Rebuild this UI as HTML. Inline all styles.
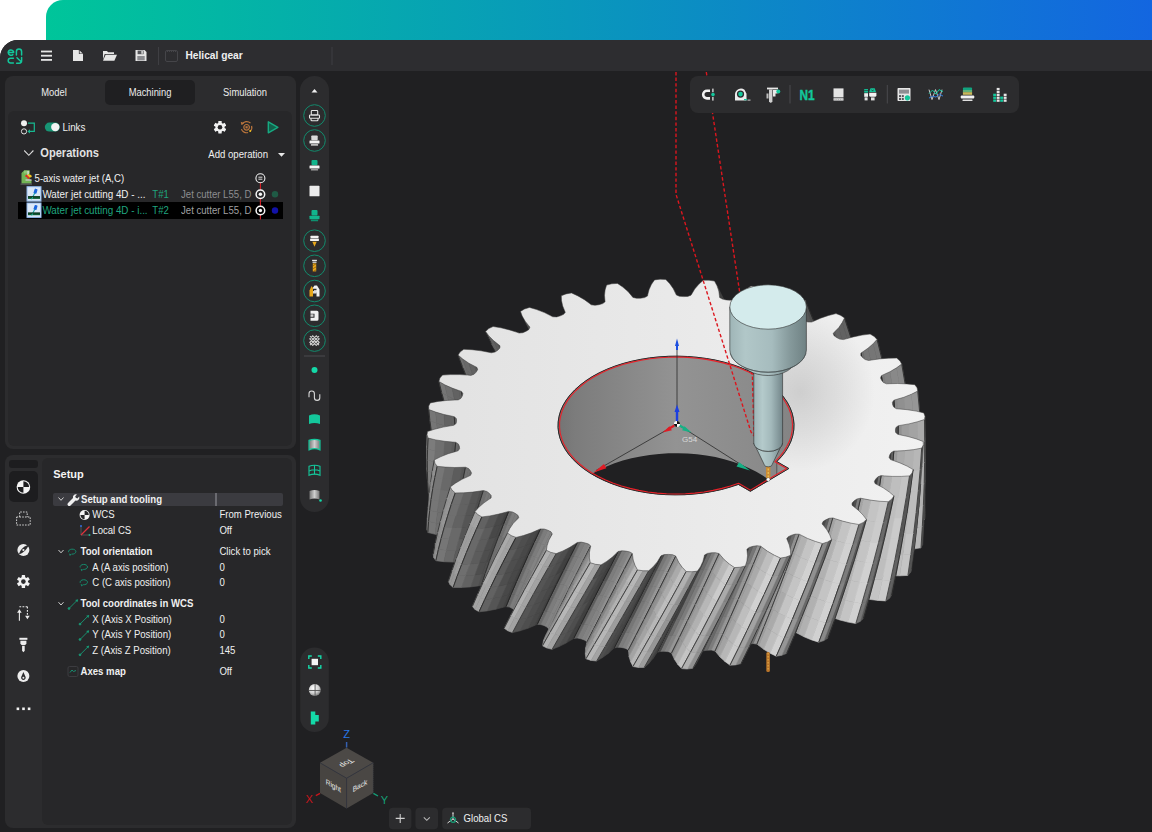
<!DOCTYPE html>
<html lang="en">
<head>
<meta charset="utf-8">
<title>Helical gear</title>
<style>
*{box-sizing:border-box;margin:0;padding:0}
html,body{width:1152px;height:832px;overflow:hidden;background:#fff}
body{font-family:"Liberation Sans",sans-serif;color:#e8e8e8;position:relative;font-size:10.5px}
.abs{position:absolute}
#banner{left:46px;top:0;width:1106px;height:60px;border-top-left-radius:17px;background:linear-gradient(90deg,#00c59a 0%,#1366e0 100%)}
#app{left:0;top:40px;width:1152px;height:792px;background:#202022;border-top-left-radius:18px;overflow:hidden}
#titlebar{left:0;top:0;width:1152px;height:31px;background:#2d2d30}
.panel{background:#2c2c2e;border-radius:8px}
.inner{background:#272729;border-radius:6px}
.tab{font-size:9.4px;color:#ececec;transform:scaleY(1.13);transform-origin:50% 55%}
.r{font-size:9.6px;color:#f0f0f0}
.r,.o{transform:scaleY(1.13);transform-origin:0 50%}
.t{position:absolute;white-space:nowrap;line-height:1}
</style>
</head>
<body>
<div id="banner" class="abs"></div>
<div id="app" class="abs">
<div id="titlebar" class="abs"></div>

<svg class="abs" style="left:0;top:0" width="340" height="31" viewBox="0 0 340 31">
 <!-- ENCY logo -->
 <g fill="none" stroke="#12c79b" stroke-width="1.5" stroke-linecap="round" stroke-linejoin="round">
  <path d="M13.6 12.6H8.2M8.2 12.6a2.8 2.8 0 0 1 5.5-.6M8.2 12.6a2.8 2.8 0 0 0 4.6 2"/>
  <path d="M16.4 15V11.6a2.6 2.6 0 0 1 5.2 0V15"/>
  <path d="M13.4 18.2H10.6a2.4 2.4 0 0 0 0 4.8h2.8"/>
  <path d="M21.6 17.6v3.2a2.4 2.4 0 0 1-2.4 2.4h-2.6M17 17.8l3.6 3.4"/>
 </g>
 <!-- hamburger -->
 <g fill="#e6e6e6"><rect x="41" y="10.6" width="11" height="1.8"/><rect x="41" y="14.8" width="11" height="1.8"/><rect x="41" y="19" width="11" height="1.8"/></g>
 <!-- new file -->
 <path d="M73 10h5.5l4.5 4.3V21H73z" fill="#e6e6e6"/><path d="M78.9 10.2l3.9 3.8h-3.9z" fill="#2d2d30"/><path d="M79.6 10.6l3 3h-3z" fill="#dcdcdc"/>
 <!-- open folder -->
 <path d="M103 11h4l1 1.3h6V14h-9.3L103 19.5z" fill="#e6e6e6"/><path d="M105.6 14.8H117l-2.6 6H103z" fill="#e6e6e6"/>
 <!-- save -->
 <path d="M135.5 10h9l2 2v9h-11z" fill="#e6e6e6"/><rect x="137.6" y="10.6" width="6" height="3.6" fill="#55565a"/><rect x="141.4" y="11" width="1.4" height="2.8" fill="#e6e6e6"/><rect x="137.3" y="16" width="7.4" height="4.4" fill="#8a8b8f"/>
 <rect x="158" y="7" width="1" height="18" fill="#3f3f43"/>
 <!-- doc icon dim -->
 <rect x="165.5" y="10.5" width="12" height="11" rx="1.5" fill="none" stroke="#454549" stroke-width="1"/>
 <path d="M167 11.5h9" stroke="#454549" stroke-width="1" stroke-dasharray="1 1"/>
 <rect x="331.500" y="7" width="1" height="18" fill="#3f3f43"/>
</svg>
<div class="t" style="left:185.5px;top:11px;font-size:10.2px;font-weight:bold;color:#f0f0f0">Helical gear</div>

<!--VP0--><svg class="abs" style="left:0;top:-40px" width="1152" height="832" viewBox="0 0 1152 832">
<style>.e{stroke:#1c1c1c;stroke-width:.7;fill:none}.g0{fill:#000000;stroke:#000000}.g1{fill:#070707;stroke:#070707}.g2{fill:#0d0d0d;stroke:#0d0d0d}.g3{fill:#141414;stroke:#141414}.g4{fill:#1a1a1a;stroke:#1a1a1a}.g5{fill:#212121;stroke:#212121}.g6{fill:#272727;stroke:#272727}.g7{fill:#2e2e2e;stroke:#2e2e2e}.g8{fill:#343434;stroke:#343434}.g9{fill:#3b3b3b;stroke:#3b3b3b}.g10{fill:#414141;stroke:#414141}.g11{fill:#484848;stroke:#484848}.g12{fill:#4e4e4e;stroke:#4e4e4e}.g13{fill:#555555;stroke:#555555}.g14{fill:#5c5c5c;stroke:#5c5c5c}.g15{fill:#626262;stroke:#626262}.g16{fill:#696969;stroke:#696969}.g17{fill:#6f6f6f;stroke:#6f6f6f}.g18{fill:#767676;stroke:#767676}.g19{fill:#7c7c7c;stroke:#7c7c7c}.g20{fill:#838383;stroke:#838383}.g21{fill:#898989;stroke:#898989}.g22{fill:#909090;stroke:#909090}.g23{fill:#969696;stroke:#969696}.g24{fill:#9d9d9d;stroke:#9d9d9d}.g25{fill:#a3a3a3;stroke:#a3a3a3}.g26{fill:#aaaaaa;stroke:#aaaaaa}.g27{fill:#b1b1b1;stroke:#b1b1b1}.g28{fill:#b7b7b7;stroke:#b7b7b7}.g29{fill:#bebebe;stroke:#bebebe}.g30{fill:#c4c4c4;stroke:#c4c4c4}.g31{fill:#cbcbcb;stroke:#cbcbcb}.g32{fill:#d1d1d1;stroke:#d1d1d1}.g33{fill:#d8d8d8;stroke:#d8d8d8}.g34{fill:#dedede;stroke:#dedede}.g35{fill:#e5e5e5;stroke:#e5e5e5}.g36{fill:#ebebeb;stroke:#ebebeb}.g37{fill:#f2f2f2;stroke:#f2f2f2}.g38{fill:#f8f8f8;stroke:#f8f8f8}.g39{fill:#ffffff;stroke:#ffffff}</style>
<defs>
<linearGradient id="topg" x1="0" y1="0" x2="1" y2="0"><stop offset="0" stop-color="#e2e2e2"/><stop offset=".55" stop-color="#eaeaea"/><stop offset="1" stop-color="#f1f1f1"/></linearGradient>
<linearGradient id="boreg" x1="0" y1="0" x2="1" y2="0"><stop offset="0" stop-color="#666"/><stop offset=".16" stop-color="#7c7c7c"/><stop offset=".5" stop-color="#939393"/><stop offset=".8" stop-color="#8a8a8a"/><stop offset="1" stop-color="#7c7c7c"/></linearGradient>
<clipPath id="borec"><ellipse cx="676.0" cy="425.5" rx="118.0" ry="69.3486"/></clipPath>
</defs>
<g stroke-width=".6" stroke-linejoin="round">
<path class="g10" d="M723.0 388.5l-1.7-5.4l-8.5-17l2 5.3z"/>
<path class="g11" d="M766.7 391.0l-0.7-4.8l-8.4-17.9l1 4.7z"/><path class="e" d="M766.0 386.2l-8.4-17.9"/>
<path class="g9" d="M679.6 390.1l-2-4.4l-8.3-16.1l2.2 4.4z"/>
<path class="g10" d="M723.4 393.1l-0.4-4.6l-8.2-17.1l0.7 4.6z"/>
<path class="g8" d="M680.4 392.0l-0.8-1.9l-8.1-16.1l0.9 1.8z"/><path class="e" d="M680.4 392.0l-8-16.2"/>
<path class="g11" d="M766.5 396.5l0.2-5.5l-8.1-18l0.2 5.5z"/>
<path class="g10" d="M714.8 371.4l-2-5.3l-8.6-16.8l2.3 5.2z"/>
<path class="g9" d="M723.6 395.0l-0.2-1.9l-7.9-17.1l0.3 1.9z"/><path class="e" d="M723.6 395.0l-7.8-17.1"/>
<path class="g11" d="M758.6 373.0l-1-4.7l-8.5-17.8l1.4 4.7z"/><path class="e" d="M757.6 368.3l-8.5-17.8"/>
<path class="g10" d="M765.5 401.0l1-4.5l-7.7-18l-0.8 4.5z"/>
<path class="g10" d="M715.5 376.0l-0.7-4.6l-8.3-16.9l1.1 4.6z"/>
<path class="g11" d="M758.8 378.5l-0.2-5.5l-8.1-17.8l0.5 5.5z"/>
<path class="g12" d="M808.6 403.9l0.9-4.7l-7.6-18.9l-0.6 4.8z"/><path class="e" d="M809.5 399.2l-7.6-18.9"/>
<path class="g10" d="M706.5 354.5l-2.3-5.2l-8.5-16.7l2.6 5.2z"/>
<path class="g10" d="M765.0 402.9l0.5-1.9l-7.5-18l-0.3 1.9z"/><path class="e" d="M765.0 402.9l-7.3-18"/>
<path class="g9" d="M715.8 377.9l-0.3-1.9l-7.9-16.9l0.4 1.9z"/><path class="e" d="M715.8 377.9l-7.8-16.9"/>
<path class="g11" d="M750.5 355.2l-1.4-4.7l-8.5-17.6l1.6 4.7z"/><path class="e" d="M749.1 350.5l-8.5-17.6"/>
<path class="g10" d="M758.0 383.0l0.8-4.5l-7.8-17.8l-0.5 4.5z"/>
<path class="g12" d="M806.6 409.3l2-5.4l-7.3-18.8l-1.6 5.3z"/>
<path class="g9" d="M707.6 359.1l-1.1-4.6l-8.2-16.7l1.3 4.5z"/>
<path class="g12" d="M801.3 385.1l0.6-4.8l-7.8-18.8l-0.2 4.8z"/><path class="e" d="M801.9 380.3l-7.8-18.8"/>
<path class="g11" d="M751.0 360.7l-0.5-5.5l-8.3-17.6l0.8 5.4z"/>
<path class="g10" d="M757.7 384.9l0.3-1.9l-7.5-17.8l-0.3 1.9z"/><path class="e" d="M757.7 384.9l-7.5-17.8"/>
<path class="g11" d="M742.2 337.6l-1.6-4.7l-8.6-17.5l1.9 4.7z"/><path class="e" d="M740.6 332.9l-8.6-17.5"/>
<path class="g9" d="M708.0 361.0l-0.4-1.9l-8-16.8l0.5 1.9z"/><path class="e" d="M708.0 361.0l-7.9-16.8"/>
<path class="g13" d="M804.1 413.6l2.5-4.3l-6.9-18.9l-2.3 4.4z"/>
<path class="g12" d="M799.7 390.4l1.6-5.3l-7.4-18.8l-1.4 5.4z"/>
<path class="g10" d="M750.5 365.2l0.5-4.5l-8-17.7l-0.2 4.6z"/>
<path class="g12" d="M793.9 366.3l0.2-4.8l-7.9-18.5l0 4.8z"/><path class="e" d="M794.1 361.5l-7.9-18.5"/>
<path class="g12" d="M803.0 415.4l1.1-1.8l-6.7-18.8l-1 1.8z"/><path class="e" d="M803.0 415.4l-6.6-18.8"/>
<path class="g11" d="M743.0 343.0l-0.8-5.4l-8.3-17.5l1.1 5.4z"/>
<path class="g9" d="M699.6 342.3l-1.3-4.5l-8.3-16.5l1.5 4.5z"/>
<path class="g9" d="M750.2 367.1l0.3-1.9l-7.7-17.6l-0.1 1.9z"/><path class="e" d="M750.2 367.1l-7.5-17.6"/>
<path class="g11" d="M733.9 320.1l-1.9-4.7l-8.7-17.2l2.2 4.6z"/><path class="e" d="M732.0 315.4l-8.7-17.2"/>
<path class="g12" d="M797.4 394.8l2.3-4.4l-7.2-18.7l-2 4.5z"/>
<path class="g9" d="M700.1 344.2l-0.5-1.9l-8.1-16.5l0.7 1.8z"/><path class="e" d="M700.1 344.2l-7.9-16.6"/>
<path class="g12" d="M792.5 371.7l1.4-5.4l-7.7-18.5l-1 5.4z"/>
<path class="g15" d="M845.4 421.4l2.4-4.6l-6.5-19.7l-2.1 4.7z"/><path class="e" d="M847.8 416.8l-6.5-19.7"/>
<path class="g12" d="M786.2 347.8l0-4.8l-8-18.4l0.3 4.8z"/><path class="e" d="M786.2 343.0l-8-18.4"/>
<path class="g10" d="M742.8 347.6l0.2-4.6l-8-17.5l0.1 4.6z"/>
<path class="g11" d="M796.4 396.6l1-1.8l-6.9-18.6l-0.8 1.8z"/><path class="e" d="M796.4 396.6l-6.7-18.6"/>
<path class="g13" d="M528.4 416.7l3.2 4.2l-6.1-13.1l-3.4-4.1z"/>
<path class="g10" d="M735.0 325.5l-1.1-5.4l-8.4-17.3l1.4 5.4z"/>
<path class="g9" d="M742.7 349.5l0.1-1.9l-7.7-17.5l0 1.9z"/><path class="e" d="M742.7 349.5l-7.6-17.5"/>
<path class="g12" d="M790.5 376.2l2-4.5l-7.3-18.5l-1.7 4.5z"/>
<path class="g9" d="M691.5 325.8l-1.5-4.5l-8.4-16.4l1.9 4.4z"/>
<path class="g15" d="M841.7 426.4l3.7-5l-6.2-19.6l-3.4 5z"/>
<path class="g14" d="M839.2 401.8l2.1-4.7l-6.8-19.5l-1.8 4.6z"/><path class="e" d="M841.3 397.1l-6.8-19.5"/>
<path class="g12" d="M531.6 420.9l1.4 1.7l-6-13.1l-1.5-1.7z"/><path class="e" d="M533.0 422.6l-6-13.1"/>
<path class="g11" d="M785.2 353.2l1-5.4l-7.7-18.4l-0.7 5.4z"/>
<path class="g12" d="M778.5 329.4l-0.3-4.8l-8.2-18.3l0.6 4.8z"/><path class="e" d="M778.2 324.6l-8.2-18.3"/>
<path class="g11" d="M789.7 378.0l0.8-1.8l-7-18.5l-0.7 1.8z"/><path class="e" d="M789.7 378.0l-6.9-18.5"/>
<path class="g9" d="M692.2 327.6l-0.7-1.8l-8-16.5l0.7 1.9z"/><path class="e" d="M692.2 327.6l-8-16.4"/>
<path class="g10" d="M735.1 330.1l-0.1-4.6l-8.1-17.3l0.4 4.5z"/>
<path class="g15" d="M837.8 430.4l3.9-4l-5.9-19.6l-3.7 4.1z"/>
<path class="g15" d="M835.8 406.8l3.4-5l-6.5-19.6l-3.1 5.2z"/>
<path class="g13" d="M519.0 398.6l3.1 5.1l-6.1-12.9l-3.5-5z"/>
<path class="g14" d="M832.7 382.2l1.8-4.6l-6.9-19.5l-1.6 4.7z"/><path class="e" d="M834.5 377.6l-6.9-19.5"/>
<path class="g11" d="M783.5 357.7l1.7-4.5l-7.4-18.4l-1.4 4.5z"/>
<path class="g10" d="M726.9 308.2l-1.4-5.4l-8.5-17.1l1.8 5.3z"/>
<path class="g9" d="M735.1 332.0l0-1.9l-7.8-17.4l0.1 1.9z"/><path class="e" d="M735.1 332.0l-7.7-17.4"/>
<path class="g14" d="M836.1 432.0l1.7-1.6l-5.7-19.5l-1.6 1.6z"/><path class="e" d="M836.1 432.0l-5.6-19.5"/>
<path class="g11" d="M777.8 334.8l0.7-5.4l-7.9-18.3l-0.3 5.5z"/>
<path class="g9" d="M683.5 309.3l-1.9-4.4l-8.3-16.2l2.1 4.4z"/>
<path class="g15" d="M488.6 426.4l3.1 4.5l-5.5-12.3l-3.4-4.3z"/><path class="e" d="M488.6 426.4l-5.8-12.1"/>
<path class="g11" d="M770.6 311.1l-0.6-4.8l-8.3-18l0.9 4.8z"/><path class="e" d="M770.0 306.3l-8.3-18"/>
<path class="g11" d="M782.8 359.5l0.7-1.8l-7.1-18.4l-0.7 1.9z"/><path class="e" d="M782.8 359.5l-7.1-18.3"/>
<path class="g15" d="M832.1 410.9l3.7-4.1l-6.2-19.4l-3.4 4.1z"/>
<path class="g13" d="M522.1 403.7l3.4 4.1l-5.9-12.9l-3.6-4.1z"/>
<path class="g14" d="M829.6 387.4l3.1-5.2l-6.7-19.4l-2.8 5.2z"/>
<path class="g13" d="M826.0 362.8l1.6-4.7l-7.2-19.3l-1.2 4.8z"/><path class="e" d="M827.6 358.1l-7.2-19.3"/>
<path class="g10" d="M727.3 312.7l-0.4-4.5l-8.1-17.2l0.6 4.6z"/>
<path class="g8" d="M684.2 311.2l-0.7-1.9l-8.1-16.2l0.9 1.8z"/><path class="e" d="M684.2 311.2l-7.9-16.3"/>
<path class="g14" d="M830.5 412.5l1.6-1.6l-5.9-19.4l-1.5 1.7z"/><path class="e" d="M830.5 412.5l-5.8-19.3"/>
<path class="g11" d="M776.4 339.3l1.4-4.5l-7.5-18.2l-1.2 4.5z"/>
<path class="g12" d="M525.5 407.8l1.5 1.7l-5.8-13l-1.6-1.6z"/><path class="e" d="M527.0 409.5l-5.8-13"/>
<path class="g15" d="M491.7 430.9l4.5 4.7l-5.2-12.3l-4.8-4.7z"/>
<path class="g11" d="M770.3 316.6l0.3-5.5l-8-18l0 5.4z"/>
<path class="g9" d="M727.4 314.6l-0.1-1.9l-7.9-17.1l0.2 1.9z"/><path class="e" d="M727.4 314.6l-7.8-17.1"/>
<path class="g14" d="M826.2 391.5l3.4-4.1l-6.4-19.4l-3.1 4.2z"/>
<path class="g14" d="M823.2 368.0l2.8-5.2l-6.8-19.2l-2.5 5.3z"/>
<path class="g10" d="M775.7 341.2l0.7-1.9l-7.3-18.2l-0.5 1.9z"/><path class="e" d="M775.7 341.2l-7.1-18.2"/>
<path class="g13" d="M819.2 343.6l1.2-4.8l-7.3-19.1l-1 4.8z"/><path class="e" d="M820.4 338.8l-7.3-19.1"/>
<path class="g12" d="M545.0 360.9l2.6 4.3l-6.6-13.4l-2.8-4.2z"/>
<path class="g18" d="M875.7 442.8l3.9-4.2l-5.2-20.4l-3.7 4.3z"/><path class="e" d="M879.6 438.6l-5.2-20.4"/>
<path class="g14" d="M496.2 435.6l4.5 3.8l-5-12.5l-4.7-3.6z"/>
<path class="g14" d="M512.5 385.8l3.5 5l-6-12.7l-3.7-5z"/>
<path class="g13" d="M824.7 393.2l1.5-1.7l-6.1-19.3l-1.4 1.7z"/><path class="e" d="M824.7 393.2l-6-19.3"/>
<path class="g11" d="M769.1 321.1l1.2-4.5l-7.7-18.1l-0.9 4.6z"/>
<path class="g12" d="M547.6 365.2l1.1 1.8l-6.5-13.4l-1.2-1.8z"/><path class="e" d="M548.7 367.0l-6.5-13.4"/>
<path class="g13" d="M500.7 439.4l1.9 1.5l-4.9-12.5l-2-1.5z"/><path class="e" d="M502.6 440.9l-4.9-12.5"/>
<path class="g14" d="M820.1 372.2l3.1-4.2l-6.5-19.1l-2.9 4.2z"/>
<path class="g18" d="M870.4 447.3l5.3-4.5l-5-20.3l-5 4.6z"/>
<path class="g17" d="M870.7 422.5l3.7-4.3l-5.5-20.3l-3.4 4.4z"/><path class="e" d="M874.4 418.2l-5.5-20.3"/>
<path class="g15" d="M482.8 414.3l3.4 4.3l-5.2-12.1l-3.6-4.3z"/><path class="e" d="M482.8 414.3l-5.4-12.1"/>
<path class="g13" d="M816.7 348.9l2.5-5.3l-7.1-19.1l-2.1 5.3z"/>
<path class="g13" d="M516.0 390.8l3.6 4.1l-5.7-12.9l-3.9-3.9z"/>
<path class="g12" d="M812.1 324.5l1-4.8l-7.5-19l-0.7 4.8z"/><path class="e" d="M813.1 319.7l-7.5-19"/>
<path class="g10" d="M768.6 323.0l0.5-1.9l-7.4-18l-0.4 1.8z"/><path class="e" d="M768.6 323.0l-7.3-18.1"/>
<path class="g13" d="M818.7 373.9l1.4-1.7l-6.3-19.1l-1.3 1.7z"/><path class="e" d="M818.7 373.9l-6.2-19.1"/>
<path class="g13" d="M519.6 394.9l1.6 1.6l-5.6-12.8l-1.7-1.7z"/><path class="e" d="M521.2 396.5l-5.6-12.8"/>
<path class="g18" d="M865.3 450.7l5.1-3.4l-4.7-20.2l-4.9 3.5z"/>
<path class="g17" d="M865.7 427.1l5-4.6l-5.2-20.2l-4.7 4.7z"/>
<path class="g16" d="M865.5 402.3l3.4-4.4l-5.8-20.2l-3.1 4.5z"/><path class="e" d="M868.9 397.9l-5.8-20.2"/>
<path class="g15" d="M486.2 418.6l4.8 4.7l-4.9-12.2l-5.1-4.6z"/>
<path class="g13" d="M813.8 353.1l2.9-4.2l-6.7-19.1l-2.7 4.3z"/>
<path class="g13" d="M810.0 329.8l2.1-5.3l-7.2-19l-1.8 5.4z"/>
<path class="g16" d="M863.1 452.1l2.2-1.4l-4.5-20.1l-2.1 1.5z"/><path class="e" d="M863.1 452.1l-4.4-20"/>
<path class="g12" d="M538.2 347.6l2.8 4.2l-6.3-13.2l-3.1-4.2z"/>
<path class="g9" d="M862.9 454.4l0.2-2.3l-4.4-20l0 2.2z"/><path class="e" d="M863.1 452.1l-4.4-20"/>
<path class="g13" d="M812.5 354.8l1.3-1.7l-6.5-19l-1.1 1.8z"/><path class="e" d="M812.5 354.8l-6.3-18.9"/>
<path class="g14" d="M506.3 373.1l3.7 5l-5.7-12.6l-4.1-4.9z"/>
<path class="g17" d="M860.8 430.6l4.9-3.5l-4.9-20.1l-4.8 3.6z"/>
<path class="g14" d="M491.0 423.3l4.7 3.6l-4.7-12.3l-4.9-3.5z"/>
<path class="g17" d="M860.8 407.0l4.7-4.7l-5.5-20.1l-4.4 4.8z"/>
<path class="g16" d="M860.0 382.2l3.1-4.5l-5.9-20l-2.9 4.5z"/><path class="e" d="M863.1 377.7l-5.9-20"/>
<path class="g12" d="M541.0 351.8l1.2 1.8l-6.2-13.3l-1.3-1.7z"/><path class="e" d="M542.2 353.6l-6.2-13.3"/>
<path class="g17" d="M460.3 449.8l4.5 4l-4-11.7l-4.8-3.9z"/><path class="e" d="M460.3 449.8l-4.3-11.6"/>
<path class="g13" d="M807.3 334.1l2.7-4.3l-6.9-18.9l-2.4 4.3z"/>
<path class="g16" d="M858.7 432.1l2.1-1.5l-4.8-20l-1.9 1.5z"/><path class="e" d="M858.7 432.1l-4.6-20"/>
<path class="g14" d="M495.7 426.9l2 1.5l-4.6-12.3l-2.1-1.5z"/><path class="e" d="M497.7 428.4l-4.6-12.3"/>
<path class="g16" d="M477.4 402.2l3.6 4.3l-5-12l-3.9-4.2z"/><path class="e" d="M477.4 402.2l-5.3-11.9"/>
<path class="g14" d="M510.0 378.1l3.9 3.9l-5.5-12.7l-4.1-3.8z"/>
<path class="g9" d="M858.7 434.3l0-2.2l-4.6-20l0.1 2.3z"/><path class="e" d="M858.7 432.1l-4.6-20"/>
<path class="g17" d="M856.0 410.6l4.8-3.6l-5.2-20l-4.5 3.7z"/>
<path class="g16" d="M855.6 387.0l4.4-4.8l-5.7-20l-4.1 4.9z"/>
<path class="g15" d="M854.3 362.2l2.9-4.5l-6.3-19.9l-2.5 4.5z"/><path class="e" d="M857.2 357.7l-6.3-19.9"/>
<path class="g12" d="M806.2 335.9l1.1-1.8l-6.6-18.9l-1 1.8z"/><path class="e" d="M806.2 335.9l-6.5-18.9"/>
<path class="g16" d="M464.8 453.8l6 4.1l-3.8-11.8l-6.2-4z"/>
<path class="g13" d="M513.9 382.0l1.7 1.7l-5.4-12.8l-1.8-1.6z"/><path class="e" d="M515.6 383.7l-5.4-12.8"/>
<path class="g16" d="M854.1 412.1l1.9-1.5l-4.9-19.9l-1.9 1.5z"/><path class="e" d="M854.1 412.1l-4.9-19.9"/>
<path class="g15" d="M497.5 356.0l2.7 4.6l-5.8-12.4l-2.9-4.5z"/><path class="e" d="M497.5 356.0l-6-12.3"/>
<path class="g15" d="M481.0 406.5l5.1 4.6l-4.7-12.1l-5.4-4.5z"/>
<path class="g8" d="M854.2 414.4l-0.1-2.3l-4.9-19.9l0.2 2.3z"/><path class="e" d="M854.1 412.1l-4.9-19.9"/>
<path class="g16" d="M851.1 390.7l4.5-3.7l-5.4-19.9l-4.3 3.8z"/>
<path class="g13" d="M531.6 334.4l3.1 4.2l-6.2-13.2l-3.3-4.1z"/>
<path class="g16" d="M850.2 367.1l4.1-4.9l-5.9-19.9l-3.9 5z"/>
<path class="g15" d="M470.8 457.9l5.6 3.2l-3.6-12l-5.8-3z"/>
<path class="g15" d="M848.4 342.3l2.5-4.5l-6.4-19.8l-2.3 4.6z"/><path class="e" d="M850.9 337.8l-6.4-19.8"/>
<path class="g20" d="M898.3 467.2l5.3-3.7l-3.8-20.9l-5 3.8z"/><path class="e" d="M903.6 463.5l-3.8-20.9"/>
<path class="g14" d="M500.2 360.6l4.1 4.9l-5.5-12.5l-4.4-4.8z"/>
<path class="g15" d="M849.2 392.2l1.9-1.5l-5.2-19.8l-1.8 1.6z"/><path class="e" d="M849.2 392.2l-5.1-19.7"/>
<path class="g14" d="M476.4 461.1l2.4 1.3l-3.5-12l-2.5-1.3z"/><path class="e" d="M478.8 462.4l-3.5-12"/>
<path class="g15" d="M486.1 411.1l4.9 3.5l-4.5-12.2l-5.1-3.4z"/>
<path class="g12" d="M534.7 338.6l1.3 1.7l-6.1-13.2l-1.4-1.7z"/><path class="e" d="M536.0 340.3l-6.1-13.2"/>
<path class="g8" d="M849.4 394.5l-0.2-2.3l-5.1-19.7l0.4 2.2z"/><path class="e" d="M849.2 392.2l-5.1-19.7"/>
<path class="g16" d="M845.9 370.9l4.3-3.8l-5.7-19.8l-4 3.9z"/>
<path class="g15" d="M844.5 347.3l3.9-5l-6.2-19.7l-3.5 5.1z"/>
<path class="g14" d="M491.0 414.6l2.1 1.5l-4.4-12.3l-2.2-1.4z"/><path class="e" d="M493.1 416.1l-4.4-12.3"/>
<path class="g21" d="M891.7 471.0l6.6-3.8l-3.5-20.8l-6.4 3.9z"/>
<path class="g20" d="M894.8 446.4l5-3.8l-4-20.8l-4.7 3.9z"/><path class="e" d="M899.8 442.6l-4-20.8"/>
<path class="g17" d="M456.0 438.2l4.8 3.9l-3.8-11.6l-5-3.8z"/><path class="e" d="M456.0 438.2l-4-11.5"/>
<path class="g14" d="M504.3 365.5l4.1 3.8l-5.2-12.5l-4.4-3.8z"/>
<path class="g16" d="M472.1 390.3l3.9 4.2l-4.7-11.9l-4.1-4.1z"/><path class="e" d="M472.1 390.3l-4.9-11.8"/>
<path class="g15" d="M844.1 372.5l1.8-1.6l-5.4-19.7l-1.7 1.6z"/><path class="e" d="M844.1 372.5l-5.3-19.7"/>
<path class="g20" d="M885.5 473.8l6.2-2.8l-3.3-20.7l-6 2.9z"/>
<path class="g8" d="M844.5 374.7l-0.4-2.2l-5.3-19.7l0.5 2.3z"/><path class="e" d="M844.1 372.5l-5.3-19.7"/>
<path class="g13" d="M508.4 369.3l1.8 1.6l-5.2-12.6l-1.8-1.5z"/><path class="e" d="M510.2 370.9l-5.2-12.6"/>
<path class="g20" d="M888.4 450.3l6.4-3.9l-3.7-20.7l-6.3 4z"/>
<path class="g19" d="M891.1 425.7l4.7-3.9l-4.3-20.8l-4.5 4z"/><path class="e" d="M895.8 421.8l-4.3-20.8"/>
<path class="g15" d="M840.5 351.2l4-3.9l-5.8-19.6l-3.8 3.9z"/>
<path class="g16" d="M460.8 442.1l6.2 4l-3.5-11.7l-6.5-3.9z"/>
<path class="g15" d="M491.5 343.7l2.9 4.5l-5.5-12.3l-3.3-4.4z"/><path class="e" d="M491.5 343.7l-5.9-12.2"/>
<path class="g19" d="M882.9 474.9l2.6-1.1l-3.1-20.6l-2.6 1.2z"/><path class="e" d="M882.9 474.9l-3.1-20.5"/>
<path class="g16" d="M476.0 394.5l5.4 4.5l-4.5-12.1l-5.6-4.3z"/>
<path class="g14" d="M838.8 352.8l1.7-1.6l-5.6-19.6l-1.6 1.7z"/><path class="e" d="M838.8 352.8l-5.5-19.5"/>
<path class="g9" d="M882.0 477.1l0.9-2.2l-3.1-20.5l-0.7 2.3z"/><path class="e" d="M882.9 474.9l-3.1-20.5"/>
<path class="g20" d="M882.4 453.2l6-2.9l-3.6-20.6l-5.8 3.1z"/>
<path class="g15" d="M467.0 446.1l5.8 3l-3.3-11.8l-6-2.9z"/>
<path class="g20" d="M884.8 429.7l6.3-4l-4.1-20.7l-6 4.2z"/>
<path class="g19" d="M887.0 405.0l4.5-4l-4.6-20.6l-4.2 4.1z"/><path class="e" d="M891.5 401.0l-4.6-20.6"/>
<path class="g8" d="M839.3 355.1l-0.5-2.3l-5.5-19.5l0.6 2.2z"/><path class="e" d="M838.8 352.8l-5.5-19.5"/>
<path class="g15" d="M494.4 348.2l4.4 4.8l-5.3-12.4l-4.6-4.7z"/>
<path class="g18" d="M879.8 454.4l2.6-1.2l-3.4-20.4l-2.4 1.2z"/><path class="e" d="M879.8 454.4l-3.2-20.4"/>
<path class="g14" d="M472.8 449.1l2.5 1.3l-3.3-11.9l-2.5-1.2z"/><path class="e" d="M475.3 450.4l-3.3-11.9"/>
<path class="g15" d="M481.4 399.0l5.1 3.4l-4.2-12.2l-5.4-3.3z"/>
<path class="g9" d="M879.1 456.7l0.7-2.3l-3.2-20.4l-0.7 2.2z"/><path class="e" d="M879.8 454.4l-3.2-20.4"/>
<path class="g19" d="M879.0 432.8l5.8-3.1l-3.8-20.5l-5.6 3.2z"/>
<path class="g18" d="M882.7 384.5l4.2-4.1l-4.8-20.6l-4 4.2z"/><path class="e" d="M886.9 380.4l-4.8-20.6"/>
<path class="g19" d="M881.0 409.2l6-4.2l-4.3-20.5l-5.7 4.3z"/>
<path class="g14" d="M486.5 402.4l2.2 1.4l-4.2-12.2l-2.2-1.4z"/><path class="e" d="M488.7 403.8l-4.2-12.2"/>
<path class="g18" d="M440.3 475.9l5.7 3.4l-2.4-11.3l-6-3.3z"/><path class="e" d="M440.3 475.9l-2.7-11.2"/>
<path class="g14" d="M498.8 353.0l4.4 3.8l-5.1-12.5l-4.6-3.7z"/>
<path class="g17" d="M452.0 426.7l5 3.8l-3.5-11.6l-5.2-3.6z"/><path class="e" d="M452.0 426.7l-3.7-11.4"/>
<path class="g18" d="M876.6 434.0l2.4-1.2l-3.6-20.4l-2.4 1.3z"/><path class="e" d="M876.6 434.0l-3.6-20.3"/>
<path class="g16" d="M467.2 378.5l4.1 4.1l-4.4-11.8l-4.4-4.1z"/><path class="e" d="M467.2 378.5l-4.7-11.8"/>
<path class="g9" d="M875.9 436.2l0.7-2.2l-3.6-20.3l-0.5 2.2z"/><path class="e" d="M876.6 434.0l-3.6-20.3"/>
<path class="g19" d="M875.4 412.4l5.6-3.2l-4-20.4l-5.5 3.2z"/>
<path class="g13" d="M503.2 356.8l1.8 1.5l-5-12.5l-1.9-1.5z"/><path class="e" d="M505.0 358.3l-5-12.5"/>
<path class="g18" d="M878.1 364.0l4-4.2l-5.1-20.4l-3.8 4.3z"/><path class="e" d="M882.1 359.8l-5.1-20.4"/>
<path class="g19" d="M877.0 388.8l5.7-4.3l-4.6-20.5l-5.5 4.4z"/>
<path class="g17" d="M446.0 479.3l7.3 3.4l-2.3-11.5l-7.4-3.2z"/>
<path class="g16" d="M457.0 430.5l6.5 3.9l-3.3-11.7l-6.7-3.8z"/>
<path class="g17" d="M873.0 413.7l2.4-1.3l-3.9-20.4l-2.3 1.4z"/><path class="e" d="M873.0 413.7l-3.8-20.3"/>
<path class="g16" d="M471.3 382.6l5.6 4.3l-4.2-11.9l-5.8-4.2z"/>
<path class="g16" d="M453.3 482.7l6.6 2.4l-2.2-11.6l-6.7-2.3z"/>
<path class="g9" d="M872.5 415.9l0.5-2.2l-3.8-20.3l-0.4 2.3z"/><path class="e" d="M873.0 413.7l-3.8-20.3"/>
<path class="g18" d="M871.5 392.0l5.5-3.2l-4.4-20.4l-5.2 3.4z"/>
<path class="g15" d="M463.5 434.4l6 2.9l-3.1-11.8l-6.2-2.8z"/>
<path class="g18" d="M872.6 368.4l5.5-4.4l-4.9-20.3l-5.2 4.5z"/>
<path class="g15" d="M459.9 485.1l2.7 1l-2-11.6l-2.9-1z"/><path class="e" d="M462.6 486.1l-2-11.6"/>
<path class="g14" d="M469.5 437.3l2.5 1.2l-3-11.9l-2.6-1.1z"/><path class="e" d="M472.0 438.5l-3-11.9"/>
<path class="g13" d="M462.6 486.1l1.3 2.2l-1.9-11.7l-1.4-2.1z"/><path class="e" d="M462.6 486.1l-2-11.6"/>
<path class="g15" d="M476.9 386.9l5.4 3.3l-4-12l-5.6-3.2z"/>
<path class="g17" d="M869.2 393.4l2.3-1.4l-4.1-20.2l-2.2 1.4z"/><path class="e" d="M869.2 393.4l-4-20.2"/>
<path class="g23" d="M912.4 493.8l6.4-3l-2.1-21.3l-6.2 3.2z"/><path class="e" d="M918.8 490.8l-2.1-21.3"/>
<path class="g12" d="M472.0 438.5l0.8 2.2l-2.9-11.9l-0.9-2.2z"/><path class="e" d="M472.0 438.5l-3-11.9"/>
<path class="g9" d="M868.8 395.7l0.4-2.3l-4-20.2l-0.3 2.3z"/><path class="e" d="M869.2 393.4l-4-20.2"/>
<path class="g18" d="M867.4 371.8l5.2-3.4l-4.6-20.2l-5 3.5z"/>
<path class="g14" d="M482.3 390.2l2.2 1.4l-3.9-12.1l-2.3-1.3z"/><path class="e" d="M484.5 391.6l-3.9-12.1"/>
<path class="g23" d="M904.6 496.7l7.8-2.9l-1.9-21.1l-7.6 3.1z"/>
<path class="g23" d="M910.5 472.7l6.2-3.2l-2.4-21.2l-6 3.3z"/><path class="e" d="M916.7 469.5l-2.4-21.2"/>
<path class="g18" d="M437.6 464.7l6 3.3l-2.2-11.3l-6.2-3.1z"/><path class="e" d="M437.6 464.7l-2.4-11.1"/>
<path class="g17" d="M448.3 415.3l5.2 3.6l-3.2-11.4l-5.5-3.6z"/><path class="e" d="M448.3 415.3l-3.5-11.4"/>
<path class="g17" d="M865.2 373.2l2.2-1.4l-4.4-20.1l-2.1 1.4z"/><path class="e" d="M865.2 373.2l-4.3-20.1"/>
<path class="g17" d="M462.5 366.7l4.4 4.1l-4.2-11.8l-4.6-3.9z"/><path class="e" d="M462.5 366.7l-4.4-11.6"/>
<path class="g22" d="M897.6 498.7l7-2l-1.7-20.9l-6.9 2.1z"/>
<path class="g9" d="M864.9 375.5l0.3-2.3l-4.3-20.1l-0.1 2.3z"/><path class="e" d="M865.2 373.2l-4.3-20.1"/>
<path class="g23" d="M902.9 475.8l7.6-3.1l-2.2-21.1l-7.4 3.2z"/>
<path class="g17" d="M443.6 468.0l7.4 3.2l-2-11.4l-7.6-3.1z"/>
<path class="g21" d="M894.7 499.5l2.9-0.8l-1.6-20.8l-2.8 0.9z"/><path class="e" d="M894.7 499.5l-1.5-20.7"/>
<path class="g22" d="M908.3 451.6l6-3.3l-2.7-21.2l-5.8 3.5z"/><path class="e" d="M914.3 448.3l-2.7-21.2"/>
<path class="g17" d="M453.5 418.9l6.7 3.8l-3-11.6l-6.9-3.6z"/>
<path class="g11" d="M893.1 501.6l1.6-2.1l-1.5-20.7l-1.6 2.1z"/><path class="e" d="M894.7 499.5l-1.5-20.7"/>
<path class="g16" d="M466.9 370.8l5.8 4.2l-3.9-11.8l-6.1-4.2z"/>
<path class="g22" d="M896.0 477.9l6.9-2.1l-2-21l-6.7 2.3z"/>
<path class="g16" d="M451.0 471.2l6.7 2.3l-1.8-11.5l-6.9-2.2z"/>
<path class="g22" d="M900.9 454.8l7.4-3.2l-2.5-21l-7.2 3.4z"/>
<path class="g15" d="M460.2 422.7l6.2 2.8l-2.8-11.7l-6.4-2.7z"/>
<path class="g22" d="M905.8 430.6l5.8-3.5l-3-21l-5.6 3.5z"/><path class="e" d="M911.6 427.1l-3-21"/>
<path class="g20" d="M893.2 478.8l2.8-0.9l-1.8-20.8l-2.9 1z"/><path class="e" d="M893.2 478.8l-1.9-20.7"/>
<path class="g15" d="M457.7 473.5l2.9 1l-1.8-11.6l-2.9-0.9z"/><path class="e" d="M460.6 474.5l-1.8-11.6"/>
<path class="g15" d="M472.7 375.0l5.6 3.2l-3.7-12l-5.8-3z"/>
<path class="g10" d="M891.6 480.9l1.6-2.1l-1.9-20.7l-1.3 2.1z"/><path class="e" d="M893.2 478.8l-1.9-20.7"/>
<path class="g15" d="M466.4 425.5l2.6 1.1l-2.8-11.8l-2.6-1z"/><path class="e" d="M469.0 426.6l-2.8-11.8"/>
<path class="g14" d="M460.6 474.5l1.4 2.1l-1.7-11.7l-1.5-2z"/><path class="e" d="M460.6 474.5l-1.8-11.6"/>
<path class="g21" d="M894.2 457.1l6.7-2.3l-2.3-20.8l-6.6 2.4z"/>
<path class="g22" d="M898.6 434.0l7.2-3.4l-2.8-21l-7 3.6z"/>
<path class="g13" d="M469.0 426.6l0.9 2.2l-2.6-11.8l-1.1-2.2z"/><path class="e" d="M469.0 426.6l-2.8-11.8"/>
<path class="g21" d="M903.0 409.6l5.6-3.5l-3.3-21.1l-5.3 3.7z"/><path class="e" d="M908.6 406.1l-3.3-21.1"/>
<path class="g14" d="M478.3 378.2l2.3 1.3l-3.6-12l-2.4-1.3z"/><path class="e" d="M480.6 379.5l-3.6-12"/>
<path class="g20" d="M891.3 458.1l2.9-1l-2.2-20.7l-2.7 1z"/><path class="e" d="M891.3 458.1l-2-20.7"/>
<path class="g10" d="M890.0 460.2l1.3-2.1l-2-20.7l-1.3 2.2z"/><path class="e" d="M891.3 458.1l-2-20.7"/>
<path class="g18" d="M444.8 403.9l5.5 3.6l-2.9-11.4l-5.7-3.5z"/><path class="e" d="M444.8 403.9l-3.1-11.3"/>
<path class="g21" d="M892.0 436.4l6.6-2.4l-2.6-20.8l-6.4 2.5z"/>
<path class="g18" d="M435.2 453.6l6.2 3.1l-1.9-11.2l-6.4-3z"/><path class="e" d="M435.2 453.6l-2.1-11.1"/>
<path class="g18" d="M429.3 503.8l6.8 2.7l-0.8-11.1l-6.9-2.6z"/><path class="e" d="M429.3 503.8l-0.9-11"/>
<path class="g21" d="M896.0 413.2l7-3.6l-3-20.9l-6.8 3.7z"/>
<path class="g21" d="M900.0 388.7l5.3-3.7l-3.6-20.9l-5.1 3.7z"/><path class="e" d="M905.3 385.0l-3.6-20.9"/>
<path class="g20" d="M889.3 437.4l2.7-1l-2.4-20.7l-2.7 1.1z"/><path class="e" d="M889.3 437.4l-2.4-20.6"/>
<path class="g17" d="M441.4 456.7l7.6 3.1l-1.7-11.3l-7.8-3z"/>
<path class="g17" d="M436.1 506.5l8.3 2.5l-0.7-11.3l-8.4-2.3z"/>
<path class="g10" d="M888.0 439.6l1.3-2.2l-2.4-20.6l-1.1 2.2z"/><path class="e" d="M889.3 437.4l-2.4-20.6"/>
<path class="g17" d="M450.3 407.5l6.9 3.6l-2.7-11.5l-7.1-3.5z"/>
<path class="g21" d="M889.6 415.7l6.4-2.5l-2.8-20.8l-6.3 2.7z"/>
<path class="g21" d="M893.2 392.4l6.8-3.7l-3.4-20.9l-6.6 3.9z"/>
<path class="g15" d="M444.4 509.0l7.2 1.6l-0.5-11.4l-7.4-1.5z"/>
<path class="g16" d="M449.0 459.8l6.9 2.2l-1.6-11.5l-7-2z"/>
<path class="g19" d="M886.9 416.8l2.7-1.1l-2.7-20.6l-2.6 1.1z"/><path class="e" d="M886.9 416.8l-2.6-20.6"/>
<path class="g15" d="M451.6 510.6l3.1 0.7l-0.6-11.5l-3-0.6z"/><path class="e" d="M454.7 511.3l-0.6-11.5"/>
<path class="g15" d="M457.2 411.1l6.4 2.7l-2.6-11.7l-6.5-2.5z"/>
<path class="g15" d="M455.9 462.0l2.9 0.9l-1.6-11.6l-2.9-0.8z"/><path class="e" d="M458.8 462.9l-1.6-11.6"/>
<path class="g10" d="M885.8 419.0l1.1-2.2l-2.6-20.6l-1 2.2z"/><path class="e" d="M886.9 416.8l-2.6-20.6"/>
<path class="g15" d="M454.7 511.3l1.9 2l-0.4-11.6l-2.1-1.9z"/><path class="e" d="M454.7 511.3l-0.6-11.5"/>
<path class="g11" d="M924.6 519.2l0.6-3.4l-0.5-21.4l-0.4 3.4z"/><path class="e" d="M924.6 519.2l-0.3-21.4"/>
<path class="g20" d="M886.9 395.1l6.3-2.7l-3.2-20.7l-6.1 2.8z"/>
<path class="g15" d="M463.6 413.8l2.6 1l-2.5-11.7l-2.7-1z"/><path class="e" d="M466.2 414.8l-2.5-11.7"/>
<path class="g14" d="M458.8 462.9l1.5 2l-1.4-11.6l-1.7-2z"/><path class="e" d="M458.8 462.9l-1.6-11.6"/>
<path class="g13" d="M466.2 414.8l1.1 2.2l-2.4-11.7l-1.2-2.2z"/><path class="e" d="M466.2 414.8l-2.5-11.7"/>
<path class="g19" d="M884.3 396.2l2.6-1.1l-3-20.6l-2.5 1.2z"/><path class="e" d="M884.3 396.2l-2.9-20.5"/>
<path class="g26" d="M917.4 521.4l7.2-2.2l-0.3-21.4l-7.1 2.4z"/><path class="e" d="M924.6 519.2l-0.3-21.4"/>
<path class="g11" d="M924.3 497.8l0.4-3.4l-0.9-21.3l-0.2 3.3z"/><path class="e" d="M924.3 497.8l-0.7-21.4"/>
<path class="g9" d="M883.3 398.4l1-2.2l-2.9-20.5l-0.9 2.2z"/><path class="e" d="M884.3 396.2l-2.9-20.5"/>
<path class="g25" d="M908.8 523.4l8.6-2l-0.2-21.2l-8.5 2.2z"/>
<path class="g18" d="M441.7 392.6l5.7 3.5l-2.7-11.3l-5.8-3.4z"/><path class="e" d="M441.7 392.6l-2.8-11.2"/>
<path class="g18" d="M433.1 442.5l6.4 3l-1.6-11.2l-6.5-2.8z"/><path class="e" d="M433.1 442.5l-1.7-11"/>
<path class="g25" d="M917.2 500.2l7.1-2.4l-0.7-21.4l-6.9 2.6z"/><path class="e" d="M924.3 497.8l-0.7-21.4"/>
<path class="g19" d="M428.4 492.8l6.9 2.6l-0.5-11.1l-7.1-2.4z"/><path class="e" d="M428.4 492.8l-0.7-10.9"/>
<path class="g11" d="M923.6 476.4l0.2-3.3l-1.2-21.4l0 3.4z"/><path class="e" d="M923.6 476.4l-1-21.3"/>
<path class="g24" d="M901.2 524.6l7.6-1.2l-0.1-21l-7.5 1.3z"/>
<path class="g22" d="M898.1 525.1l3.1-0.5l0-20.9l-3.1 0.5z"/><path class="e" d="M898.1 525.1l0-20.9"/>
<path class="g25" d="M908.7 502.4l8.5-2.2l-0.5-21.2l-8.4 2.3z"/>
<path class="g17" d="M439.5 445.5l7.8 3l-1.4-11.4l-8-2.8z"/>
<path class="g13" d="M895.8 526.9l2.3-1.8l0-20.9l-2.2 1.9z"/><path class="e" d="M898.1 525.1l0-20.9"/>
<path class="g17" d="M447.4 396.1l7.1 3.5l-2.4-11.5l-7.4-3.3z"/>
<path class="g17" d="M435.3 495.4l8.4 2.3l-0.4-11.3l-8.5-2.1z"/>
<path class="g25" d="M916.7 479.0l6.9-2.6l-1-21.3l-6.8 2.6z"/><path class="e" d="M923.6 476.4l-1-21.3"/>
<path class="g11" d="M922.6 455.1l0-3.4l-1.5-21.3l0.2 3.3z"/><path class="e" d="M922.6 455.1l-1.3-21.4"/>
<path class="g24" d="M901.2 503.7l7.5-1.3l-0.4-21.1l-7.4 1.5z"/>
<path class="g15" d="M443.7 497.7l7.4 1.5l-0.3-11.4l-7.5-1.4z"/>
<path class="g8" d="M895.2 529.3l0.6-2.4l0.1-20.8l-0.4 2.4z"/>
<path class="g16" d="M447.3 448.5l7 2l-1.3-11.5l-7.1-1.9z"/>
<path class="g22" d="M898.1 504.2l3.1-0.5l-0.3-20.9l-3 0.6z"/><path class="e" d="M898.1 504.2l-0.2-20.8"/>
<path class="g15" d="M451.1 499.2l3 0.6l-0.2-11.5l-3.1-0.5z"/><path class="e" d="M454.1 499.8l-0.2-11.5"/>
<path class="g15" d="M454.5 399.6l6.5 2.5l-2.2-11.6l-6.7-2.4z"/>
<path class="g24" d="M908.3 481.3l8.4-2.3l-0.9-21.3l-8.2 2.6z"/>
<path class="g15" d="M454.3 450.5l2.9 0.8l-1.2-11.6l-3-0.7z"/><path class="e" d="M457.2 451.3l-1.2-11.6"/>
<path class="g13" d="M895.9 506.1l2.2-1.9l-0.2-20.8l-2.1 1.9z"/><path class="e" d="M898.1 504.2l-0.2-20.8"/>
<path class="g15" d="M454.1 499.8l2.1 1.9l-0.1-11.5l-2.2-1.9z"/><path class="e" d="M454.1 499.8l-0.2-11.5"/>
<path class="g24" d="M915.8 457.7l6.8-2.6l-1.3-21.4l-6.6 2.8z"/><path class="e" d="M922.6 455.1l-1.3-21.4"/>
<path class="g15" d="M461.0 402.1l2.7 1l-2.2-11.7l-2.7-0.9z"/><path class="e" d="M463.7 403.1l-2.2-11.7"/>
<path class="g14" d="M457.2 451.3l1.7 2l-1.1-11.6l-1.8-2z"/><path class="e" d="M457.2 451.3l-1.2-11.6"/>
<path class="g23" d="M900.9 482.8l7.4-1.5l-0.7-21l-7.3 1.6z"/>
<path class="g8" d="M895.5 508.5l0.4-2.4l-0.1-20.8l-0.3 2.4z"/>
<path class="g13" d="M463.7 403.1l1.2 2.2l-2-11.7l-1.4-2.2z"/><path class="e" d="M463.7 403.1l-2.2-11.7"/>
<path class="g14" d="M456.2 501.7l0.3 2.4l0-11.5l-0.4-2.4z"/>
<path class="g22" d="M897.9 483.4l3-0.6l-0.6-20.9l-3 0.7z"/><path class="e" d="M897.9 483.4l-0.6-20.8"/>
<path class="g24" d="M907.6 460.3l8.2-2.6l-1.1-21.2l-8.1 2.7z"/>
<path class="g24" d="M914.7 436.5l6.6-2.8l-1.6-21.3l-6.5 3z"/><path class="e" d="M921.3 433.7l-1.6-21.3"/>
<path class="g12" d="M895.8 485.3l2.1-1.9l-0.6-20.8l-1.9 1.9z"/><path class="e" d="M897.9 483.4l-0.6-20.8"/>
<path class="g18" d="M427.3 478.5l0.4 3.4l-0.3-11l-0.7-3.3z"/><path class="e" d="M427.7 481.9l-0.3-11"/>
<path class="g23" d="M900.3 461.9l7.3-1.6l-1-21.1l-7.1 1.8z"/>
<path class="g19" d="M426.8 529.2l1.1 3.3l0.7-11l-1.3-3.3z"/><path class="e" d="M427.9 532.5l0.7-11"/>
<path class="g8" d="M895.5 487.7l0.3-2.4l-0.4-20.8l-0.2 2.5z"/>
<path class="g21" d="M897.3 462.6l3-0.7l-0.8-20.9l-3 0.7z"/><path class="e" d="M897.3 462.6l-0.8-20.9"/>
<path class="g24" d="M906.6 439.2l8.1-2.7l-1.5-21.1l-7.9 2.8z"/>
<path class="g18" d="M431.4 431.5l6.5 2.8l-1.3-11.1l-6.7-2.7z"/><path class="e" d="M431.4 431.5l-1.5-11"/>
<path class="g23" d="M913.2 415.4l6.5-3l-2-21.3l-6.2 3.1z"/><path class="e" d="M919.7 412.4l-2-21.3"/>
<path class="g19" d="M427.7 481.9l7.1 2.4l-0.2-11.1l-7.2-2.3z"/><path class="e" d="M427.7 481.9l-0.3-11"/>
<path class="g12" d="M895.4 464.5l1.9-1.9l-0.8-20.9l-1.9 2.1z"/><path class="e" d="M897.3 462.6l-0.8-20.9"/>
<path class="g18" d="M427.9 532.5l7.5 1.8l0.9-11.1l-7.7-1.7z"/><path class="e" d="M427.9 532.5l0.7-11"/>
<path class="g23" d="M899.5 441.0l7.1-1.8l-1.3-21l-7 2z"/>
<path class="g17" d="M437.9 434.3l8 2.8l-1.1-11.3l-8.2-2.6z"/>
<path class="g17" d="M434.8 484.3l8.5 2.1l-0.1-11.2l-8.6-2z"/>
<path class="g8" d="M895.2 467.0l0.2-2.5l-0.8-20.7l0 2.4z"/>
<path class="g17" d="M435.4 534.3l8.9 1.5l1-11.3l-9-1.3z"/>
<path class="g23" d="M905.3 418.2l7.9-2.8l-1.7-21.2l-7.7 3.1z"/>
<path class="g21" d="M896.5 441.7l3-0.7l-1.2-20.8l-3 0.8z"/><path class="e" d="M896.5 441.7l-1.2-20.7"/>
<path class="g15" d="M444.3 535.8l7.7 0.8l1-11.5l-7.7-0.6z"/>
<path class="g15" d="M443.3 486.4l7.5 1.4l0-11.5l-7.6-1.1z"/>
<path class="g14" d="M452.0 536.6l3.2 0.3l1-11.6l-3.2-0.2z"/><path class="e" d="M455.2 536.9l1-11.6"/>
<path class="g16" d="M445.9 437.1l7.1 1.9l-1-11.5l-7.2-1.7z"/>
<path class="g11" d="M894.6 443.8l1.9-2.1l-1.2-20.7l-1.7 2z"/><path class="e" d="M896.5 441.7l-1.2-20.7"/>
<path class="g14" d="M450.8 487.8l3.1 0.5l0-11.5l-3.1-0.5z"/><path class="e" d="M453.9 488.3l0-11.5"/>
<path class="g16" d="M455.2 536.9l2.6 1.7l1.1-11.6l-2.7-1.7z"/><path class="e" d="M455.2 536.9l1-11.6"/>
<path class="g22" d="M898.3 420.2l7-2l-1.5-20.9l-7 2z"/>
<path class="g15" d="M453.0 439.0l3 0.7l-1-11.5l-3-0.7z"/><path class="e" d="M456.0 439.7l-1-11.5"/>
<path class="g15" d="M453.9 488.3l2.2 1.9l0.1-11.6l-2.3-1.8z"/><path class="e" d="M453.9 488.3l0-11.5"/>
<path class="g8" d="M894.6 446.2l0-2.4l-1-20.8l0.2 2.4z"/>
<path class="g21" d="M895.3 421.0l3-0.8l-1.5-20.9l-2.9 0.9z"/><path class="e" d="M895.3 421.0l-1.4-20.8"/>
<path class="g15" d="M456.0 439.7l1.8 2l-0.9-11.5l-1.9-2z"/><path class="e" d="M456.0 439.7l-1-11.5"/>
<path class="g15" d="M457.8 538.6l1 2.4l1.2-11.7l-1.1-2.3z"/>
<path class="g14" d="M456.1 490.2l0.4 2.4l0.3-11.6l-0.6-2.4z"/>
<path class="g11" d="M893.6 423.0l1.7-2l-1.4-20.8l-1.5 2.1z"/><path class="e" d="M895.3 421.0l-1.4-20.8"/>
<path class="g12" d="M921.0 547.8l1.7-3.2l1.1-21.4l-1.5 3.2z"/><path class="e" d="M921.0 547.8l1.3-21.4"/>
<path class="g14" d="M458.8 541.0l0.1 2.4l1.5-11.6l-0.4-2.5z"/>
<path class="g28" d="M913.1 549.1l7.9-1.3l1.3-21.4l-7.7 1.6z"/><path class="e" d="M921.0 547.8l1.3-21.4"/>
<path class="g18" d="M426.7 467.6l0.7 3.3l-0.1-10.9l-0.8-3.3z"/><path class="e" d="M427.4 470.9l-0.1-10.9"/>
<path class="g12" d="M922.3 526.4l1.5-3.2l0.9-21.4l-1.3 3.3z"/><path class="e" d="M922.3 526.4l1.1-21.3"/>
<path class="g20" d="M427.3 518.2l1.3 3.3l1.1-11l-1.5-3.2z"/><path class="e" d="M428.6 521.5l1.1-11"/>
<path class="g27" d="M904.0 550.1l9.1-1l1.5-21.1l-9.1 1.1z"/>
<path class="g18" d="M429.9 420.5l6.7 2.7l-0.9-11.1l-6.9-2.6z"/><path class="e" d="M429.9 420.5l-1.1-11"/>
<path class="g25" d="M896.2 550.4l7.8-0.3l1.5-21l-7.7 0.5z"/>
<path class="g24" d="M893.0 550.5l3.2-0.1l1.6-20.8l-3.2 0.1z"/><path class="e" d="M893.0 550.5l1.6-20.8"/>
<path class="g19" d="M427.4 470.9l7.2 2.3l0.1-11.1l-7.4-2.1z"/><path class="e" d="M427.4 470.9l-0.1-10.9"/>
<path class="g15" d="M890.1 552.0l2.9-1.5l1.6-20.8l-2.8 1.6z"/><path class="e" d="M893.0 550.5l1.6-20.8"/>
<path class="g28" d="M914.6 528.0l7.7-1.6l1.1-21.3l-7.6 1.7z"/><path class="e" d="M922.3 526.4l1.1-21.3"/>
<path class="g18" d="M428.6 521.5l7.7 1.7l1.2-11.2l-7.8-1.5z"/><path class="e" d="M428.6 521.5l1.1-11"/>
<path class="g12" d="M923.4 505.1l1.3-3.3l0.6-21.4l-1.1 3.3z"/><path class="e" d="M923.4 505.1l0.8-21.4"/>
<path class="g17" d="M436.6 423.2l8.2 2.6l-0.8-11.3l-8.3-2.4z"/>
<path class="g17" d="M434.6 473.2l8.6 2l0.3-11.3l-8.8-1.8z"/>
<path class="g27" d="M905.5 529.1l9.1-1.1l1.2-21.2l-9 1.3z"/>
<path class="g9" d="M888.7 554.3l1.4-2.3l1.7-20.7l-1.3 2.3z"/>
<path class="g17" d="M436.3 523.2l9 1.3l1.2-11.3l-9-1.2z"/>
<path class="g25" d="M897.8 529.6l7.7-0.5l1.3-21l-7.7 0.6z"/>
<path class="g15" d="M445.3 524.5l7.7 0.6l1.3-11.5l-7.8-0.4z"/>
<path class="g23" d="M894.6 529.7l3.2-0.1l1.3-20.9l-3.3 0.3z"/><path class="e" d="M894.6 529.7l1.2-20.7"/>
<path class="g15" d="M443.2 475.2l7.6 1.1l0.2-11.4l-7.5-1z"/>
<path class="g14" d="M453.0 525.1l3.2 0.2l1.3-11.5l-3.2-0.2z"/><path class="e" d="M456.2 525.3l1.3-11.5"/>
<path class="g15" d="M444.8 425.8l7.2 1.7l-0.7-11.5l-7.3-1.5z"/>
<path class="g27" d="M915.8 506.8l7.6-1.7l0.8-21.4l-7.6 1.9z"/><path class="e" d="M923.4 505.1l0.8-21.4"/>
<path class="g15" d="M891.8 531.3l2.8-1.6l1.2-20.7l-2.6 1.6z"/><path class="e" d="M894.6 529.7l1.2-20.7"/>
<path class="g14" d="M450.8 476.3l3.1 0.5l0.3-11.5l-3.2-0.4z"/><path class="e" d="M453.9 476.8l0.3-11.5"/>
<path class="g16" d="M456.2 525.3l2.7 1.7l1.4-11.6l-2.8-1.6z"/><path class="e" d="M456.2 525.3l1.3-11.5"/>
<path class="g8" d="M888.1 556.7l0.6-2.4l1.8-20.7l-0.5 2.5z"/>
<path class="g12" d="M924.2 483.7l1.1-3.3l0.2-21.4l-0.9 3.3z"/><path class="e" d="M924.2 483.7l0.4-21.4"/>
<path class="g15" d="M452.0 427.5l3 0.7l-0.7-11.5l-3-0.7z"/><path class="e" d="M455.0 428.2l-0.7-11.5"/>
<path class="g16" d="M453.9 476.8l2.3 1.8l0.4-11.5l-2.4-1.8z"/><path class="e" d="M453.9 476.8l0.3-11.5"/>
<path class="g26" d="M906.8 508.1l9-1.3l0.8-21.2l-8.9 1.5z"/>
<path class="g9" d="M890.5 533.6l1.3-2.3l1.4-20.7l-1.2 2.4z"/>
<path class="g15" d="M455.0 428.2l1.9 2l-0.5-11.6l-2.1-1.9z"/><path class="e" d="M455.0 428.2l-0.7-11.5"/>
<path class="g15" d="M458.9 527.0l1.1 2.3l1.6-11.6l-1.3-2.3z"/>
<path class="g25" d="M899.1 508.7l7.7-0.6l0.9-21l-7.7 0.7z"/>
<path class="g23" d="M895.8 509.0l3.3-0.3l0.9-20.9l-3.1 0.4z"/><path class="e" d="M895.8 509.0l1.1-20.8"/>
<path class="g27" d="M916.6 485.6l7.6-1.9l0.4-21.4l-7.4 2z"/><path class="e" d="M924.2 483.7l0.4-21.4"/>
<path class="g14" d="M456.2 478.6l0.6 2.4l0.6-11.5l-0.8-2.4z"/>
<path class="g12" d="M924.6 462.3l0.9-3.3l-0.1-21.4l-0.7 3.3z"/><path class="e" d="M924.6 462.3l0.1-21.4"/>
<path class="g14" d="M893.2 510.6l2.6-1.6l1.1-20.8l-2.6 1.7z"/><path class="e" d="M895.8 509.0l1.1-20.8"/>
<path class="g8" d="M890.0 536.1l0.5-2.5l1.5-20.6l-0.3 2.4z"/>
<path class="g15" d="M460.0 529.3l0.4 2.5l1.6-11.7l-0.4-2.4z"/>
<path class="g26" d="M907.7 487.1l8.9-1.5l0.6-21.3l-8.8 1.7z"/>
<path class="g20" d="M433.2 554.2l0.6 3.4l2.2-11.1l-0.7-3.3z"/><path class="e" d="M433.2 554.2l2.1-11"/>
<path class="g9" d="M892.0 513.0l1.2-2.4l1.1-20.7l-1 2.3z"/>
<path class="g25" d="M900.0 487.8l7.7-0.7l0.7-21.1l-7.7 1z"/>
<path class="g26" d="M917.2 464.3l7.4-2l0.1-21.4l-7.3 2.2z"/><path class="e" d="M924.6 462.3l0.1-21.4"/>
<path class="g23" d="M896.9 488.2l3.1-0.4l0.7-20.8l-3.1 0.3z"/><path class="e" d="M896.9 488.2l0.7-20.9"/>
<path class="g19" d="M426.5 456.7l0.8 3.3l0.3-10.9l-1-3.3z"/><path class="e" d="M427.3 460.0l0.3-10.9"/>
<path class="g11" d="M924.7 440.9l0.7-3.3l-0.4-21.4l-0.5 3.3z"/><path class="e" d="M924.7 440.9l-0.2-21.4"/>
<path class="g14" d="M894.3 489.9l2.6-1.7l0.7-20.9l-2.5 1.8z"/><path class="e" d="M896.9 488.2l0.7-20.9"/>
<path class="g20" d="M428.2 507.3l1.5 3.2l1.4-11l-1.7-3.2z"/><path class="e" d="M429.7 510.5l1.4-11"/>
<path class="g8" d="M891.7 515.4l0.3-2.4l1.3-20.8l-0.2 2.5z"/>
<path class="g26" d="M908.4 466.0l8.8-1.7l0.2-21.2l-8.7 1.9z"/>
<path class="g22" d="M433.8 557.6l2.1 3.1l2.5-11.1l-2.4-3.1z"/><path class="e" d="M435.9 560.7l2.5-11.1"/>
<path class="g19" d="M427.3 460.0l7.4 2.1l0.4-11.1l-7.5-1.9z"/><path class="e" d="M427.3 460.0l0.3-10.9"/>
<path class="g9" d="M893.3 492.2l1-2.3l0.8-20.8l-0.8 2.4z"/>
<path class="g24" d="M900.7 467.0l7.7-1l0.3-21l-7.5 1.1z"/>
<path class="g26" d="M917.4 443.1l7.3-2.2l-0.2-21.4l-7.2 2.3z"/><path class="e" d="M924.7 440.9l-0.2-21.4"/>
<path class="g18" d="M429.7 510.5l7.8 1.5l1.4-11.1l-7.8-1.4z"/><path class="e" d="M429.7 510.5l1.4-11"/>
<path class="g23" d="M897.6 467.3l3.1-0.3l0.5-20.9l-3.2 0.4z"/><path class="e" d="M897.6 467.3l0.4-20.8"/>
<path class="g18" d="M435.9 560.7l8 1l2.6-11.4l-8.1-0.7z"/><path class="e" d="M435.9 560.7l2.5-11.1"/>
<path class="g13" d="M461.0 562.0l3.2-0.1l2.5-11.7l-3.2 0.1z"/><path class="e" d="M464.2 561.9l2.5-11.7"/>
<path class="g17" d="M434.7 462.1l8.8 1.8l0.5-11.3l-8.9-1.6z"/>
<path class="g16" d="M443.9 561.7l9.3 0.4l2.6-11.5l-9.3-0.3z"/>
<path class="g14" d="M453.2 562.1l7.8-0.1l2.5-11.7l-7.7 0.3z"/>
<path class="g17" d="M437.5 512.0l9 1.2l1.6-11.4l-9.2-0.9z"/>
<path class="g14" d="M895.1 469.1l2.5-1.8l0.4-20.8l-2.3 1.8z"/><path class="e" d="M897.6 467.3l0.4-20.8"/>
<path class="g17" d="M464.2 561.9l3.1 1.4l2.6-11.8l-3.2-1.3z"/><path class="e" d="M464.2 561.9l2.5-11.7"/>
<path class="g25" d="M908.7 445.0l8.7-1.9l-0.1-21.3l-8.5 2.1z"/>
<path class="g15" d="M446.5 513.2l7.8 0.4l1.6-11.5l-7.8-0.3z"/>
<path class="g14" d="M454.3 513.6l3.2 0.2l1.6-11.6l-3.2-0.1z"/><path class="e" d="M457.5 513.8l1.6-11.6"/>
<path class="g15" d="M443.5 463.9l7.5 1l0.6-11.5l-7.6-0.8z"/>
<path class="g14" d="M451.0 464.9l3.2 0.4l0.6-11.5l-3.2-0.4z"/><path class="e" d="M454.2 465.3l0.6-11.5"/>
<path class="g16" d="M457.5 513.8l2.8 1.6l1.6-11.7l-2.8-1.5z"/><path class="e" d="M457.5 513.8l1.6-11.6"/>
<path class="g17" d="M467.3 563.3l1.8 2.2l2.7-11.8l-1.9-2.2z"/>
<path class="g24" d="M901.2 446.1l7.5-1.1l0.1-21.1l-7.5 1.3z"/>
<path class="g9" d="M894.3 471.5l0.8-2.4l0.6-20.8l-0.7 2.4z"/>
<path class="g16" d="M454.2 465.3l2.4 1.8l0.7-11.6l-2.5-1.7z"/><path class="e" d="M454.2 465.3l0.6-11.5"/>
<path class="g22" d="M898.0 446.5l3.2-0.4l0.1-20.9l-3.1 0.5z"/><path class="e" d="M898.0 446.5l0.2-20.8"/>
<path class="g16" d="M460.3 515.4l1.3 2.3l1.8-11.7l-1.5-2.3z"/>
<path class="g11" d="M910.6 572.4l1.1-3.3l2.7-21.1l-0.9 3.3z"/><path class="e" d="M911.7 569.1l2.7-21.1"/>
<path class="g13" d="M895.7 448.3l2.3-1.8l0.2-20.8l-2.3 1.8z"/><path class="e" d="M898.0 446.5l0.2-20.8"/>
<path class="g16" d="M469.1 565.5l0.9 2.4l2.9-11.9l-1.1-2.3z"/>
<path class="g15" d="M456.6 467.1l0.8 2.4l0.8-11.6l-0.9-2.4z"/>
<path class="g15" d="M461.6 517.7l0.4 2.4l2-11.7l-0.6-2.4z"/>
<path class="g9" d="M895.0 450.7l0.7-2.4l0.2-20.8l-0.5 2.4z"/>
<path class="g19" d="M429.4 492.9l0 3.4l1.5-11l-0.2-3.4z"/><path class="e" d="M429.4 492.9l1.3-11"/>
<path class="g13" d="M907.9 575.4l2.7-3l2.9-21.1l-2.6 3z"/><path class="e" d="M907.9 575.4l3-21.1"/>
<path class="g11" d="M913.5 551.3l0.9-3.3l2.4-21.2l-0.7 3.3z"/><path class="e" d="M914.4 548.0l2.4-21.2"/>
<path class="g21" d="M435.3 543.2l0.7 3.3l2.6-11.1l-0.9-3.4z"/><path class="e" d="M435.3 543.2l2.4-11.2"/>
<path class="g25" d="M879.5 574.8l3.2 0.3l3.1-20.6l-3.2-0.2z"/><path class="e" d="M879.5 574.8l3.1-20.5"/>
<path class="g26" d="M882.7 575.1l7.7 0.6l3.1-20.7l-7.7-0.5z"/>
<path class="g30" d="M899.7 575.8l8.2-0.4l3-21.1l-8.1 0.6z"/><path class="e" d="M907.9 575.4l3-21.1"/>
<path class="g17" d="M876.2 576.0l3.3-1.2l3.1-20.5l-3.2 1.3z"/><path class="e" d="M879.5 574.8l3.1-20.5"/>
<path class="g29" d="M890.4 575.7l9.3 0.1l3.1-20.9l-9.3 0.1z"/>
<path class="g19" d="M426.6 445.8l1 3.3l0.6-11l-1.2-3.3z"/><path class="e" d="M427.6 449.1l0.6-11"/>
<path class="g21" d="M429.4 496.3l1.7 3.2l1.7-11l-1.9-3.2z"/><path class="e" d="M431.1 499.5l1.7-11"/>
<path class="g10" d="M874.1 578.1l2.1-2.1l3.2-20.4l-2.1 2.1z"/>
<path class="g13" d="M910.9 554.3l2.6-3l2.6-21.2l-2.4 3.1z"/><path class="e" d="M910.9 554.3l2.8-21.1"/>
<path class="g22" d="M436.0 546.5l2.4 3.1l2.8-11.2l-2.6-3z"/><path class="e" d="M438.4 549.6l2.8-11.2"/>
<path class="g11" d="M916.1 530.1l0.7-3.3l2.1-21.3l-0.6 3.4z"/><path class="e" d="M916.8 526.8l2.1-21.3"/>
<path class="g19" d="M427.6 449.1l7.5 1.9l0.7-11.1l-7.6-1.8z"/><path class="e" d="M427.6 449.1l0.6-11"/>
<path class="g18" d="M431.1 499.5l7.8 1.4l1.8-11.2l-7.9-1.2z"/><path class="e" d="M431.1 499.5l1.7-11"/>
<path class="g30" d="M902.8 554.9l8.1-0.6l2.8-21.1l-8.1 0.7z"/><path class="e" d="M910.9 554.3l2.8-21.1"/>
<path class="g25" d="M882.6 554.3l3.2 0.2l2.8-20.6l-3.2-0.1z"/><path class="e" d="M882.6 554.3l2.8-20.5"/>
<path class="g18" d="M438.4 549.6l8.1 0.7l2.8-11.3l-8.1-0.6z"/><path class="e" d="M438.4 549.6l2.8-11.2"/>
<path class="g9" d="M872.7 580.4l1.4-2.3l3.2-20.4l-1.2 2.3z"/>
<path class="g13" d="M463.5 550.3l3.2-0.1l2.8-11.8l-3.2 0.2z"/><path class="e" d="M466.7 550.2l2.8-11.8"/>
<path class="g26" d="M885.8 554.5l7.7 0.5l2.9-20.8l-7.8-0.3z"/>
<path class="g28" d="M893.5 555.0l9.3-0.1l2.8-21l-9.2 0.3z"/>
<path class="g14" d="M455.8 550.6l7.7-0.3l2.8-11.7l-7.7 0.5z"/>
<path class="g17" d="M879.4 555.6l3.2-1.3l2.8-20.5l-3.2 1.3z"/><path class="e" d="M882.6 554.3l2.8-20.5"/>
<path class="g16" d="M446.5 550.3l9.3 0.3l2.8-11.5l-9.3-0.1z"/>
<path class="g17" d="M466.7 550.2l3.2 1.3l2.9-11.9l-3.3-1.2z"/><path class="e" d="M466.7 550.2l2.8-11.8"/>
<path class="g17" d="M435.1 451.0l8.9 1.6l0.8-11.3l-9-1.4z"/>
<path class="g17" d="M438.9 500.9l9.2 0.9l1.8-11.4l-9.2-0.7z"/>
<path class="g14" d="M448.1 501.8l7.8 0.3l1.8-11.6l-7.8-0.1z"/>
<path class="g13" d="M913.7 533.2l2.4-3.1l2.2-21.2l-2.1 3.1z"/><path class="e" d="M913.7 533.2l2.5-21.2"/>
<path class="g14" d="M455.9 502.1l3.2 0.1l1.8-11.6l-3.2-0.1z"/><path class="e" d="M459.1 502.2l1.8-11.6"/>
<path class="g11" d="M918.3 508.9l0.6-3.4l1.7-21.3l-0.3 3.4z"/><path class="e" d="M918.9 505.5l1.7-21.3"/>
<path class="g15" d="M444.0 452.6l7.6 0.8l0.9-11.4l-7.7-0.7z"/>
<path class="g10" d="M877.3 557.7l2.1-2.1l2.8-20.5l-1.9 2.2z"/>
<path class="g16" d="M459.1 502.2l2.8 1.5l2-11.7l-3-1.4z"/><path class="e" d="M459.1 502.2l1.8-11.6"/>
<path class="g17" d="M469.9 551.5l1.9 2.2l3-11.9l-2-2.2z"/>
<path class="g14" d="M451.6 453.4l3.2 0.4l0.9-11.5l-3.2-0.3z"/><path class="e" d="M454.8 453.8l0.9-11.5"/>
<path class="g16" d="M454.8 453.8l2.5 1.7l1-11.6l-2.6-1.6z"/><path class="e" d="M454.8 453.8l0.9-11.5"/>
<path class="g29" d="M905.6 533.9l8.1-0.7l2.5-21.2l-8 0.9z"/><path class="e" d="M913.7 533.2l2.5-21.2"/>
<path class="g24" d="M885.4 533.8l3.2 0.1l2.5-20.6l-3.2-0.1z"/><path class="e" d="M885.4 533.8l2.5-20.6"/>
<path class="g28" d="M896.4 534.2l9.2-0.3l2.6-21l-9.3 0.5z"/>
<path class="g26" d="M888.6 533.9l7.8 0.3l2.5-20.8l-7.8-0.1z"/>
<path class="g16" d="M461.9 503.7l1.5 2.3l2.1-11.7l-1.6-2.3z"/>
<path class="g9" d="M876.1 560.0l1.2-2.3l3-20.4l-1.1 2.3z"/>
<path class="g17" d="M882.2 535.1l3.2-1.3l2.5-20.6l-3.1 1.4z"/><path class="e" d="M885.4 533.8l2.5-20.6"/>
<path class="g17" d="M471.8 553.7l1.1 2.3l3.2-11.9l-1.3-2.3z"/>
<path class="g13" d="M916.2 512.0l2.1-3.1l2-21.3l-2 3.1z"/><path class="e" d="M916.2 512.0l2.1-21.3"/>
<path class="g15" d="M457.3 455.5l0.9 2.4l1.2-11.6l-1.1-2.4z"/>
<path class="g10" d="M880.3 537.3l1.9-2.2l2.6-20.5l-1.7 2.2z"/>
<path class="g15" d="M463.4 506.0l0.6 2.4l2.2-11.7l-0.7-2.4z"/>
<path class="g29" d="M908.2 512.9l8-0.9l2.1-21.3l-7.9 1.1z"/><path class="e" d="M916.2 512.0l2.1-21.3"/>
<path class="g28" d="M898.9 513.4l9.3-0.5l2.2-21.1l-9.2 0.7z"/>
<path class="g14" d="M458.2 457.9l0.2 2.4l1.2-11.6l-0.2-2.4z"/>
<path class="g20" d="M430.7 481.9l0.2 3.4l1.8-11l-0.4-3.4z"/><path class="e" d="M430.7 481.9l1.6-11"/>
<path class="g24" d="M887.9 513.2l3.2 0.1l2.3-20.7l-3.2 0z"/><path class="e" d="M887.9 513.2l2.3-20.6"/>
<path class="g26" d="M891.1 513.3l7.8 0.1l2.3-20.9l-7.8 0.1z"/>
<path class="g12" d="M918.3 490.7l2-3.1l1.7-21.4l-1.8 3.2z"/><path class="e" d="M918.3 490.7l1.9-21.3"/>
<path class="g23" d="M448.4 581.5l1.7 3.2l3.9-11.5l-1.8-3.1z"/><path class="e" d="M448.4 581.5l3.8-11.4"/>
<path class="g21" d="M437.7 532.0l0.9 3.4l2.9-11.2l-1.1-3.3z"/><path class="e" d="M437.7 532.0l2.7-11.1"/>
<path class="g9" d="M879.2 539.6l1.1-2.3l2.8-20.5l-1 2.4z"/>
<path class="g16" d="M884.8 514.6l3.1-1.4l2.3-20.6l-3 1.4z"/><path class="e" d="M887.9 513.2l2.3-20.6"/>
<path class="g29" d="M910.4 491.8l7.9-1.1l1.9-21.3l-7.9 1.3z"/><path class="e" d="M918.3 490.7l1.9-21.3"/>
<path class="g9" d="M883.1 516.8l1.7-2.2l2.4-20.6l-1.7 2.2z"/>
<path class="g12" d="M478.2 585.9l3.2-0.5l3.9-12.1l-3.1 0.5z"/><path class="e" d="M481.4 585.4l3.9-12.1"/>
<path class="g17" d="M481.4 585.4l3.4 1l4.1-12.1l-3.6-1z"/><path class="e" d="M481.4 585.4l3.9-12.1"/>
<path class="g21" d="M430.9 485.3l1.9 3.2l2.1-11.1l-2.2-3.1z"/><path class="e" d="M432.8 488.5l2.1-11.1"/>
<path class="g23" d="M450.1 584.7l3.1 2.8l4.1-11.5l-3.3-2.8z"/><path class="e" d="M453.2 587.5l4.1-11.5"/>
<path class="g13" d="M470.6 586.9l7.6-1l4-12.1l-7.5 1.2z"/>
<path class="g28" d="M901.2 492.5l9.2-0.7l1.9-21.1l-9.2 0.9z"/>
<path class="g22" d="M438.6 535.4l2.6 3l3.1-11.3l-2.8-2.9z"/><path class="e" d="M441.2 538.4l3.1-11.3"/>
<path class="g12" d="M920.2 469.4l1.8-3.2l1.3-21.3l-1.6 3.2z"/><path class="e" d="M920.2 469.4l1.5-21.3"/>
<path class="g26" d="M893.4 492.6l7.8-0.1l1.9-20.9l-7.7 0.2z"/>
<path class="g24" d="M890.2 492.6l3.2 0l2-20.8l-3.3 0.1z"/><path class="e" d="M890.2 492.6l1.9-20.7"/>
<path class="g15" d="M461.4 587.5l9.2-0.6l4.1-11.9l-9.2 0.8z"/>
<path class="g18" d="M484.8 586.4l2.5 2l4.1-12.2l-2.5-1.9z"/>
<path class="g17" d="M453.2 587.5l8.2 0l4.1-11.7l-8.2 0.2z"/><path class="e" d="M453.2 587.5l4.1-11.5"/>
<path class="g16" d="M887.2 494.0l3-1.4l1.9-20.7l-2.9 1.5z"/><path class="e" d="M890.2 492.6l1.9-20.7"/>
<path class="g9" d="M882.1 519.2l1-2.4l2.4-20.6l-0.8 2.4z"/>
<path class="g13" d="M466.3 538.6l3.2-0.2l3.1-11.9l-3.2 0.3z"/><path class="e" d="M469.5 538.4l3.1-11.9"/>
<path class="g18" d="M432.8 488.5l7.9 1.2l2.1-11.3l-7.9-1z"/><path class="e" d="M432.8 488.5l2.1-11.1"/>
<path class="g13" d="M458.6 539.1l7.7-0.5l3.1-11.8l-7.7 0.6z"/>
<path class="g18" d="M441.2 538.4l8.1 0.6l3.1-11.5l-8.1-0.4z"/><path class="e" d="M441.2 538.4l3.1-11.3"/>
<path class="g17" d="M469.5 538.4l3.3 1.2l3.1-11.9l-3.3-1.2z"/><path class="e" d="M469.5 538.4l3.1-11.9"/>
<path class="g16" d="M449.3 539.0l9.3 0.1l3.1-11.7l-9.3 0.1z"/>
<path class="g28" d="M912.3 470.7l7.9-1.3l1.5-21.3l-7.8 1.5z"/><path class="e" d="M920.2 469.4l1.5-21.3"/>
<path class="g16" d="M440.7 489.7l9.2 0.7l2.2-11.4l-9.3-0.6z"/>
<path class="g18" d="M487.3 588.4l1.8 2.2l4.2-12.3l-1.9-2.1z"/>
<path class="g14" d="M449.9 490.4l7.8 0.1l2.1-11.6l-7.7 0.1z"/>
<path class="g13" d="M457.7 490.5l3.2 0.1l2.2-11.7l-3.3 0z"/><path class="e" d="M460.9 490.6l2.2-11.7"/>
<path class="g9" d="M885.5 496.2l1.7-2.2l2-20.6l-1.5 2.3z"/>
<path class="g17" d="M472.8 539.6l2 2.2l3.3-12l-2.2-2.1z"/>
<path class="g27" d="M903.1 471.6l9.2-0.9l1.6-21.1l-9.1 1z"/>
<path class="g16" d="M460.9 490.6l3 1.4l2.2-11.7l-3-1.4z"/><path class="e" d="M460.9 490.6l2.2-11.7"/>
<path class="g26" d="M895.4 471.8l7.7-0.2l1.7-21l-7.7 0.4z"/>
<path class="g24" d="M892.1 471.9l3.3-0.1l1.7-20.8l-3.3 0.1z"/><path class="e" d="M892.1 471.9l1.7-20.8"/>
<path class="g16" d="M489.1 590.6l-0.2 2.3l4.4-12.3l0-2.3z"/><path class="e" d="M488.9 592.9l4.4-12.3"/>
<path class="g15" d="M889.2 473.4l2.9-1.5l1.7-20.8l-2.8 1.6z"/><path class="e" d="M892.1 471.9l1.7-20.8"/>
<path class="g8" d="M884.7 498.6l0.8-2.4l2.2-20.5l-0.6 2.4z"/>
<path class="g16" d="M463.9 492.0l1.6 2.3l2.3-11.8l-1.7-2.2z"/>
<path class="g17" d="M474.8 541.8l1.3 2.3l3.4-12l-1.4-2.3z"/>
<path class="g12" d="M889.5 598.3l2.2-3.1l4.3-20.7l-2 3.1z"/><path class="e" d="M891.7 595.2l4.3-20.7"/>
<path class="g25" d="M858.3 597.2l3 0.6l4.5-20.1l-3.1-0.6z"/><path class="e" d="M858.3 597.2l4.4-20.1"/>
<path class="g19" d="M854.6 597.9l3.7-0.7l4.4-20.1l-3.6 0.9z"/><path class="e" d="M858.3 597.2l4.4-20.1"/>
<path class="g9" d="M887.7 475.7l1.5-2.3l1.8-20.7l-1.3 2.3z"/>
<path class="g16" d="M465.5 494.3l0.7 2.4l2.5-11.8l-0.9-2.4z"/>
<path class="g27" d="M861.3 597.8l7.4 1.5l4.5-20.3l-7.4-1.3z"/>
<path class="g12" d="M851.8 599.7l2.8-1.8l4.5-19.9l-2.7 1.8z"/>
<path class="g15" d="M885.9 600.9l3.6-2.6l4.5-20.7l-3.5 2.7z"/><path class="e" d="M885.9 600.9l4.6-20.6"/>
<path class="g30" d="M868.7 599.3l9 1.1l4.7-20.4l-9.2-1z"/>
<path class="g8" d="M887.1 478.1l0.6-2.4l2-20.7l-0.6 2.4z"/>
<path class="g12" d="M894.0 577.6l2-3.1l4-20.8l-1.8 3.1z"/><path class="e" d="M896.0 574.5l4-20.8"/>
<path class="g31" d="M877.7 600.4l8.2 0.5l4.6-20.6l-8.1-0.3z"/><path class="e" d="M885.9 600.9l4.6-20.6"/>
<path class="g20" d="M432.3 470.9l0.4 3.4l2.2-11.1l-0.6-3.3z"/><path class="e" d="M432.3 470.9l2-11"/>
<path class="g23" d="M452.2 570.1l1.8 3.1l4.2-11.5l-2-3.1z"/><path class="e" d="M452.2 570.1l4-11.5"/>
<path class="g10" d="M849.7 601.8l2.1-2.1l4.6-19.9l-2 2.2z"/>
<path class="g22" d="M440.4 520.9l1.1 3.3l3.2-11.3l-1.3-3.3z"/><path class="e" d="M440.4 520.9l3-11.3"/>
<path class="g25" d="M862.7 577.1l3.1 0.6l4.2-20.2l-3.1-0.5z"/><path class="e" d="M862.7 577.1l4.2-20.1"/>
<path class="g19" d="M859.1 578.0l3.6-0.9l4.2-20.1l-3.6 0.9z"/><path class="e" d="M862.7 577.1l4.2-20.1"/>
<path class="g12" d="M482.2 573.8l3.1-0.5l4.2-12.2l-3.1 0.6z"/><path class="e" d="M485.3 573.3l4.2-12.2"/>
<path class="g17" d="M485.3 573.3l3.6 1l4.2-12.3l-3.6-0.9z"/><path class="e" d="M485.3 573.3l4.2-12.2"/>
<path class="g27" d="M865.8 577.7l7.4 1.3l4.3-20.4l-7.5-1.1z"/>
<path class="g12" d="M474.7 575.0l7.5-1.2l4.2-12.1l-7.4 1.3z"/>
<path class="g15" d="M890.5 580.3l3.5-2.7l4.2-20.8l-3.3 2.8z"/><path class="e" d="M890.5 580.3l4.4-20.7"/>
<path class="g24" d="M454.0 573.2l3.3 2.8l4.4-11.6l-3.5-2.7z"/><path class="e" d="M457.3 576.0l4.4-11.6"/>
<path class="g11" d="M856.4 579.8l2.7-1.8l4.2-20.1l-2.5 1.9z"/>
<path class="g18" d="M488.9 574.3l2.5 1.9l4.4-12.4l-2.7-1.8z"/>
<path class="g22" d="M432.7 474.3l2.2 3.1l2.3-11.1l-2.3-3.1z"/><path class="e" d="M434.9 477.4l2.3-11.1"/>
<path class="g29" d="M873.2 579.0l9.2 1l4.3-20.6l-9.2-0.8z"/>
<path class="g23" d="M441.5 524.2l2.8 2.9l3.4-11.3l-3-2.9z"/><path class="e" d="M444.3 527.1l3.4-11.3"/>
<path class="g15" d="M465.5 575.8l9.2-0.8l4.3-12l-9.1 1z"/>
<path class="g12" d="M898.2 556.8l1.8-3.1l3.7-21l-1.6 3.3z"/><path class="e" d="M900.0 553.7l3.7-21"/>
<path class="g31" d="M882.4 580.0l8.1 0.3l4.4-20.7l-8.2-0.2z"/><path class="e" d="M890.5 580.3l4.4-20.7"/>
<path class="g17" d="M457.3 576.0l8.2-0.2l4.4-11.8l-8.2 0.4z"/><path class="e" d="M457.3 576.0l4.4-11.6"/>
<path class="g12" d="M469.4 526.8l3.2-0.3l3.3-11.9l-3.1 0.3z"/><path class="e" d="M472.6 526.5l3.3-11.9"/>
<path class="g17" d="M472.6 526.5l3.3 1.2l3.4-12l-3.4-1.1z"/><path class="e" d="M472.6 526.5l3.3-11.9"/>
<path class="g13" d="M461.7 527.4l7.7-0.6l3.4-11.9l-7.7 0.8z"/>
<path class="g9" d="M854.4 582.0l2-2.2l4.4-20l-1.9 2.2z"/>
<path class="g17" d="M444.3 527.1l8.1 0.4l3.4-11.5l-8.1-0.2z"/><path class="e" d="M444.3 527.1l3.4-11.3"/>
<path class="g18" d="M491.4 576.2l1.9 2.1l4.5-12.3l-2-2.2z"/>
<path class="g15" d="M452.4 527.5l9.3-0.1l3.4-11.7l-9.3 0.3z"/>
<path class="g18" d="M434.9 477.4l7.9 1l2.4-11.3l-8-0.8z"/><path class="e" d="M434.9 477.4l2.3-11.1"/>
<path class="g25" d="M866.9 557.0l3.1 0.5l4-20.3l-3.2-0.5z"/><path class="e" d="M866.9 557.0l3.9-20.3"/>
<path class="g16" d="M442.8 478.4l9.3 0.6l2.4-11.5l-9.3-0.4z"/>
<path class="g13" d="M459.8 478.9l3.3 0l2.4-11.7l-3.3 0.1z"/><path class="e" d="M463.1 478.9l2.4-11.7"/>
<path class="g14" d="M452.1 479.0l7.7-0.1l2.4-11.6l-7.7 0.2z"/>
<path class="g18" d="M863.3 557.9l3.6-0.9l3.9-20.3l-3.5 1z"/><path class="e" d="M866.9 557.0l3.9-20.3"/>
<path class="g17" d="M475.9 527.7l2.2 2.1l3.5-12.1l-2.3-2z"/>
<path class="g14" d="M894.9 559.6l3.3-2.8l3.9-20.8l-3.2 2.8z"/><path class="e" d="M894.9 559.6l4-20.8"/>
<path class="g17" d="M463.1 478.9l3 1.4l2.5-11.8l-3.1-1.3z"/><path class="e" d="M463.1 478.9l2.4-11.7"/>
<path class="g27" d="M870.0 557.5l7.5 1.1l4-20.4l-7.5-1z"/>
<path class="g12" d="M902.1 536.0l1.6-3.3l3.5-21l-1.4 3.3z"/><path class="e" d="M903.7 532.7l3.5-21"/>
<path class="g16" d="M493.3 578.3l0 2.3l4.6-12.4l-0.1-2.2z"/><path class="e" d="M493.3 580.6l4.6-12.4"/>
<path class="g29" d="M877.5 558.6l9.2 0.8l4.1-20.6l-9.3-0.6z"/>
<path class="g11" d="M860.8 559.8l2.5-1.9l4-20.2l-2.4 2z"/>
<path class="g31" d="M886.7 559.4l8.2 0.2l4-20.8l-8.1 0z"/><path class="e" d="M894.9 559.6l4-20.8"/>
<path class="g17" d="M478.1 529.8l1.4 2.3l3.7-12.1l-1.6-2.3z"/>
<path class="g17" d="M466.1 480.3l1.7 2.2l2.6-11.8l-1.8-2.2z"/>
<path class="g9" d="M858.9 562.0l1.9-2.2l4.1-20.1l-1.8 2.2z"/>
<path class="g16" d="M506.0 606.6l3.7 0.5l5.3-12.7l-3.8-0.5z"/><path class="e" d="M506.0 606.6l5.2-12.7"/>
<path class="g10" d="M503.1 607.3l2.9-0.7l5.2-12.7l-2.9 0.9z"/><path class="e" d="M506.0 606.6l5.2-12.7"/>
<path class="g25" d="M870.8 536.7l3.2 0.5l3.7-20.4l-3.2-0.4z"/><path class="e" d="M870.8 536.7l3.7-20.3"/>
<path class="g13" d="M898.9 538.8l3.2-2.8l3.7-21l-3.1 2.9z"/><path class="e" d="M898.9 538.8l3.8-20.9"/>
<path class="g18" d="M867.3 537.7l3.5-1l3.7-20.3l-3.4 1.1z"/><path class="e" d="M870.8 536.7l3.7-20.3"/>
<path class="g15" d="M479.5 532.1l-0.5 2.2l3.8-12l0.4-2.3z"/><path class="e" d="M479.0 534.3l3.8-12"/>
<path class="g16" d="M467.8 482.5l0.9 2.4l2.8-11.8l-1.1-2.4z"/>
<path class="g27" d="M874.0 537.2l7.5 1l3.8-20.5l-7.6-0.9z"/>
<path class="g19" d="M509.7 607.1l3.1 1.7l5.4-12.8l-3.2-1.6z"/>
<path class="g11" d="M905.8 515.0l1.4-3.3l3.1-21l-1.2 3.3z"/><path class="e" d="M907.2 511.7l3.1-21"/>
<path class="g25" d="M472.4 606.4l2.6 3l5.5-12l-2.9-2.9z"/><path class="e" d="M472.4 606.4l5.2-11.9"/>
<path class="g11" d="M496.0 609.2l7.1-1.9l5.2-12.5l-6.9 2z"/>
<path class="g29" d="M881.5 538.2l9.3 0.6l3.8-20.7l-9.3-0.4z"/>
<path class="g31" d="M890.8 538.8l8.1 0l3.8-20.9l-8.1 0.2z"/><path class="e" d="M898.9 538.8l3.8-20.9"/>
<path class="g10" d="M864.9 539.7l2.4-2l3.8-20.2l-2.3 2z"/>
<path class="g19" d="M512.8 608.8l2.5 1.9l5.4-12.8l-2.5-1.9z"/>
<path class="g24" d="M456.2 558.6l2 3.1l4.5-11.6l-2.2-3.1z"/><path class="e" d="M456.2 558.6l4.3-11.6"/>
<path class="g13" d="M487.1 610.9l8.9-1.7l5.4-12.4l-8.8 1.8z"/>
<path class="g22" d="M443.4 509.6l1.3 3.3l3.5-11.4l-1.5-3.2z"/><path class="e" d="M443.4 509.6l3.3-11.3"/>
<path class="g25" d="M475.0 609.4l4.1 2.4l5.6-12.1l-4.2-2.3z"/><path class="e" d="M479.1 611.8l5.6-12.1"/>
<path class="g11" d="M486.4 561.7l3.1-0.6l4.5-12.3l-3.1 0.7z"/><path class="e" d="M489.5 561.1l4.5-12.3"/>
<path class="g13" d="M902.7 517.9l3.1-2.9l3.3-21l-2.8 2.9z"/><path class="e" d="M902.7 517.9l3.6-21"/>
<path class="g17" d="M489.5 561.1l3.6 0.9l4.5-12.4l-3.6-0.8z"/><path class="e" d="M489.5 561.1l4.5-12.3"/>
<path class="g9" d="M863.1 541.9l1.8-2.2l3.9-20.2l-1.7 2.3z"/>
<path class="g25" d="M874.5 516.4l3.2 0.4l3.4-20.4l-3.1-0.3z"/><path class="e" d="M874.5 516.4l3.5-20.3"/>
<path class="g15" d="M479.1 611.8l8-0.9l5.5-12.3l-7.9 1.1z"/><path class="e" d="M479.1 611.8l5.6-12.1"/>
<path class="g11" d="M909.1 494.0l1.2-3.3l2.8-21.1l-1 3.3z"/><path class="e" d="M910.3 490.7l2.8-21.1"/>
<path class="g18" d="M515.3 610.7l0.6 2.3l5.6-12.9l-0.8-2.2z"/><path class="e" d="M515.9 613.0l5.6-12.9"/>
<path class="g18" d="M871.1 517.5l3.4-1.1l3.5-20.3l-3.4 1.1z"/><path class="e" d="M874.5 516.4l3.5-20.3"/>
<path class="g12" d="M479.0 563.0l7.4-1.3l4.5-12.2l-7.3 1.5z"/>
<path class="g27" d="M877.7 516.8l7.6 0.9l3.5-20.6l-7.7-0.7z"/>
<path class="g18" d="M493.1 562.0l2.7 1.8l4.6-12.4l-2.8-1.8z"/>
<path class="g29" d="M885.3 517.7l9.3 0.4l3.5-20.8l-9.3-0.2z"/>
<path class="g30" d="M894.6 518.1l8.1-0.2l3.6-21l-8.2 0.4z"/><path class="e" d="M902.7 517.9l3.6-21"/>
<path class="g24" d="M458.2 561.7l3.5 2.7l4.7-11.8l-3.7-2.5z"/><path class="e" d="M461.7 564.4l4.7-11.8"/>
<path class="g14" d="M469.9 564.0l9.1-1l4.6-12l-9.1 1.1z"/>
<path class="g21" d="M826.2 617.0l3.8-0.4l5.6-19.4l-3.8 0.4z"/><path class="e" d="M830.0 616.6l5.6-19.4"/>
<path class="g10" d="M868.8 519.5l2.3-2l3.5-20.3l-2.2 2.1z"/>
<path class="g25" d="M830.0 616.6l2.8 1l5.6-19.5l-2.8-0.9z"/><path class="e" d="M830.0 616.6l5.6-19.4"/>
<path class="g23" d="M444.7 512.9l3 2.9l3.6-11.4l-3.1-2.9z"/><path class="e" d="M447.7 515.8l3.6-11.4"/>
<path class="g12" d="M472.8 514.9l3.1-0.3l3.6-12l-3.1 0.4z"/><path class="e" d="M475.9 514.6l3.6-12"/>
<path class="g16" d="M461.7 564.4l8.2-0.4l4.6-11.9l-8.1 0.5z"/><path class="e" d="M461.7 564.4l4.7-11.8"/>
<path class="g17" d="M475.9 514.6l3.4 1.1l3.7-12.1l-3.5-1z"/><path class="e" d="M475.9 514.6l3.6-12"/>
<path class="g14" d="M822.8 618.4l3.4-1.4l5.6-19.4l-3.3 1.5z"/>
<path class="g18" d="M495.8 563.8l2 2.2l4.8-12.5l-2.2-2.1z"/>
<path class="g13" d="M465.1 515.7l7.7-0.8l3.6-11.9l-7.6 1z"/>
<path class="g13" d="M906.3 496.9l2.8-2.9l3-21.1l-2.6 3z"/><path class="e" d="M906.3 496.9l3.2-21"/>
<path class="g15" d="M455.8 516.0l9.3-0.3l3.7-11.7l-9.3 0.5z"/>
<path class="g27" d="M832.8 617.6l6.7 2.3l5.8-19.7l-6.9-2.1z"/>
<path class="g17" d="M447.7 515.8l8.1 0.2l3.7-11.5l-8.2-0.1z"/><path class="e" d="M447.7 515.8l3.6-11.4"/>
<path class="g9" d="M867.1 521.8l1.7-2.3l3.6-20.2l-1.5 2.3z"/>
<path class="g25" d="M878.0 496.1l3.1 0.3l3.2-20.5l-3.2-0.3z"/><path class="e" d="M878.0 496.1l3.1-20.5"/>
<path class="g18" d="M479.3 515.7l2.3 2l3.8-12.1l-2.4-2z"/>
<path class="g10" d="M820.0 620.2l2.8-1.8l5.7-19.3l-2.6 1.9z"/>
<path class="g27" d="M881.1 496.4l7.7 0.7l3.3-20.7l-7.8-0.5z"/>
<path class="g13" d="M860.2 621.4l3.2-2.8l5.8-20.2l-3.1 2.9z"/><path class="e" d="M863.4 618.6l5.8-20.2"/>
<path class="g17" d="M874.6 497.2l3.4-1.1l3.1-20.5l-3.2 1.2z"/><path class="e" d="M878.0 496.1l3.1-20.5"/>
<path class="g30" d="M898.1 497.3l8.2-0.4l3.2-21l-8.1 0.5z"/><path class="e" d="M906.3 496.9l3.2-21"/>
<path class="g29" d="M888.8 497.1l9.3 0.2l3.3-20.9l-9.3 0z"/>
<path class="g17" d="M497.8 566.0l0.1 2.2l4.9-12.4l-0.2-2.3z"/><path class="e" d="M497.9 568.2l4.9-12.4"/>
<path class="g30" d="M839.5 619.9l8.5 2.2l5.9-19.9l-8.6-2z"/>
<path class="g10" d="M872.4 499.3l2.2-2.1l3.3-20.4l-2.1 2.1z"/>
<path class="g17" d="M481.6 517.7l1.6 2.3l3.9-12.1l-1.7-2.3z"/>
<path class="g8" d="M819.0 622.4l1-2.2l5.9-19.2l-0.9 2.2z"/><path class="e" d="M819.0 622.4l6-19.2"/>
<path class="g20" d="M831.8 597.6l3.8-0.4l5.4-19.6l-3.7 0.5z"/><path class="e" d="M835.6 597.2l5.4-19.6"/>
<path class="g18" d="M855.8 623.5l4.4-2.1l5.9-20.1l-4.3 2.2z"/><path class="e" d="M855.8 623.5l6-20"/>
<path class="g16" d="M511.2 593.9l3.8 0.5l5.5-12.8l-3.8-0.5z"/><path class="e" d="M511.2 593.9l5.5-12.8"/>
<path class="g25" d="M835.6 597.2l2.8 0.9l5.5-19.7l-2.9-0.8z"/><path class="e" d="M835.6 597.2l5.4-19.6"/>
<path class="g10" d="M508.3 594.8l2.9-0.9l5.5-12.8l-2.9 1z"/><path class="e" d="M511.2 593.9l5.5-12.8"/>
<path class="g32" d="M848.0 622.1l7.8 1.4l6-20l-7.9-1.3z"/><path class="e" d="M855.8 623.5l6-20"/>
<path class="g13" d="M828.5 599.1l3.3-1.5l5.5-19.5l-3.2 1.6z"/>
<path class="g19" d="M515.0 594.4l3.2 1.6l5.5-12.9l-3.2-1.5z"/>
<path class="g9" d="M870.9 501.6l1.5-2.3l3.4-20.4l-1.4 2.4z"/>
<path class="g16" d="M483.2 520.0l-0.4 2.3l4-12.2l0.3-2.2z"/><path class="e" d="M482.8 522.3l4-12.2"/>
<path class="g27" d="M838.4 598.1l6.9 2.1l5.6-19.8l-7-2z"/>
<path class="g11" d="M501.4 596.8l6.9-2l5.5-12.7l-6.8 2.1z"/>
<path class="g13" d="M866.1 601.3l3.1-2.9l5.4-20.3l-2.8 2.9z"/><path class="e" d="M869.2 598.4l5.4-20.3"/>
<path class="g25" d="M477.6 594.5l2.9 2.9l5.6-12.1l-3-2.9z"/><path class="e" d="M477.6 594.5l5.5-12.1"/>
<path class="g10" d="M825.9 601.0l2.6-1.9l5.6-19.4l-2.6 1.9z"/>
<path class="g19" d="M518.2 596.0l2.5 1.9l5.7-13l-2.7-1.8z"/>
<path class="g30" d="M845.3 600.2l8.6 2l5.8-19.9l-8.8-1.9z"/>
<path class="g13" d="M492.6 598.6l8.8-1.8l5.6-12.6l-8.7 2z"/>
<path class="g24" d="M460.5 547.0l2.2 3.1l4.8-11.8l-2.4-3z"/><path class="e" d="M460.5 547.0l4.6-11.7"/>
<path class="g18" d="M861.8 603.5l4.3-2.2l5.7-20.3l-4.2 2.3z"/><path class="e" d="M861.8 603.5l5.8-20.2"/>
<path class="g11" d="M490.9 549.5l3.1-0.7l4.6-12.3l-3 0.6z"/><path class="e" d="M494.0 548.8l4.6-12.3"/>
<path class="g8" d="M825.0 603.2l0.9-2.2l5.6-19.4l-0.7 2.2z"/><path class="e" d="M825.0 603.2l5.8-19.4"/>
<path class="g17" d="M494.0 548.8l3.6 0.8l4.7-12.5l-3.7-0.6z"/><path class="e" d="M494.0 548.8l4.6-12.3"/>
<path class="g25" d="M480.5 597.4l4.2 2.3l5.8-12.2l-4.4-2.2z"/><path class="e" d="M484.7 599.7l5.8-12.2"/>
<path class="g18" d="M520.7 597.9l0.8 2.2l5.8-12.9l-0.9-2.3z"/><path class="e" d="M521.5 600.1l5.8-12.9"/>
<path class="g20" d="M837.3 578.1l3.7-0.5l5.3-19.7l-3.8 0.6z"/><path class="e" d="M841.0 577.6l5.3-19.7"/>
<path class="g32" d="M853.9 602.2l7.9 1.3l5.8-20.2l-7.9-1z"/><path class="e" d="M861.8 603.5l5.8-20.2"/>
<path class="g25" d="M841.0 577.6l2.9 0.8l5.3-19.7l-2.9-0.8z"/><path class="e" d="M841.0 577.6l5.3-19.7"/>
<path class="g23" d="M446.7 498.3l1.5 3.2l3.8-11.4l-1.7-3.2z"/><path class="e" d="M446.7 498.3l3.6-11.4"/>
<path class="g15" d="M484.7 599.7l7.9-1.1l5.7-12.4l-7.8 1.3z"/><path class="e" d="M484.7 599.7l5.8-12.2"/>
<path class="g16" d="M537.2 624.4l3.8 0.2l6.3-13.4l-3.8-0.1z"/><path class="e" d="M537.2 624.4l6.3-13.3"/>
<path class="g12" d="M483.6 551.0l7.3-1.5l4.7-12.4l-7.2 1.7z"/>
<path class="g10" d="M534.5 625.5l2.7-1.1l6.3-13.3l-2.6 1.2z"/><path class="e" d="M537.2 624.4l6.3-13.3"/>
<path class="g18" d="M497.6 549.6l2.8 1.8l4.8-12.5l-2.9-1.8z"/>
<path class="g13" d="M834.1 579.7l3.2-1.6l5.2-19.6l-3.1 1.6z"/>
<path class="g19" d="M541.0 624.6l3.6 1.2l6.4-13.4l-3.7-1.2z"/>
<path class="g13" d="M871.8 581.0l2.8-2.9l5.3-20.4l-2.7 3z"/><path class="e" d="M874.6 578.1l5.3-20.4"/>
<path class="g27" d="M843.9 578.4l7 2l5.4-19.9l-7.1-1.8z"/>
<path class="g24" d="M462.7 550.1l3.7 2.5l4.9-11.8l-3.8-2.5z"/><path class="e" d="M466.4 552.6l4.9-11.8"/>
<path class="g14" d="M474.5 552.1l9.1-1.1l4.8-12.2l-9 1.4z"/>
<path class="g20" d="M544.6 625.8l3.1 1.7l6.4-13.6l-3.1-1.5z"/>
<path class="g10" d="M831.5 581.6l2.6-1.9l5.3-19.6l-2.4 2z"/>
<path class="g19" d="M500.4 551.4l2.2 2.1l4.9-12.6l-2.3-2z"/>
<path class="g11" d="M528.2 628.2l6.3-2.7l6.4-13.2l-6.2 2.8z"/>
<path class="g12" d="M476.4 503.0l3.1-0.4l3.9-12.1l-3.2 0.5z"/><path class="e" d="M479.5 502.6l3.9-12.1"/>
<path class="g16" d="M466.4 552.6l8.1-0.5l4.9-11.9l-8.1 0.6z"/><path class="e" d="M466.4 552.6l4.9-11.8"/>
<path class="g17" d="M479.5 502.6l3.5 1l3.9-12.1l-3.5-1z"/><path class="e" d="M479.5 502.6l3.9-12.1"/>
<path class="g23" d="M448.2 501.5l3.1 2.9l4-11.5l-3.3-2.8z"/><path class="e" d="M451.3 504.4l4-11.5"/>
<path class="g30" d="M850.9 580.4l8.8 1.9l5.5-20.1l-8.9-1.7z"/>
<path class="g13" d="M468.8 504.0l7.6-1l3.8-12l-7.5 1.1z"/>
<path class="g17" d="M867.6 583.3l4.2-2.3l5.4-20.3l-4 2.4z"/><path class="e" d="M867.6 583.3l5.6-20.2"/>
<path class="g20" d="M547.7 627.5l1.3 2.1l6.6-13.5l-1.5-2.2z"/><path class="e" d="M549.0 629.6l6.6-13.5"/>
<path class="g15" d="M459.5 504.5l9.3-0.5l3.9-11.9l-9.2 0.7z"/>
<path class="g18" d="M483.0 503.6l2.4 2l4-12.2l-2.5-1.9z"/>
<path class="g32" d="M859.7 582.3l7.9 1l5.6-20.2l-8-0.9z"/><path class="e" d="M867.6 583.3l5.6-20.2"/>
<path class="g17" d="M451.3 504.4l8.2 0.1l4-11.7l-8.2 0.1z"/><path class="e" d="M451.3 504.4l4-11.5"/>
<path class="g20" d="M842.5 558.5l3.8-0.6l4.9-19.8l-3.7 0.6z"/><path class="e" d="M846.3 557.9l4.9-19.8"/>
<path class="g17" d="M502.6 553.5l0.2 2.3l5.1-12.6l-0.4-2.3z"/><path class="e" d="M502.8 555.8l5.1-12.6"/>
<path class="g25" d="M846.3 557.9l2.9 0.8l5-19.9l-3-0.7z"/><path class="e" d="M846.3 557.9l4.9-19.8"/>
<path class="g12" d="M520.1 630.8l8.1-2.6l6.5-13.1l-7.9 2.8z"/>
<path class="g22" d="M791.9 632.4l3.9 0.1l6.6-18.8l-3.9 0z"/><path class="e" d="M795.8 632.5l6.6-18.8"/>
<path class="g13" d="M877.2 560.7l2.7-3l4.9-20.5l-2.4 3.1z"/><path class="e" d="M879.9 557.7l4.9-20.5"/>
<path class="g26" d="M504.2 628.2l3.6 2.6l6.7-12.7l-3.8-2.6z"/><path class="e" d="M504.2 628.2l6.5-12.7"/>
<path class="g13" d="M839.4 560.1l3.1-1.6l5-19.8l-2.9 1.8z"/>
<path class="g16" d="M788.1 633.4l3.8-1l6.6-18.7l-3.7 1.1z"/>
<path class="g25" d="M795.8 632.5l2.4 1.2l6.7-18.8l-2.5-1.2z"/><path class="e" d="M795.8 632.5l6.6-18.8"/>
<path class="g27" d="M849.2 558.7l7.1 1.8l5.1-20l-7.2-1.7z"/>
<path class="g18" d="M485.4 505.6l1.7 2.3l4.1-12.3l-1.8-2.2z"/>
<path class="g16" d="M516.7 581.1l3.8 0.5l5.6-13l-3.8-0.3z"/><path class="e" d="M516.7 581.1l5.6-12.8"/>
<path class="g10" d="M513.8 582.1l2.9-1l5.6-12.8l-2.8 0.9z"/><path class="e" d="M516.7 581.1l5.6-12.8"/>
<path class="g12" d="M784.8 634.8l3.3-1.4l6.7-18.6l-3.2 1.5z"/>
<path class="g19" d="M520.5 581.6l3.2 1.5l5.8-13l-3.4-1.5z"/>
<path class="g13" d="M512.5 632.6l7.6-1.8l6.7-12.9l-7.5 1.9z"/><path class="e" d="M512.5 632.6l6.8-12.8"/>
<path class="g25" d="M507.8 630.8l4.7 1.8l6.8-12.8l-4.8-1.7z"/><path class="e" d="M512.5 632.6l6.8-12.8"/>
<path class="g10" d="M837.0 562.1l2.4-2l5.2-19.6l-2.4 2z"/>
<path class="g30" d="M856.3 560.5l8.9 1.7l5.2-20.2l-9-1.5z"/>
<path class="g17" d="M873.2 563.1l4-2.4l5.2-20.4l-3.9 2.4z"/><path class="e" d="M873.2 563.1l5.3-20.4"/>
<path class="g27" d="M798.2 633.7l5.8 3.1l6.9-19l-6-2.9z"/>
<path class="g11" d="M507.0 584.2l6.8-2.1l5.7-12.9l-6.7 2.4z"/>
<path class="g16" d="M487.1 507.9l-0.3 2.2l4.3-12.2l0.1-2.3z"/><path class="e" d="M486.8 510.1l4.3-12.2"/>
<path class="g32" d="M865.2 562.2l8 0.9l5.3-20.4l-8.1-0.7z"/><path class="e" d="M873.2 563.1l5.3-20.4"/>
<path class="g9" d="M783.1 636.9l1.7-2.1l6.8-18.5l-1.6 2.1z"/><path class="e" d="M783.1 636.9l6.9-18.5"/>
<path class="g19" d="M523.7 583.1l2.7 1.8l5.9-13l-2.8-1.8z"/>
<path class="g26" d="M483.1 582.4l3 2.9l5.9-12.2l-3.1-2.8z"/><path class="e" d="M483.1 582.4l5.8-12.1"/>
<path class="g12" d="M882.4 540.3l2.4-3.1l4.7-20.6l-2.3 3.1z"/><path class="e" d="M884.8 537.2l4.7-20.6"/>
<path class="g25" d="M851.2 538.1l3 0.7l4.8-20l-3-0.6z"/><path class="e" d="M851.2 538.1l4.8-19.9"/>
<path class="g20" d="M847.5 538.7l3.7-0.6l4.8-19.9l-3.6 0.7z"/><path class="e" d="M851.2 538.1l4.8-19.9"/>
<path class="g12" d="M498.3 586.2l8.7-2l5.8-12.6l-8.5 2.1z"/>
<path class="g27" d="M854.2 538.8l7.2 1.7l5-20.1l-7.4-1.6z"/>
<path class="g12" d="M844.6 540.5l2.9-1.8l4.9-19.8l-2.9 1.8z"/>
<path class="g30" d="M804.0 636.8l7.6 3.1l7.1-19.1l-7.8-3z"/>
<path class="g19" d="M526.4 584.9l0.9 2.3l6-13.1l-1-2.2z"/><path class="e" d="M527.3 587.2l6-13.1"/>
<path class="g22" d="M798.5 613.7l3.9 0l6.5-18.9l-3.9 0.1z"/><path class="e" d="M802.4 613.7l6.5-18.9"/>
<path class="g15" d="M543.5 611.1l3.8 0.1l6.5-13.6l-3.9 0.1z"/><path class="e" d="M543.5 611.1l6.4-13.4"/>
<path class="g17" d="M498.6 536.5l3.7 0.6l5-12.5l-3.8-0.6z"/><path class="e" d="M498.6 536.5l4.9-12.5"/>
<path class="g11" d="M495.6 537.1l3-0.6l4.9-12.5l-2.9 0.7z"/><path class="e" d="M498.6 536.5l4.9-12.5"/>
<path class="g15" d="M794.8 614.8l3.7-1.1l6.5-18.8l-3.6 1.2z"/>
<path class="g25" d="M802.4 613.7l2.5 1.2l6.5-18.9l-2.5-1.2z"/><path class="e" d="M802.4 613.7l6.5-18.9"/>
<path class="g25" d="M486.1 585.3l4.4 2.2l6-12.3l-4.5-2.1z"/><path class="e" d="M490.5 587.5l6-12.3"/>
<path class="g19" d="M547.3 611.2l3.7 1.2l6.5-13.6l-3.7-1.2z"/>
<path class="g10" d="M540.9 612.3l2.6-1.2l6.4-13.4l-2.5 1.2z"/><path class="e" d="M543.5 611.1l6.4-13.4"/>
<path class="g24" d="M465.1 535.3l2.4 3l5-11.8l-2.6-3z"/><path class="e" d="M465.1 535.3l4.8-11.8"/>
<path class="g14" d="M823.9 640.6l4-2.4l7-19.4l-3.9 2.4z"/><path class="e" d="M827.9 638.2l7-19.4"/>
<path class="g30" d="M861.4 540.5l9 1.5l5-20.3l-9-1.3z"/>
<path class="g16" d="M878.5 542.7l3.9-2.4l4.8-20.6l-3.7 2.5z"/><path class="e" d="M878.5 542.7l5-20.5"/>
<path class="g15" d="M490.5 587.5l7.8-1.3l6-12.5l-7.8 1.5z"/><path class="e" d="M490.5 587.5l6-12.3"/>
<path class="g10" d="M842.2 542.5l2.4-2l4.9-19.8l-2.2 2.1z"/>
<path class="g19" d="M502.3 537.1l2.9 1.8l5.1-12.6l-3-1.7z"/>
<path class="g11" d="M488.4 538.8l7.2-1.7l5-12.4l-7.2 1.8z"/>
<path class="g12" d="M791.6 616.3l3.2-1.5l6.6-18.7l-3.2 1.5z"/>
<path class="g31" d="M870.4 542.0l8.1 0.7l5-20.5l-8.1-0.5z"/><path class="e" d="M878.5 542.7l5-20.5"/>
<path class="g20" d="M551.0 612.4l3.1 1.5l6.7-13.6l-3.3-1.5z"/>
<path class="g15" d="M573.7 638.4l3.8-0.3l7.1-14.2l-3.8 0.4z"/><path class="e" d="M573.7 638.4l7.1-14.1"/>
<path class="g12" d="M887.2 519.7l2.3-3.1l4.4-20.7l-2 3.1z"/><path class="e" d="M889.5 516.6l4.4-20.7"/>
<path class="g19" d="M577.5 638.1l3.9 0.8l7.2-14.2l-4-0.8z"/>
<path class="g32" d="M811.6 639.9l7.2 2.3l7.2-19.3l-7.3-2.1z"/><path class="e" d="M818.8 642.2l7.2-19.3"/>
<path class="g27" d="M804.9 614.9l6 2.9l6.7-19l-6.2-2.8z"/>
<path class="g20" d="M545.4 635.7l-2 5.4l7.3-13.5l1.6-5.4z"/>
<path class="g11" d="M534.7 615.1l6.2-2.8l6.5-13.4l-5.9 2.9z"/>
<path class="g21" d="M818.8 642.2l5.1-1.6l7.1-19.4l-5 1.7z"/><path class="e" d="M818.8 642.2l7.2-19.3"/>
<path class="g25" d="M856.0 518.2l3 0.6l4.6-20l-3-0.6z"/><path class="e" d="M856.0 518.2l4.6-20"/>
<path class="g19" d="M852.4 518.9l3.6-0.7l4.6-20l-3.7 0.8z"/><path class="e" d="M856.0 518.2l4.6-20"/>
<path class="g10" d="M571.5 639.8l2.2-1.4l7.1-14.1l-2.1 1.4z"/><path class="e" d="M573.7 638.4l7.1-14.1"/>
<path class="g14" d="M479.4 540.2l9-1.4l5-12.3l-8.9 1.6z"/>
<path class="g19" d="M505.2 538.9l2.3 2l5.2-12.7l-2.4-1.9z"/>
<path class="g20" d="M581.4 638.9l3.6 1.3l7.2-14.4l-3.6-1.1z"/>
<path class="g24" d="M467.5 538.3l3.8 2.5l5.2-11.9l-4-2.4z"/><path class="e" d="M471.3 540.8l5.2-11.9"/>
<path class="g9" d="M790.0 618.4l1.6-2.1l6.6-18.7l-1.4 2.2z"/><path class="e" d="M790.0 618.4l6.8-18.6"/>
<path class="g20" d="M554.1 613.9l1.5 2.2l6.7-13.8l-1.5-2z"/><path class="e" d="M555.6 616.1l6.7-13.8"/>
<path class="g27" d="M859.0 518.8l7.4 1.6l4.6-20.2l-7.4-1.4z"/>
<path class="g16" d="M471.3 540.8l8.1-0.6l5.1-12.1l-8 0.8z"/><path class="e" d="M471.3 540.8l5.2-11.9"/>
<path class="g12" d="M849.5 520.7l2.9-1.8l4.5-19.9l-2.7 1.8z"/>
<path class="g21" d="M585.0 640.2l2 1.9l7.3-14.3l-2.1-2z"/><path class="e" d="M587.0 642.1l7.3-14.3"/>
<path class="g15" d="M883.5 522.2l3.7-2.5l4.7-20.7l-3.6 2.7z"/><path class="e" d="M883.5 522.2l4.8-20.5"/>
<path class="g30" d="M866.4 520.4l9 1.3l4.7-20.4l-9.1-1.1z"/>
<path class="g30" d="M810.9 617.8l7.8 3l6.9-19.3l-8-2.7z"/>
<path class="g10" d="M566.1 643.1l5.4-3.3l7.2-14.1l-5.1 3.5z"/>
<path class="g18" d="M507.5 540.9l0.4 2.3l5.3-12.7l-0.5-2.3z"/><path class="e" d="M507.9 543.2l5.3-12.7"/>
<path class="g12" d="M526.8 617.9l7.9-2.8l6.8-13.3l-7.9 3z"/>
<path class="g21" d="M805.0 594.9l3.9-0.1l6.2-19l-3.8 0.1z"/><path class="e" d="M808.9 594.8l6.2-19"/>
<path class="g23" d="M753.2 643.5l3.8 0.6l7.3-18l-3.8-0.4z"/><path class="e" d="M757.0 644.1l7.3-18"/>
<path class="g17" d="M749.2 644.1l4-0.6l7.3-17.8l-4 0.6z"/>
<path class="g14" d="M831.0 621.2l3.9-2.4l6.7-19.6l-3.7 2.5z"/><path class="e" d="M834.9 618.8l6.7-19.6"/>
<path class="g27" d="M510.7 615.5l3.8 2.6l6.9-12.9l-3.9-2.4z"/><path class="e" d="M510.7 615.5l6.8-12.7"/>
<path class="g31" d="M875.4 521.7l8.1 0.5l4.8-20.5l-8.2-0.4z"/><path class="e" d="M883.5 522.2l4.8-20.5"/>
<path class="g25" d="M808.9 594.8l2.5 1.2l6.4-19.1l-2.7-1.1z"/><path class="e" d="M808.9 594.8l6.2-19"/>
<path class="g10" d="M847.3 522.8l2.2-2.1l4.7-19.9l-2.1 2.1z"/>
<path class="g15" d="M801.4 596.1l3.6-1.2l6.3-19l-3.6 1.3z"/>
<path class="g14" d="M745.4 645.2l3.8-1.1l7.3-17.8l-3.7 1.2z"/>
<path class="g24" d="M757.0 644.1l1.9 1.5l7.5-18l-2.1-1.5z"/><path class="e" d="M757.0 644.1l7.3-18"/>
<path class="g17" d="M587.0 642.1l-0.5 1.9l7.5-14.4l0.3-1.8z"/><path class="e" d="M587.0 642.1l7.3-14.3"/>
<path class="g16" d="M522.3 568.3l3.8 0.3l5.9-13.1l-3.9-0.2z"/><path class="e" d="M522.3 568.3l5.8-13"/>
<path class="g10" d="M519.5 569.2l2.8-0.9l5.8-13l-2.7 1z"/><path class="e" d="M522.3 568.3l5.8-13"/>
<path class="g23" d="M543.4 641.1l-0.9 4.7l7.6-13.4l0.6-4.8z"/><path class="e" d="M542.5 645.8l7.6-13.4"/>
<path class="g12" d="M798.2 597.6l3.2-1.5l6.3-18.9l-3 1.6z"/>
<path class="g19" d="M526.1 568.6l3.4 1.5l5.9-13.2l-3.4-1.4z"/>
<path class="g32" d="M818.7 620.8l7.3 2.1l7-19.4l-7.4-2z"/><path class="e" d="M826.0 622.9l7-19.4"/>
<path class="g13" d="M519.3 619.8l7.5-1.9l6.8-13.1l-7.3 2.1z"/><path class="e" d="M519.3 619.8l7-12.9"/>
<path class="g20" d="M826.0 622.9l5-1.7l6.9-19.5l-4.9 1.8z"/><path class="e" d="M826.0 622.9l7-19.4"/>
<path class="g27" d="M811.4 596.0l6.2 2.8l6.5-19.3l-6.3-2.6z"/>
<path class="g25" d="M514.5 618.1l4.8 1.7l7-12.9l-4.9-1.7z"/><path class="e" d="M519.3 619.8l7-12.9"/>
<path class="g10" d="M743.1 647.0l2.3-1.8l7.4-17.7l-2.2 1.8z"/><path class="e" d="M743.1 647.0l7.5-17.7"/>
<path class="g12" d="M559.0 646.6l7.1-3.5l7.5-13.9l-6.9 3.6z"/>
<path class="g11" d="M512.8 571.6l6.7-2.4l5.9-12.9l-6.5 2.5z"/>
<path class="g26" d="M758.9 645.6l4.7 3.6l7.7-18.1l-4.9-3.5z"/>
<path class="g20" d="M529.5 570.1l2.8 1.8l6-13.3l-2.9-1.7z"/>
<path class="g9" d="M796.8 599.8l1.4-2.2l6.5-18.8l-1.4 2.2z"/><path class="e" d="M796.8 599.8l6.5-18.8"/>
<path class="g19" d="M586.5 644.0l-1 4.5l7.7-14.3l0.8-4.6z"/>
<path class="g26" d="M488.9 570.3l3.1 2.8l6.2-12.4l-3.4-2.7z"/><path class="e" d="M488.9 570.3l5.9-12.3"/>
<path class="g19" d="M617.8 647.2l4.1 0.3l7.6-15.1l-4.1-0.3z"/>
<path class="g30" d="M817.6 598.8l8 2.7l6.7-19.3l-8.2-2.7z"/>
<path class="g13" d="M837.9 601.7l3.7-2.5l6.5-19.7l-3.5 2.6z"/><path class="e" d="M841.6 599.2l6.5-19.7"/>
<path class="g13" d="M614.1 647.9l3.7-0.7l7.6-15.1l-3.6 0.8z"/><path class="e" d="M614.1 647.9l7.7-15"/>
<path class="g27" d="M542.5 645.8l4.4 2.2l7.8-13.5l-4.6-2.1z"/><path class="e" d="M542.5 645.8l7.6-13.4"/>
<path class="g15" d="M549.9 597.7l3.9-0.1l6.6-13.6l-3.9 0.1z"/><path class="e" d="M549.9 597.7l6.6-13.6"/>
<path class="g20" d="M621.9 647.5l3.9 0.9l7.7-15.2l-4-0.8z"/>
<path class="g12" d="M504.3 573.7l8.5-2.1l6.1-12.8l-8.4 2.3z"/>
<path class="g21" d="M811.3 575.9l3.8-0.1l6.1-19.2l-3.8 0.3z"/><path class="e" d="M815.1 575.8l6.1-19.2"/>
<path class="g19" d="M532.3 571.9l1 2.2l6.2-13.3l-1.2-2.2z"/><path class="e" d="M533.3 574.1l6.2-13.3"/>
<path class="g19" d="M553.8 597.6l3.7 1.2l6.7-13.8l-3.8-1z"/>
<path class="g25" d="M815.1 575.8l2.7 1.1l6.1-19.2l-2.7-1.1z"/><path class="e" d="M815.1 575.8l6.1-19.2"/>
<path class="g10" d="M547.4 598.9l2.5-1.2l6.6-13.6l-2.4 1.3z"/><path class="e" d="M549.9 597.7l6.6-13.6"/>
<path class="g13" d="M552.2 649.3l6.8-2.7l7.7-13.8l-6.7 2.8z"/><path class="e" d="M552.2 649.3l7.8-13.7"/>
<path class="g15" d="M807.7 577.2l3.6-1.3l6.1-19l-3.5 1.3z"/>
<path class="g9" d="M612.4 649.5l1.7-1.6l7.7-15l-1.6 1.7z"/><path class="e" d="M614.1 647.9l7.7-15"/>
<path class="g16" d="M503.5 524.0l3.8 0.6l5.1-12.7l-3.8-0.5z"/><path class="e" d="M503.5 524.0l5.1-12.6"/>
<path class="g10" d="M500.6 524.7l2.9-0.7l5.1-12.6l-2.9 0.8z"/><path class="e" d="M503.5 524.0l5.1-12.6"/>
<path class="g23" d="M760.5 625.7l3.8 0.4l7.3-18.1l-3.9-0.4z"/><path class="e" d="M764.3 626.1l7.3-18.1"/>
<path class="g22" d="M625.8 648.4l2.6 1.6l7.8-15.2l-2.7-1.6z"/><path class="e" d="M628.4 650.0l7.8-15.2"/>
<path class="g19" d="M707.4 650.2l4.2-0.1l7.7-17l-4.1 0.2z"/>
<path class="g14" d="M580.8 624.3l3.8-0.4l7.2-14.3l-3.8 0.5z"/><path class="e" d="M580.8 624.3l7.2-14.2"/>
<path class="g17" d="M756.5 626.3l4-0.6l7.2-18.1l-3.9 0.8z"/>
<path class="g19" d="M584.6 623.9l4 0.8l7.2-14.4l-4-0.7z"/>
<path class="g25" d="M546.9 648.0l5.3 1.3l7.8-13.7l-5.3-1.1z"/><path class="e" d="M552.2 649.3l7.8-13.7"/>
<path class="g25" d="M492.0 573.1l4.5 2.1l6.3-12.5l-4.6-2z"/><path class="e" d="M496.5 575.2l6.3-12.5"/>
<path class="g20" d="M557.5 598.8l3.3 1.5l6.7-13.8l-3.3-1.5z"/>
<path class="g23" d="M711.6 650.1l3.5 0.9l7.8-17l-3.6-0.9z"/><path class="e" d="M715.1 651.0l7.8-17"/>
<path class="g16" d="M703.4 650.8l4-0.6l7.8-16.9l-4 0.6z"/>
<path class="g29" d="M763.6 649.2l6.5 4l7.9-18.3l-6.7-3.8z"/>
<path class="g32" d="M825.6 601.5l7.4 2l6.8-19.5l-7.5-1.8z"/><path class="e" d="M833.0 603.5l6.8-19.5"/>
<path class="g20" d="M833.0 603.5l4.9-1.8l6.7-19.6l-4.8 1.9z"/><path class="e" d="M833.0 603.5l6.8-19.5"/>
<path class="g14" d="M496.5 575.2l7.8-1.5l6.2-12.6l-7.7 1.6z"/><path class="e" d="M496.5 575.2l6.3-12.5"/>
<path class="g24" d="M764.3 626.1l2.1 1.5l7.3-18.1l-2.1-1.5z"/><path class="e" d="M764.3 626.1l7.3-18.1"/>
<path class="g25" d="M469.9 523.5l2.6 3l5.3-11.9l-2.8-3z"/><path class="e" d="M469.9 523.5l5.1-11.9"/>
<path class="g19" d="M507.3 524.6l3 1.7l5.2-12.8l-3.1-1.6z"/>
<path class="g10" d="M578.7 625.7l2.1-1.4l7.2-14.2l-2 1.4z"/><path class="e" d="M580.8 624.3l7.2-14.2"/>
<path class="g11" d="M804.7 578.8l3-1.6l6.2-19l-2.9 1.7z"/>
<path class="g14" d="M752.8 627.5l3.7-1.2l7.3-17.9l-3.6 1.2z"/>
<path class="g27" d="M817.8 576.9l6.3 2.6l6.3-19.3l-6.5-2.5z"/>
<path class="g20" d="M588.6 624.7l3.6 1.1l7.3-14.4l-3.7-1.1z"/>
<path class="g20" d="M552.3 622.2l-1.6 5.4l7.4-13.6l1.4-5.4z"/>
<path class="g11" d="M493.4 526.5l7.2-1.8l5.1-12.5l-7 1.9z"/>
<path class="g11" d="M541.5 601.8l5.9-2.9l6.7-13.5l-5.8 3z"/>
<path class="g10" d="M700.5 652.3l2.9-1.5l7.8-16.9l-2.8 1.6z"/><path class="e" d="M700.5 652.3l7.9-16.8"/>
<path class="g23" d="M715.1 651.0l1.4 1.7l7.9-17.1l-1.5-1.6z"/><path class="e" d="M715.1 651.0l7.8-17"/>
<path class="g20" d="M628.4 650.0l0.2 1.9l7.9-15.2l-0.3-1.9z"/><path class="e" d="M628.4 650.0l7.8-15.2"/>
<path class="g21" d="M519.3 598.1l-1.8 4.7l6.9-12.9l1.6-4.7z"/><path class="e" d="M517.5 602.8l6.9-12.9"/>
<path class="g18" d="M660.3 651.4l4.1-0.1l7.9-16l-4.2 0.2z"/>
<path class="g20" d="M664.4 651.3l4.1 0.4l7.9-16.1l-4.1-0.3z"/>
<path class="g20" d="M560.8 600.3l1.5 2l6.9-13.8l-1.7-2z"/><path class="e" d="M562.3 602.3l6.9-13.8"/>
<path class="g10" d="M608.3 653.4l4.1-3.9l7.8-14.9l-3.9 4z"/>
<path class="g11" d="M656.9 652.6l3.4-1.2l7.8-15.9l-3.2 1.2z"/><path class="e" d="M656.9 652.6l8-15.9"/>
<path class="g22" d="M585.5 648.5l-0.2 5.5l8.1-14.4l-0.2-5.4z"/>
<path class="g9" d="M750.6 629.3l2.2-1.8l7.4-17.9l-2.2 1.9z"/><path class="e" d="M750.6 629.3l7.4-17.8"/>
<path class="g21" d="M592.2 625.8l2.1 2l7.5-14.6l-2.3-1.8z"/><path class="e" d="M594.3 627.8l7.5-14.6"/>
<path class="g23" d="M668.5 651.7l3.1 1.3l8-16.1l-3.2-1.3z"/><path class="e" d="M671.6 653.0l8-16.1"/>
<path class="g19" d="M510.3 526.3l2.4 1.9l5.4-12.7l-2.6-2z"/>
<path class="g9" d="M803.3 581.0l1.4-2.2l6.3-18.9l-1.2 2.2z"/><path class="e" d="M803.3 581.0l6.5-18.9"/>
<path class="g13" d="M484.5 528.1l8.9-1.6l5.3-12.4l-8.8 1.8z"/>
<path class="g13" d="M844.6 582.1l3.5-2.6l6.4-19.9l-3.5 2.7z"/><path class="e" d="M848.1 579.5l6.4-19.9"/>
<path class="g26" d="M766.4 627.6l4.9 3.5l7.5-18.2l-5.1-3.4z"/>
<path class="g10" d="M573.6 629.2l5.1-3.5l7.3-14.2l-4.9 3.6z"/>
<path class="g17" d="M781.8 655.3l4.8-1.9l7.9-18.6l-4.6 2z"/><path class="e" d="M786.6 653.4l7.9-18.6"/>
<path class="g25" d="M472.5 526.5l4 2.4l5.4-12l-4.1-2.3z"/><path class="e" d="M476.5 528.9l5.4-12"/>
<path class="g30" d="M824.1 579.5l8.2 2.7l6.4-19.6l-8.3-2.4z"/>
<path class="g9" d="M655.8 654.4l1.1-1.8l8-15.9l-1.1 1.8z"/><path class="e" d="M656.9 652.6l8-15.9"/>
<path class="g32" d="M770.1 653.2l6.2 3l8.1-18.3l-6.4-3z"/><path class="e" d="M776.3 656.2l8.1-18.3"/>
<path class="g21" d="M671.6 653.0l0.8 1.9l8.1-16.2l-0.9-1.8z"/><path class="e" d="M671.6 653.0l8-16.1"/>
<path class="g21" d="M817.4 556.9l3.8-0.3l6-19.3l-3.9 0.4z"/><path class="e" d="M821.2 556.6l6-19.3"/>
<path class="g15" d="M476.5 528.9l8-0.8l5.4-12.2l-8 1z"/><path class="e" d="M476.5 528.9l5.4-12"/>
<path class="g12" d="M533.6 604.8l7.9-3l6.8-13.4l-7.6 3.1z"/>
<path class="g18" d="M594.3 627.8l-0.3 1.8l7.5-14.5l0.3-1.9z"/><path class="e" d="M594.3 627.8l7.5-14.6"/>
<path class="g25" d="M716.5 652.7l3.4 4.2l8.1-17.2l-3.6-4.1z"/>
<path class="g25" d="M821.2 556.6l2.7 1.1l6-19.4l-2.7-1z"/><path class="e" d="M821.2 556.6l6-19.3"/>
<path class="g18" d="M512.7 528.2l0.5 2.3l5.5-12.8l-0.6-2.2z"/><path class="e" d="M513.2 530.5l5.5-12.8"/>
<path class="g23" d="M776.3 656.2l5.5-0.9l8.1-18.5l-5.5 1.1z"/><path class="e" d="M776.3 656.2l8.1-18.3"/>
<path class="g21" d="M628.6 651.9l0.4 4.6l8.2-15.3l-0.7-4.5z"/>
<path class="g14" d="M813.9 558.2l3.5-1.3l5.9-19.2l-3.4 1.4z"/>
<path class="g27" d="M517.5 602.8l3.9 2.4l7.1-13l-4.1-2.3z"/><path class="e" d="M517.5 602.8l6.9-12.9"/>
<path class="g19" d="M839.8 584.0l4.8-1.9l6.4-19.8l-4.6 2z"/><path class="e" d="M839.8 584.0l6.6-19.7"/>
<path class="g32" d="M832.3 582.2l7.5 1.8l6.6-19.7l-7.7-1.7z"/><path class="e" d="M839.8 584.0l6.6-19.7"/>
<path class="g16" d="M528.1 555.3l3.9 0.2l6-13.2l-3.8-0.1z"/><path class="e" d="M528.1 555.3l6.1-13.1"/>
<path class="g23" d="M550.7 627.6l-0.6 4.8l7.8-13.6l0.2-4.8z"/><path class="e" d="M550.1 632.4l7.8-13.6"/>
<path class="g27" d="M823.9 557.7l6.5 2.5l6.2-19.5l-6.7-2.4z"/>
<path class="g10" d="M525.4 556.3l2.7-1l6.1-13.1l-2.7 1z"/><path class="e" d="M528.1 555.3l6.1-13.1"/>
<path class="g22" d="M767.7 607.6l3.9 0.4l7.1-18.2l-3.9-0.3z"/><path class="e" d="M771.6 608.0l7.1-18.2"/>
<path class="g11" d="M602.5 657.6l5.8-4.2l8-14.8l-5.6 4.3z"/>
<path class="g11" d="M811.0 559.9l2.9-1.7l6-19.1l-2.8 1.7z"/>
<path class="g17" d="M763.8 608.4l3.9-0.8l7.1-18.1l-3.9 0.8z"/>
<path class="g19" d="M532.0 555.5l3.4 1.4l6.1-13.3l-3.5-1.3z"/>
<path class="g29" d="M771.3 631.1l6.7 3.8l7.7-18.3l-6.9-3.7z"/>
<path class="g9" d="M653.0 658.6l2.8-4.2l8-15.9l-2.5 4.4z"/>
<path class="g13" d="M526.3 606.9l7.3-2.1l7.1-13.3l-7.2 2.3z"/><path class="e" d="M526.3 606.9l7.2-13.1"/>
<path class="g12" d="M566.7 632.8l6.9-3.6l7.5-14.1l-6.7 3.8z"/>
<path class="g25" d="M521.4 605.2l4.9 1.7l7.2-13.1l-5-1.6z"/><path class="e" d="M526.3 606.9l7.2-13.1"/>
<path class="g23" d="M672.4 654.9l2 4.4l8.3-16.2l-2.2-4.4z"/>
<path class="g25" d="M771.6 608.0l2.1 1.5l7.2-18.3l-2.2-1.4z"/><path class="e" d="M771.6 608.0l7.1-18.2"/>
<path class="g25" d="M585.3 654.0l0.7 4.8l8.4-14.4l-1-4.8z"/><path class="e" d="M586.0 658.8l8.4-14.4"/>
<path class="g19" d="M715.2 633.3l4.1-0.2l7.7-17.2l-4.1 0.3z"/>
<path class="g19" d="M594.0 629.6l-0.8 4.6l7.8-14.5l0.5-4.6z"/>
<path class="g18" d="M625.4 632.1l4.1 0.3l7.7-15.3l-4.1-0.2z"/>
<path class="g14" d="M760.2 609.6l3.6-1.2l7.1-18.1l-3.5 1.3z"/>
<path class="g23" d="M719.3 633.1l3.6 0.9l7.7-17.3l-3.6-0.8z"/><path class="e" d="M722.9 634.0l7.7-17.3"/>
<path class="g13" d="M621.8 632.9l3.6-0.8l7.7-15.2l-3.6 0.9z"/><path class="e" d="M621.8 632.9l7.7-15.1"/>
<path class="g16" d="M711.2 633.9l4-0.6l7.7-17.1l-4 0.7z"/>
<path class="g13" d="M851.0 562.3l3.5-2.7l6-20l-3.2 2.8z"/><path class="e" d="M854.5 559.6l6-20"/>
<path class="g11" d="M518.9 558.8l6.5-2.5l6.1-13.1l-6.4 2.6z"/>
<path class="g20" d="M629.5 632.4l4 0.8l7.7-15.4l-4-0.7z"/>
<path class="g20" d="M535.4 556.9l2.9 1.7l6.3-13.3l-3.1-1.7z"/>
<path class="g8" d="M809.8 562.1l1.2-2.2l6.1-19.1l-1.1 2.2z"/><path class="e" d="M809.8 562.1l6.2-19.1"/>
<path class="g30" d="M830.4 560.2l8.3 2.4l6.3-19.6l-8.4-2.3z"/>
<path class="g28" d="M719.9 656.9l5 4.5l8.4-17.2l-5.3-4.5z"/>
<path class="g23" d="M722.9 634.0l1.5 1.6l7.8-17.2l-1.6-1.7z"/><path class="e" d="M722.9 634.0l7.7-17.3"/>
<path class="g9" d="M620.2 634.6l1.6-1.7l7.7-15.1l-1.5 1.7z"/><path class="e" d="M621.8 632.9l7.7-15.1"/>
<path class="g10" d="M708.4 635.5l2.8-1.6l7.7-17l-2.7 1.7z"/><path class="e" d="M708.4 635.5l7.8-16.9"/>
<path class="g9" d="M758.0 611.5l2.2-1.9l7.2-18l-2 1.9z"/><path class="e" d="M758.0 611.5l7.4-18"/>
<path class="g22" d="M633.5 633.2l2.7 1.6l7.8-15.4l-2.8-1.6z"/><path class="e" d="M636.2 634.8l7.8-15.4"/>
<path class="g17" d="M789.9 636.8l4.6-2l7.7-18.7l-4.5 2.1z"/><path class="e" d="M794.5 634.8l7.7-18.7"/>
<path class="g15" d="M556.5 584.1l3.9-0.1l6.8-13.8l-3.9 0.2z"/><path class="e" d="M556.5 584.1l6.8-13.7"/>
<path class="g27" d="M550.1 632.4l4.6 2.1l7.8-13.7l-4.6-2z"/><path class="e" d="M550.1 632.4l7.8-13.6"/>
<path class="g21" d="M823.3 537.7l3.9-0.4l5.7-19.4l-3.8 0.4z"/><path class="e" d="M827.2 537.3l5.7-19.4"/>
<path class="g26" d="M773.7 609.5l5.1 3.4l7.4-18.4l-5.3-3.3z"/>
<path class="g25" d="M629.0 656.5l1.7 5.4l8.5-15.3l-2-5.4z"/>
<path class="g25" d="M827.2 537.3l2.7 1l5.8-19.4l-2.8-1z"/><path class="e" d="M827.2 537.3l5.7-19.4"/>
<path class="g19" d="M560.4 584.0l3.8 1l6.8-13.9l-3.8-0.9z"/>
<path class="g19" d="M538.3 558.6l1.2 2.2l6.3-13.3l-1.2-2.2z"/><path class="e" d="M539.5 560.8l6.3-13.3"/>
<path class="g32" d="M778.0 634.9l6.4 3l8-18.6l-6.7-2.7z"/><path class="e" d="M784.4 637.9l8-18.6"/>
<path class="g26" d="M494.8 558.0l3.4 2.7l6.4-12.5l-3.5-2.6z"/><path class="e" d="M494.8 558.0l6.3-12.4"/>
<path class="g10" d="M554.1 585.4l2.4-1.3l6.8-13.7l-2.3 1.3z"/><path class="e" d="M556.5 584.1l6.8-13.7"/>
<path class="g13" d="M560.0 635.6l6.7-2.8l7.7-13.9l-6.4 2.9z"/><path class="e" d="M560.0 635.6l8-13.8"/>
<path class="g14" d="M588.0 610.1l3.8-0.5l7.3-14.5l-3.7 0.6z"/><path class="e" d="M588.0 610.1l7.4-14.4"/>
<path class="g12" d="M596.7 661.0l5.8-3.4l8.2-14.7l-5.5 3.5z"/><path class="e" d="M596.7 661.0l8.5-14.6"/>
<path class="g20" d="M672.3 635.3l4.1 0.3l7.9-16.3l-4.2-0.2z"/>
<path class="g17" d="M668.1 635.5l4.2-0.2l7.8-16.2l-4.1 0.3z"/>
<path class="g19" d="M591.8 609.6l4 0.7l7.4-14.6l-4.1-0.6z"/>
<path class="g19" d="M846.4 564.3l4.6-2l6.3-19.9l-4.5 2.1z"/><path class="e" d="M846.4 564.3l6.4-19.8"/>
<path class="g14" d="M819.9 539.1l3.4-1.4l5.8-19.4l-3.3 1.5z"/>
<path class="g12" d="M510.5 561.1l8.4-2.3l6.2-13l-8.2 2.6z"/>
<path class="g28" d="M586.0 658.8l5.1 1.6l8.4-14.5l-5.1-1.5z"/><path class="e" d="M586.0 658.8l8.4-14.4"/>
<path class="g32" d="M838.7 562.6l7.7 1.7l6.4-19.8l-7.8-1.5z"/><path class="e" d="M846.4 564.3l6.4-19.8"/>
<path class="g20" d="M636.2 634.8l0.3 1.9l7.9-15.4l-0.4-1.9z"/><path class="e" d="M636.2 634.8l7.8-15.4"/>
<path class="g23" d="M784.4 637.9l5.5-1.1l7.8-18.6l-5.3 1.1z"/><path class="e" d="M784.4 637.9l8-18.6"/>
<path class="g23" d="M676.4 635.6l3.2 1.3l7.9-16.3l-3.2-1.3z"/><path class="e" d="M679.6 636.9l7.9-16.3"/>
<path class="g11" d="M664.9 636.7l3.2-1.2l7.9-16.1l-3.2 1.3z"/><path class="e" d="M664.9 636.7l7.9-16"/>
<path class="g20" d="M564.2 585.0l3.3 1.5l6.9-14l-3.4-1.4z"/>
<path class="g25" d="M554.7 634.5l5.3 1.1l8-13.8l-5.5-1z"/><path class="e" d="M560.0 635.6l8-13.8"/>
<path class="g20" d="M595.8 610.3l3.7 1.1l7.4-14.7l-3.7-1z"/>
<path class="g9" d="M586.0 611.5l2-1.4l7.4-14.4l-1.9 1.5z"/><path class="e" d="M588.0 610.1l7.4-14.4"/>
<path class="g10" d="M648.8 663.5l4.2-4.9l8.3-15.7l-4 4.9z"/>
<path class="g27" d="M829.9 538.3l6.7 2.4l5.9-19.6l-6.8-2.2z"/>
<path class="g25" d="M591.1 660.4l5.6 0.6l8.5-14.6l-5.7-0.5z"/><path class="e" d="M596.7 661.0l8.5-14.6"/>
<path class="g25" d="M724.4 635.6l3.6 4.1l8.1-17.4l-3.9-3.9z"/>
<path class="g27" d="M674.4 659.3l3.4 5.1l8.6-16.3l-3.7-5z"/>
<path class="g10" d="M616.3 638.6l3.9-4l7.8-15.1l-3.6 4.1z"/>
<path class="g21" d="M559.5 608.6l-1.4 5.4l7.7-13.8l1-5.4z"/>
<path class="g11" d="M817.1 540.8l2.8-1.7l5.9-19.3l-2.8 1.8z"/>
<path class="g11" d="M548.3 588.4l5.8-3l6.9-13.7l-5.6 3.1z"/>
<path class="g25" d="M498.2 560.7l4.6 2l6.5-12.6l-4.7-1.9z"/><path class="e" d="M502.8 562.7l6.5-12.6"/>
<path class="g22" d="M679.6 636.9l0.9 1.8l8.1-16.3l-1.1-1.8z"/><path class="e" d="M679.6 636.9l7.9-16.3"/>
<path class="g8" d="M663.8 638.5l1.1-1.8l7.9-16l-0.9 1.8z"/><path class="e" d="M664.9 636.7l7.9-16"/>
<path class="g23" d="M593.2 634.2l0.2 5.4l8.1-14.5l-0.5-5.4z"/>
<path class="g22" d="M599.5 611.4l2.3 1.8l7.5-14.7l-2.4-1.8z"/><path class="e" d="M601.8 613.2l7.5-14.7"/>
<path class="g14" d="M502.8 562.7l7.7-1.6l6.4-12.7l-7.6 1.7z"/><path class="e" d="M502.8 562.7l6.5-12.6"/>
<path class="g13" d="M857.3 542.4l3.2-2.8l5.9-20.1l-3.1 2.9z"/><path class="e" d="M860.5 539.6l5.9-20.1"/>
<path class="g22" d="M774.8 589.5l3.9 0.3l7-18.4l-3.9-0.2z"/><path class="e" d="M778.7 589.8l7-18.4"/>
<path class="g21" d="M567.5 586.5l1.7 2l7.1-14l-1.9-2z"/><path class="e" d="M569.2 588.5l7.1-14"/>
<path class="g31" d="M724.9 661.4l5.1 3.8l8.7-17.4l-5.4-3.6z"/><path class="e" d="M730.0 665.2l8.7-17.4"/>
<path class="g16" d="M770.9 590.3l3.9-0.8l7-18.3l-3.9 0.9z"/>
<path class="g30" d="M778.8 612.9l6.9 3.7l7.6-18.6l-7.1-3.5z"/>
<path class="g22" d="M526.0 585.2l-1.6 4.7l7.2-13.1l1.2-4.7z"/><path class="e" d="M524.4 589.9l7.2-13.1"/>
<path class="g25" d="M778.7 589.8l2.2 1.4l7-18.5l-2.2-1.3z"/><path class="e" d="M778.7 589.8l7-18.4"/>
<path class="g20" d="M735.7 664.9l5.3-1.3l8.6-17.6l-5.2 1.4z"/><path class="e" d="M741.0 663.6l8.6-17.6"/>
<path class="g30" d="M836.6 540.7l8.4 2.3l6.1-19.8l-8.6-2.1z"/>
<path class="g10" d="M581.1 615.1l4.9-3.6l7.5-14.3l-4.7 3.6z"/>
<path class="g8" d="M816.0 543.0l1.1-2.2l5.9-19.2l-0.9 2.3z"/><path class="e" d="M816.0 543.0l6.1-19.1"/>
<path class="g22" d="M636.5 636.7l0.7 4.5l8.3-15.4l-1.1-4.5z"/>
<path class="g13" d="M767.4 591.6l3.5-1.3l7-18.2l-3.4 1.3z"/>
<path class="g18" d="M601.8 613.2l-0.3 1.9l7.7-14.7l0.1-1.9z"/><path class="e" d="M601.8 613.2l7.5-14.7"/>
<path class="g25" d="M730.0 665.2l5.7-0.3l8.7-17.5l-5.7 0.4z"/><path class="e" d="M730.0 665.2l8.7-17.4"/>
<path class="g28" d="M630.7 661.9l2.3 4.6l8.8-15.4l-2.6-4.5z"/><path class="e" d="M633.0 666.5l8.8-15.4"/>
<path class="g16" d="M569.2 588.5l-0.7 1.8l7.1-13.9l0.7-1.9z"/><path class="e" d="M569.2 588.5l7.1-14"/>
<path class="g18" d="M722.9 616.2l4.1-0.3l7.6-17.3l-4.1 0.4z"/>
<path class="g18" d="M852.8 544.5l4.5-2.1l6-20l-4.4 2.1z"/><path class="e" d="M852.8 544.5l6.1-20"/>
<path class="g23" d="M727.0 615.9l3.6 0.8l7.7-17.4l-3.7-0.7z"/><path class="e" d="M730.6 616.7l7.7-17.4"/>
<path class="g16" d="M797.7 618.2l4.5-2.1l7.6-18.9l-4.4 2.2z"/><path class="e" d="M802.2 616.1l7.6-18.9"/>
<path class="g32" d="M845.0 543.0l7.8 1.5l6.1-20l-7.8-1.3z"/><path class="e" d="M852.8 544.5l6.1-20"/>
<path class="g12" d="M540.7 591.5l7.6-3.1l7.1-13.6l-7.4 3.3z"/>
<path class="g16" d="M718.9 616.9l4-0.7l7.6-17.2l-3.9 0.8z"/>
<path class="g23" d="M680.5 638.7l2.2 4.4l8.4-16.4l-2.5-4.3z"/>
<path class="g9" d="M661.3 642.9l2.5-4.4l8.1-16l-2.2 4.4z"/>
<path class="g9" d="M765.4 593.5l2-1.9l7.1-18.2l-1.9 2z"/><path class="e" d="M765.4 593.5l7.2-18.1"/>
<path class="g12" d="M644.2 667.5l4.6-4l8.5-15.7l-4.3 4.1z"/><path class="e" d="M644.2 667.5l8.8-15.6"/>
<path class="g27" d="M780.9 591.2l5.3 3.3l7.3-18.6l-5.6-3.2z"/>
<path class="g11" d="M692.9 668.3l3.2-4.4l8.6-16.7l-2.9 4.5z"/><path class="e" d="M692.9 668.3l8.9-16.6"/>
<path class="g28" d="M728.0 639.7l5.3 4.5l8.4-17.5l-5.6-4.4z"/>
<path class="g11" d="M610.7 642.9l5.6-4.3l8.1-15l-5.3 4.5z"/>
<path class="g32" d="M785.7 616.6l6.7 2.7l7.7-18.7l-6.8-2.6z"/><path class="e" d="M792.4 619.3l7.7-18.7"/>
<path class="g23" d="M730.6 616.7l1.6 1.7l7.8-17.5l-1.7-1.6z"/><path class="e" d="M730.6 616.7l7.7-17.4"/>
<path class="g30" d="M677.8 664.4l3.8 4.2l8.9-16.4l-4.1-4.1z"/><path class="e" d="M681.6 668.6l8.9-16.4"/>
<path class="g10" d="M716.2 618.6l2.7-1.7l7.7-17.1l-2.6 1.7z"/><path class="e" d="M716.2 618.6l7.8-17.1"/>
<path class="g27" d="M524.4 589.9l4.1 2.3l7.3-13.1l-4.2-2.3z"/><path class="e" d="M524.4 589.9l7.2-13.1"/>
<path class="g18" d="M633.1 616.9l4.1 0.2l7.8-15.4l-4.2-0.1z"/>
<path class="g22" d="M792.4 619.3l5.3-1.1l7.7-18.8l-5.3 1.2z"/><path class="e" d="M792.4 619.3l7.7-18.7"/>
<path class="g24" d="M558.1 614.0l-0.2 4.8l7.9-13.8l0-4.8z"/><path class="e" d="M557.9 618.8l7.9-13.8"/>
<path class="g16" d="M534.2 542.2l3.8 0.1l6.2-13.3l-3.8-0.1z"/><path class="e" d="M534.2 542.2l6.2-13.3"/>
<path class="g20" d="M637.2 617.1l4 0.7l7.8-15.5l-4-0.6z"/>
<path class="g12" d="M629.5 617.8l3.6-0.9l7.7-15.3l-3.5 1z"/><path class="e" d="M629.5 617.8l7.8-15.2"/>
<path class="g27" d="M633.0 666.5l5.5 1l8.8-15.5l-5.5-0.9z"/><path class="e" d="M633.0 666.5l8.8-15.4"/>
<path class="g12" d="M574.4 618.9l6.7-3.8l7.7-14.3l-6.5 4z"/>
<path class="g20" d="M601.5 615.1l-0.5 4.6l8-14.7l0.2-4.6z"/>
<path class="g26" d="M593.4 639.6l1 4.8l8.5-14.5l-1.4-4.8z"/><path class="e" d="M594.4 644.4l8.5-14.5"/>
<path class="g10" d="M531.5 543.2l2.7-1l6.2-13.3l-2.6 1.1z"/><path class="e" d="M534.2 542.2l6.2-13.3"/>
<path class="g18" d="M568.5 590.3l-1.7 4.5l7.4-13.9l1.4-4.5z"/>
<path class="g24" d="M638.5 667.5l5.7 0l8.8-15.6l-5.7 0.1z"/><path class="e" d="M644.2 667.5l8.8-15.6"/>
<path class="g19" d="M538.0 542.3l3.5 1.3l6.3-13.4l-3.6-1.2z"/>
<path class="g13" d="M533.5 593.8l7.2-2.3l7.3-13.4l-7.1 2.5z"/><path class="e" d="M533.5 593.8l7.4-13.2"/>
<path class="g22" d="M641.2 617.8l2.8 1.6l7.9-15.6l-2.9-1.5z"/><path class="e" d="M644.0 619.4l7.9-15.6"/>
<path class="g22" d="M687.3 669.0l5.6-0.7l8.9-16.6l-5.6 0.8z"/><path class="e" d="M692.9 668.3l8.9-16.6"/>
<path class="g19" d="M680.1 619.1l4.2 0.2l7.8-16.4l-4.1-0.1z"/>
<path class="g9" d="M628.0 619.5l1.5-1.7l7.8-15.2l-1.4 1.7z"/><path class="e" d="M629.5 617.8l7.8-15.2"/>
<path class="g25" d="M528.5 592.2l5 1.6l7.4-13.2l-5.1-1.5z"/><path class="e" d="M533.5 593.8l7.4-13.2"/>
<path class="g17" d="M676.0 619.4l4.1-0.3l7.9-16.3l-4.1 0.4z"/>
<path class="g27" d="M681.6 668.6l5.7 0.4l8.9-16.5l-5.7-0.3z"/><path class="e" d="M681.6 668.6l8.9-16.4"/>
<path class="g22" d="M781.8 571.2l3.9 0.2l6.8-18.6l-3.9-0.1z"/><path class="e" d="M785.7 571.4l6.8-18.6"/>
<path class="g25" d="M637.2 641.2l2 5.4l8.6-15.5l-2.3-5.3z"/>
<path class="g25" d="M732.2 618.4l3.9 3.9l8-17.5l-4.1-3.9z"/>
<path class="g30" d="M786.2 594.5l7.1 3.5l7.5-18.7l-7.3-3.4z"/>
<path class="g23" d="M684.3 619.3l3.2 1.3l8-16.5l-3.4-1.2z"/><path class="e" d="M687.5 620.6l8-16.5"/>
<path class="g16" d="M777.9 572.1l3.9-0.9l6.8-18.5l-3.8 1z"/>
<path class="g20" d="M541.5 543.6l3.1 1.7l6.4-13.5l-3.2-1.6z"/>
<path class="g10" d="M672.8 620.7l3.2-1.3l7.9-16.2l-3.2 1.3z"/><path class="e" d="M672.8 620.7l7.9-16.2"/>
<path class="g11" d="M525.1 545.8l6.4-2.6l6.3-13.2l-6.3 2.8z"/>
<path class="g25" d="M785.7 571.4l2.2 1.3l7-18.6l-2.4-1.3z"/><path class="e" d="M785.7 571.4l6.8-18.6"/>
<path class="g31" d="M733.3 644.2l5.4 3.6l8.5-17.6l-5.5-3.5z"/><path class="e" d="M738.7 647.8l8.5-17.6"/>
<path class="g20" d="M644.0 619.4l0.4 1.9l8-15.6l-0.5-1.9z"/><path class="e" d="M644.0 619.4l7.9-15.6"/>
<path class="g12" d="M605.2 646.4l5.5-3.5l8.4-14.8l-5.4 3.6z"/><path class="e" d="M605.2 646.4l8.5-14.7"/>
<path class="g27" d="M682.7 643.1l3.7 5l8.7-16.5l-4-4.9z"/>
<path class="g10" d="M657.3 647.8l4-4.9l8.4-16l-3.7 5z"/>
<path class="g15" d="M563.3 570.4l3.9-0.2l6.9-14l-3.9 0.3z"/><path class="e" d="M563.3 570.4l6.9-13.9"/>
<path class="g19" d="M599.1 595.1l4.1 0.6l7.4-14.7l-4-0.5z"/>
<path class="g14" d="M595.4 595.7l3.7-0.6l7.5-14.6l-3.8 0.6z"/><path class="e" d="M595.4 595.7l7.4-14.6"/>
<path class="g28" d="M557.9 618.8l4.6 2l8.1-13.9l-4.8-1.9z"/><path class="e" d="M557.9 618.8l7.9-13.8"/>
<path class="g13" d="M774.5 573.4l3.4-1.3l6.9-18.4l-3.4 1.4z"/>
<path class="g19" d="M567.2 570.2l3.8 0.9l7-14l-3.9-0.9z"/>
<path class="g19" d="M744.4 647.4l5.2-1.4l8.4-17.8l-5.1 1.5z"/><path class="e" d="M749.6 646.0l8.4-17.8"/>
<path class="g28" d="M594.4 644.4l5.1 1.5l8.6-14.6l-5.2-1.4z"/><path class="e" d="M594.4 644.4l8.5-14.5"/>
<path class="g22" d="M687.5 620.6l1.1 1.8l8-16.6l-1.1-1.7z"/><path class="e" d="M687.5 620.6l8-16.5"/>
<path class="g13" d="M568.0 621.8l6.4-2.9l7.9-14.1l-6.2 3z"/><path class="e" d="M568.0 621.8l8.1-14"/>
<path class="g16" d="M805.4 599.4l4.4-2.2l7.4-19.1l-4.2 2.3z"/><path class="e" d="M809.8 597.2l7.4-19.1"/>
<path class="g10" d="M561.0 571.7l2.3-1.3l6.9-13.9l-2.2 1.4z"/><path class="e" d="M563.3 570.4l6.9-13.9"/>
<path class="g20" d="M603.2 595.7l3.7 1l7.6-14.8l-3.9-0.9z"/>
<path class="g20" d="M544.6 545.3l1.2 2.2l6.5-13.5l-1.3-2.2z"/><path class="e" d="M545.8 547.5l6.5-13.5"/>
<path class="g9" d="M593.5 597.2l1.9-1.5l7.4-14.6l-1.8 1.6z"/><path class="e" d="M595.4 595.7l7.4-14.6"/>
<path class="g10" d="M624.4 623.6l3.6-4.1l7.9-15.2l-3.4 4.1z"/>
<path class="g25" d="M738.7 647.8l5.7-0.4l8.5-17.7l-5.7 0.5z"/><path class="e" d="M738.7 647.8l8.5-17.6"/>
<path class="g25" d="M599.5 645.9l5.7 0.5l8.5-14.7l-5.6-0.4z"/><path class="e" d="M605.2 646.4l8.5-14.7"/>
<path class="g20" d="M571.0 571.1l3.4 1.4l7.1-14.1l-3.5-1.3z"/>
<path class="g25" d="M562.5 620.8l5.5 1l8.1-14l-5.5-0.9z"/><path class="e" d="M568.0 621.8l8.1-14"/>
<path class="g27" d="M787.9 572.7l5.6 3.2l7.1-18.7l-5.7-3.1z"/>
<path class="g32" d="M793.3 598.0l6.8 2.6l7.7-18.8l-7-2.5z"/><path class="e" d="M800.1 600.6l7.7-18.8"/>
<path class="g9" d="M772.6 575.4l1.9-2l6.9-18.3l-1.7 2z"/><path class="e" d="M772.6 575.4l7.1-18.3"/>
<path class="g26" d="M501.1 545.6l3.5 2.6l6.6-12.6l-3.7-2.6z"/><path class="e" d="M501.1 545.6l6.4-12.6"/>
<path class="g12" d="M516.9 548.4l8.2-2.6l6.4-13l-8 2.7z"/>
<path class="g18" d="M730.5 599.0l4.1-0.4l7.5-17.5l-4 0.5z"/>
<path class="g23" d="M734.6 598.6l3.7 0.7l7.6-17.5l-3.8-0.7z"/><path class="e" d="M738.3 599.3l7.6-17.5"/>
<path class="g22" d="M606.9 596.7l2.4 1.8l7.6-14.8l-2.4-1.8z"/><path class="e" d="M609.3 598.5l7.6-14.8"/>
<path class="g23" d="M601.0 619.7l0.5 5.4l8.3-14.7l-0.8-5.4z"/>
<path class="g22" d="M800.1 600.6l5.3-1.2l7.6-19l-5.2 1.4z"/><path class="e" d="M800.1 600.6l7.7-18.8"/>
<path class="g21" d="M566.8 594.8l-1 5.4l7.7-13.9l0.7-5.4z"/>
<path class="g15" d="M726.6 599.8l3.9-0.8l7.6-17.4l-3.9 0.9z"/>
<path class="g22" d="M644.4 621.3l1.1 4.5l8.2-15.6l-1.3-4.5z"/>
<path class="g29" d="M736.1 622.3l5.6 4.4l8.2-17.6l-5.8-4.3z"/>
<path class="g10" d="M555.4 574.8l5.6-3.1l7-13.8l-5.4 3.2z"/>
<path class="g21" d="M574.4 572.5l1.9 2l7.1-14.1l-1.9-2z"/><path class="e" d="M576.3 574.5l7.1-14.1"/>
<path class="g24" d="M738.3 599.3l1.7 1.6l7.7-17.5l-1.8-1.6z"/><path class="e" d="M738.3 599.3l7.6-17.5"/>
<path class="g24" d="M688.6 622.4l2.5 4.3l8.3-16.6l-2.8-4.3z"/>
<path class="g11" d="M701.8 651.7l2.9-4.5l8.5-16.8l-2.6 4.5z"/><path class="e" d="M701.8 651.7l8.8-16.8"/>
<path class="g28" d="M639.2 646.6l2.6 4.5l8.8-15.5l-2.8-4.5z"/><path class="e" d="M641.8 651.1l8.8-15.5"/>
<path class="g10" d="M588.8 600.8l4.7-3.6l7.5-14.5l-4.5 3.7z"/>
<path class="g10" d="M724.0 601.5l2.6-1.7l7.6-17.3l-2.5 1.7z"/><path class="e" d="M724.0 601.5l7.7-17.3"/>
<path class="g19" d="M609.3 598.5l-0.1 1.9l7.7-14.8l0-1.9z"/><path class="e" d="M609.3 598.5l7.6-14.8"/>
<path class="g25" d="M504.6 548.2l4.7 1.9l6.7-12.7l-4.8-1.8z"/><path class="e" d="M509.3 550.1l6.7-12.7"/>
<path class="g13" d="M509.3 550.1l7.6-1.7l6.6-12.9l-7.5 1.9z"/><path class="e" d="M509.3 550.1l6.7-12.7"/>
<path class="g30" d="M686.4 648.1l4.1 4.1l8.9-16.5l-4.3-4.1z"/><path class="e" d="M690.5 652.2l8.9-16.5"/>
<path class="g12" d="M653.0 651.9l4.3-4.1l8.7-15.9l-4.1 4.2z"/><path class="e" d="M653.0 651.9l8.9-15.8"/>
<path class="g22" d="M532.8 572.1l-1.2 4.7l7.3-13.2l1-4.7z"/><path class="e" d="M531.6 576.8l7.3-13.2"/>
<path class="g22" d="M788.6 552.7l3.9 0.1l6.7-18.6l-3.9-0.1z"/><path class="e" d="M792.5 552.8l6.7-18.6"/>
<path class="g30" d="M793.5 575.9l7.3 3.4l7.3-18.9l-7.5-3.2z"/>
<path class="g17" d="M576.3 574.5l-0.7 1.9l7.3-14.2l0.5-1.8z"/><path class="e" d="M576.3 574.5l7.1-14.1"/>
<path class="g16" d="M784.8 553.7l3.8-1l6.7-18.6l-3.7 1.1z"/>
<path class="g25" d="M792.5 552.8l2.4 1.3l6.7-18.7l-2.4-1.2z"/><path class="e" d="M792.5 552.8l6.7-18.6"/>
<path class="g11" d="M619.1 628.1l5.3-4.5l8.1-15.2l-5 4.6z"/>
<path class="g18" d="M640.8 601.6l4.2 0.1l7.8-15.6l-4.2 0z"/>
<path class="g25" d="M740.0 600.9l4.1 3.9l7.9-17.7l-4.3-3.7z"/>
<path class="g20" d="M645.0 601.7l4 0.6l7.8-15.7l-4-0.5z"/>
<path class="g22" d="M696.2 652.5l5.6-0.8l8.8-16.8l-5.5 0.9z"/><path class="e" d="M701.8 651.7l8.8-16.8"/>
<path class="g12" d="M637.3 602.6l3.5-1l7.8-15.5l-3.4 1z"/><path class="e" d="M637.3 602.6l7.9-15.5"/>
<path class="g27" d="M641.8 651.1l5.5 0.9l8.9-15.7l-5.6-0.7z"/><path class="e" d="M641.8 651.1l8.8-15.5"/>
<path class="g12" d="M548.0 578.1l7.4-3.3l7.2-13.7l-7.2 3.5z"/>
<path class="g15" d="M813.0 580.4l4.2-2.3l7.3-19.2l-4.1 2.4z"/><path class="e" d="M817.2 578.1l7.3-19.2"/>
<path class="g13" d="M781.4 555.1l3.4-1.4l6.8-18.5l-3.3 1.5z"/>
<path class="g19" d="M688.0 602.8l4.1 0.1l7.9-16.6l-4.2 0z"/>
<path class="g26" d="M690.5 652.2l5.7 0.3l8.9-16.7l-5.7-0.1z"/><path class="e" d="M690.5 652.2l8.9-16.5"/>
<path class="g23" d="M647.3 652.0l5.7-0.1l8.9-15.8l-5.7 0.2z"/><path class="e" d="M653.0 651.9l8.9-15.8"/>
<path class="g17" d="M683.9 603.2l4.1-0.4l7.8-16.5l-4.1 0.5z"/>
<path class="g31" d="M741.7 626.7l5.5 3.5l8.5-17.8l-5.8-3.3z"/><path class="e" d="M747.2 630.2l8.5-17.8"/>
<path class="g23" d="M692.1 602.9l3.4 1.2l7.9-16.7l-3.4-1.1z"/><path class="e" d="M695.5 604.1l7.9-16.7"/>
<path class="g23" d="M649.0 602.3l2.9 1.5l7.9-15.7l-3-1.5z"/><path class="e" d="M651.9 603.8l7.9-15.7"/>
<path class="g19" d="M752.9 629.7l5.1-1.5l8.4-18l-5.1 1.6z"/><path class="e" d="M758.0 628.2l8.4-18"/>
<path class="g20" d="M609.2 600.4l-0.2 4.6l8-14.8l-0.1-4.6z"/>
<path class="g26" d="M601.5 625.1l1.4 4.8l8.5-14.8l-1.6-4.7z"/><path class="e" d="M602.9 629.9l8.5-14.8"/>
<path class="g11" d="M582.3 604.8l6.5-4l7.7-14.4l-6.2 4.1z"/>
<path class="g24" d="M565.8 600.2l0 4.8l8-13.9l-0.3-4.8z"/><path class="e" d="M565.8 605.0l8-13.9"/>
<path class="g10" d="M680.7 604.5l3.2-1.3l7.8-16.4l-3 1.4z"/><path class="e" d="M680.7 604.5l8-16.3"/>
<path class="g27" d="M794.9 554.1l5.7 3.1l6.9-18.8l-5.9-3z"/>
<path class="g9" d="M635.9 604.3l1.4-1.7l7.9-15.5l-1.3 1.8z"/><path class="e" d="M637.3 602.6l7.9-15.5"/>
<path class="g32" d="M800.8 579.3l7 2.5l7.4-19l-7.1-2.4z"/><path class="e" d="M807.8 581.8l7.4-19"/>
<path class="g25" d="M645.5 625.8l2.3 5.3l8.5-15.7l-2.6-5.2z"/>
<path class="g27" d="M531.6 576.8l4.2 2.3l7.4-13.3l-4.3-2.2z"/><path class="e" d="M531.6 576.8l7.3-13.2"/>
<path class="g27" d="M691.1 626.7l4 4.9l8.6-16.6l-4.3-4.9z"/>
<path class="g18" d="M575.6 576.4l-1.4 4.5l7.5-14.2l1.2-4.5z"/>
<path class="g22" d="M807.8 581.8l5.2-1.4l7.4-19.1l-5.2 1.5z"/><path class="e" d="M807.8 581.8l7.4-19"/>
<path class="g9" d="M779.7 557.1l1.7-2l6.9-18.4l-1.6 2z"/><path class="e" d="M779.7 557.1l7-18.4"/>
<path class="g25" d="M747.2 630.2l5.7-0.5l8.4-17.9l-5.6 0.6z"/><path class="e" d="M747.2 630.2l8.5-17.8"/>
<path class="g22" d="M695.5 604.1l1.1 1.7l8-16.6l-1.2-1.8z"/><path class="e" d="M695.5 604.1l7.9-16.7"/>
<path class="g10" d="M666.0 631.9l3.7-5l8.3-16.1l-3.4 5.1z"/>
<path class="g21" d="M651.9 603.8l0.5 1.9l8.1-15.8l-0.7-1.8z"/><path class="e" d="M651.9 603.8l7.9-15.7"/>
<path class="g18" d="M738.1 581.6l4-0.5l7.5-17.6l-4 0.5z"/>
<path class="g13" d="M540.9 580.6l7.1-2.5l7.4-13.5l-6.9 2.6z"/><path class="e" d="M540.9 580.6l7.6-13.4"/>
<path class="g23" d="M742.1 581.1l3.8 0.7l7.5-17.7l-3.8-0.6z"/><path class="e" d="M745.9 581.8l7.5-17.7"/>
<path class="g12" d="M613.7 631.7l5.4-3.6l8.4-15.1l-5.1 3.7z"/><path class="e" d="M613.7 631.7l8.7-15"/>
<path class="g25" d="M535.8 579.1l5.1 1.5l7.6-13.4l-5.3-1.4z"/><path class="e" d="M540.9 580.6l7.6-13.4"/>
<path class="g15" d="M734.2 582.5l3.9-0.9l7.5-17.6l-3.8 1z"/>
<path class="g19" d="M606.6 580.5l4 0.5l7.6-14.9l-4.1-0.4z"/>
<path class="g29" d="M744.1 604.8l5.8 4.3l8.2-17.8l-6.1-4.2z"/>
<path class="g13" d="M602.8 581.1l3.8-0.6l7.5-14.8l-3.7 0.7z"/><path class="e" d="M602.8 581.1l7.6-14.7"/>
<path class="g24" d="M745.9 581.8l1.8 1.6l7.5-17.8l-1.8-1.5z"/><path class="e" d="M745.9 581.8l7.5-17.7"/>
<path class="g28" d="M602.9 629.9l5.2 1.4l8.6-14.9l-5.3-1.3z"/><path class="e" d="M602.9 629.9l8.5-14.8"/>
<path class="g9" d="M632.5 608.4l3.4-4.1l8-15.4l-3.2 4.2z"/>
<path class="g20" d="M610.6 581.0l3.9 0.9l7.6-14.9l-3.9-0.9z"/>
<path class="g15" d="M570.2 556.5l3.9-0.3l7-14.1l-3.8 0.4z"/><path class="e" d="M570.2 556.5l7.1-14"/>
<path class="g30" d="M800.6 557.2l7.5 3.2l7.2-19l-7.8-3z"/>
<path class="g20" d="M542.0 553.5l-2.1 5.4l7.2-13.4l1.8-5.4z"/>
<path class="g28" d="M565.8 605.0l4.8 1.9l8.1-14l-4.9-1.8z"/><path class="e" d="M565.8 605.0l8-13.9"/>
<path class="g19" d="M574.1 556.2l3.9 0.9l7.1-14.2l-4-0.8z"/>
<path class="g13" d="M576.1 607.8l6.2-3l8-14.3l-6 3.2z"/><path class="e" d="M576.1 607.8l8.2-14.1"/>
<path class="g9" d="M601.0 582.7l1.8-1.6l7.6-14.7l-1.7 1.6z"/><path class="e" d="M602.8 581.1l7.6-14.7"/>
<path class="g24" d="M608.1 631.3l5.6 0.4l8.7-15l-5.7-0.3z"/><path class="e" d="M613.7 631.7l8.7-15"/>
<path class="g10" d="M731.7 584.2l2.5-1.7l7.6-17.5l-2.4 1.8z"/><path class="e" d="M731.7 584.2l7.7-17.4"/>
<path class="g11" d="M710.6 634.9l2.6-4.5l8.5-17.1l-2.3 4.6z"/><path class="e" d="M710.6 634.9l8.8-17"/>
<path class="g10" d="M568.0 557.9l2.2-1.4l7.1-14l-2.2 1.4z"/><path class="e" d="M570.2 556.5l7.1-14"/>
<path class="g24" d="M696.6 605.8l2.8 4.3l8.2-16.7l-3-4.2z"/>
<path class="g14" d="M820.4 561.3l4.1-2.4l7-19.3l-4 2.4z"/><path class="e" d="M824.5 558.9l7-19.3"/>
<path class="g22" d="M614.5 581.9l2.4 1.8l7.7-15l-2.5-1.7z"/><path class="e" d="M616.9 583.7l7.7-15"/>
<path class="g20" d="M578.0 557.1l3.5 1.3l7.2-14.3l-3.6-1.2z"/>
<path class="g22" d="M652.4 605.7l1.3 4.5l8.3-15.8l-1.5-4.5z"/>
<path class="g24" d="M609.0 605.0l0.8 5.4l8.3-14.8l-1.1-5.4z"/>
<path class="g25" d="M570.6 606.9l5.5 0.9l8.2-14.1l-5.6-0.8z"/><path class="e" d="M576.1 607.8l8.2-14.1"/>
<path class="g30" d="M695.1 631.6l4.3 4.1l8.8-16.8l-4.5-3.9z"/><path class="e" d="M699.4 635.7l8.8-16.8"/>
<path class="g28" d="M647.8 631.1l2.8 4.5l8.9-15.8l-3.2-4.4z"/><path class="e" d="M650.6 635.6l8.9-15.8"/>
<path class="g26" d="M747.7 583.4l4.3 3.7l7.8-17.8l-4.6-3.7z"/>
<path class="g22" d="M574.2 580.9l-0.7 5.4l7.9-14.1l0.3-5.5z"/>
<path class="g11" d="M661.9 636.1l4.1-4.2l8.6-16l-3.8 4.2z"/><path class="e" d="M661.9 636.1l8.9-16"/>
<path class="g32" d="M808.1 560.4l7.1 2.4l7.3-19.2l-7.2-2.2z"/><path class="e" d="M815.2 562.8l7.3-19.2"/>
<path class="g21" d="M581.5 558.4l1.9 2l7.3-14.3l-2-2z"/><path class="e" d="M583.4 560.4l7.3-14.3"/>
<path class="g21" d="M815.2 562.8l5.2-1.5l7.1-19.3l-5 1.6z"/><path class="e" d="M815.2 562.8l7.3-19.2"/>
<path class="g32" d="M749.9 609.1l5.8 3.3l8.4-17.9l-6-3.2z"/><path class="e" d="M755.7 612.4l8.4-17.9"/>
<path class="g19" d="M616.9 583.7l0 1.9l7.8-15l-0.1-1.9z"/><path class="e" d="M616.9 583.7l7.7-15"/>
<path class="g10" d="M562.6 561.1l5.4-3.2l7.1-14l-5.2 3.4z"/>
<path class="g18" d="M761.3 611.8l5.1-1.6l8.2-18.2l-4.9 1.7z"/><path class="e" d="M766.4 610.2l8.2-18.2"/>
<path class="g10" d="M596.5 586.4l4.5-3.7l7.7-14.7l-4.3 3.8z"/>
<path class="g21" d="M705.1 635.8l5.5-0.9l8.8-17l-5.4 1z"/><path class="e" d="M710.6 634.9l8.8-17"/>
<path class="g26" d="M699.4 635.7l5.7 0.1l8.9-16.9l-5.8 0z"/><path class="e" d="M699.4 635.7l8.8-16.8"/>
<path class="g19" d="M695.8 586.3l4.2 0l7.8-16.7l-4.2 0z"/>
<path class="g17" d="M691.7 586.8l4.1-0.5l7.8-16.7l-4 0.6z"/>
<path class="g18" d="M648.6 586.1l4.2 0l7.8-15.8l-4.2 0.1z"/>
<path class="g11" d="M627.5 613.0l5-4.6l8.2-15.3l-4.7 4.7z"/>
<path class="g24" d="M755.7 612.4l5.6-0.6l8.4-18.1l-5.6 0.8z"/><path class="e" d="M755.7 612.4l8.4-17.9"/>
<path class="g20" d="M652.8 586.1l4 0.5l7.9-15.8l-4.1-0.5z"/>
<path class="g23" d="M700.0 586.3l3.4 1.1l7.8-16.8l-3.4-1z"/><path class="e" d="M703.4 587.4l7.8-16.8"/>
<path class="g27" d="M650.6 635.6l5.6 0.7l8.9-15.8l-5.6-0.7z"/><path class="e" d="M650.6 635.6l8.9-15.8"/>
<path class="g12" d="M645.2 587.1l3.4-1l7.8-15.7l-3.3 1.1z"/><path class="e" d="M645.2 587.1l7.9-15.6"/>
<path class="g17" d="M583.4 560.4l-0.5 1.8l7.4-14.3l0.4-1.8z"/><path class="e" d="M583.4 560.4l7.3-14.3"/>
<path class="g23" d="M656.2 636.3l5.7-0.2l8.9-16l-5.7 0.4z"/><path class="e" d="M661.9 636.1l8.9-16"/>
<path class="g10" d="M688.7 588.2l3-1.4l7.9-16.6l-3 1.5z"/><path class="e" d="M688.7 588.2l7.9-16.5"/>
<path class="g23" d="M539.9 558.9l-1 4.7l7.5-13.3l0.7-4.8z"/><path class="e" d="M538.9 563.6l7.5-13.3"/>
<path class="g23" d="M656.8 586.6l3 1.5l8-16l-3.1-1.3z"/><path class="e" d="M659.8 588.1l8-16"/>
<path class="g28" d="M699.4 610.1l4.3 4.9l8.5-16.9l-4.6-4.7z"/>
<path class="g23" d="M749.6 563.5l3.8 0.6l7.4-17.9l-3.8-0.5z"/><path class="e" d="M753.4 564.1l7.4-17.9"/>
<path class="g18" d="M745.6 564.0l4-0.5l7.4-17.8l-4 0.6z"/>
<path class="g23" d="M703.4 587.4l1.2 1.8l8-16.9l-1.4-1.7z"/><path class="e" d="M703.4 587.4l7.8-16.8"/>
<path class="g26" d="M653.7 610.2l2.6 5.2l8.7-15.8l-3-5.2z"/>
<path class="g9" d="M643.9 588.9l1.3-1.8l7.9-15.6l-1.2 1.8z"/><path class="e" d="M645.2 587.1l7.9-15.6"/>
<path class="g29" d="M752.0 587.1l6.1 4.2l8.1-18l-6.4-4z"/>
<path class="g21" d="M616.9 585.6l0.1 4.6l8.1-15l-0.4-4.6z"/>
<path class="g15" d="M741.8 565.0l3.8-1l7.4-17.7l-3.8 1.1z"/>
<path class="g10" d="M674.6 615.9l3.4-5.1l8.3-16.3l-3.1 5.2z"/>
<path class="g24" d="M753.4 564.1l1.8 1.5l7.5-17.9l-1.9-1.5z"/><path class="e" d="M753.4 564.1l7.4-17.9"/>
<path class="g12" d="M555.4 564.6l7.2-3.5l7.3-13.8l-7 3.6z"/>
<path class="g27" d="M609.8 610.4l1.6 4.7l8.6-14.9l-1.9-4.6z"/><path class="e" d="M611.4 615.1l8.6-14.9"/>
<path class="g21" d="M659.8 588.1l0.7 1.8l8-15.9l-0.7-1.9z"/><path class="e" d="M659.8 588.1l8-16"/>
<path class="g11" d="M590.3 590.5l6.2-4.1l7.9-14.6l-5.9 4.2z"/>
<path class="g25" d="M573.5 586.3l0.3 4.8l8.2-14.1l-0.6-4.8z"/><path class="e" d="M573.8 591.1l8.2-14.1"/>
<path class="g10" d="M739.4 566.8l2.4-1.8l7.4-17.6l-2.3 1.8z"/><path class="e" d="M739.4 566.8l7.5-17.6"/>
<path class="g19" d="M582.9 562.2l-1.2 4.5l7.7-14.2l0.9-4.6z"/>
<path class="g12" d="M622.4 616.7l5.1-3.7l8.5-15.2l-4.9 3.8z"/><path class="e" d="M622.4 616.7l8.7-15.1"/>
<path class="g27" d="M538.9 563.6l4.3 2.2l7.7-13.4l-4.5-2.1z"/><path class="e" d="M538.9 563.6l7.5-13.3"/>
<path class="g24" d="M704.6 589.2l3 4.2l8.3-17l-3.3-4.1z"/>
<path class="g19" d="M614.1 565.7l4.1 0.4l7.6-15l-4.1-0.3z"/>
<path class="g26" d="M755.2 565.6l4.6 3.7l7.8-18l-4.9-3.6z"/>
<path class="g9" d="M640.7 593.1l3.2-4.2l8-15.6l-2.9 4.2z"/>
<path class="g13" d="M610.4 566.4l3.7-0.7l7.6-14.9l-3.7 0.7z"/><path class="e" d="M610.4 566.4l7.6-14.9"/>
<path class="g28" d="M611.4 615.1l5.3 1.3l8.7-15l-5.4-1.2z"/><path class="e" d="M611.4 615.1l8.6-14.9"/>
<path class="g20" d="M618.2 566.1l3.9 0.9l7.6-15.1l-3.9-0.8z"/>
<path class="g13" d="M548.5 567.2l6.9-2.6l7.5-13.7l-6.7 2.7z"/><path class="e" d="M548.5 567.2l7.7-13.6"/>
<path class="g18" d="M769.7 593.7l4.9-1.7l8.1-18.3l-4.8 1.8z"/><path class="e" d="M774.6 592.0l8.1-18.3"/>
<path class="g30" d="M703.7 615.0l4.5 3.9l8.8-16.9l-4.8-3.9z"/><path class="e" d="M708.2 618.9l8.8-16.9"/>
<path class="g32" d="M758.1 591.3l6 3.2l8.3-18.1l-6.2-3.1z"/><path class="e" d="M764.1 594.5l8.3-18.1"/>
<path class="g23" d="M660.5 589.9l1.5 4.5l8.4-16l-1.9-4.4z"/>
<path class="g24" d="M616.7 616.4l5.7 0.3l8.7-15.1l-5.7-0.2z"/><path class="e" d="M622.4 616.7l8.7-15.1"/>
<path class="g25" d="M543.2 565.8l5.3 1.4l7.7-13.6l-5.3-1.2z"/><path class="e" d="M548.5 567.2l7.7-13.6"/>
<path class="g9" d="M608.7 568.0l1.7-1.6l7.6-14.9l-1.6 1.7z"/><path class="e" d="M610.4 566.4l7.6-14.9"/>
<path class="g13" d="M584.3 593.7l6-3.2l8.2-14.5l-5.9 3.4z"/><path class="e" d="M584.3 593.7l8.3-14.3"/>
<path class="g28" d="M573.8 591.1l4.9 1.8l8.3-14.2l-5-1.7z"/><path class="e" d="M573.8 591.1l8.2-14.1"/>
<path class="g22" d="M622.1 567.0l2.5 1.7l7.8-15.2l-2.7-1.6z"/><path class="e" d="M624.6 568.7l7.8-15.2"/>
<path class="g29" d="M656.3 615.4l3.2 4.4l8.9-15.9l-3.4-4.3z"/><path class="e" d="M659.5 619.8l8.9-15.9"/>
<path class="g24" d="M764.1 594.5l5.6-0.8l8.2-18.2l-5.5 0.9z"/><path class="e" d="M764.1 594.5l8.3-18.1"/>
<path class="g21" d="M714.0 618.9l5.4-1l8.7-17.2l-5.3 1.2z"/><path class="e" d="M719.4 617.9l8.7-17.2"/>
<path class="g11" d="M670.8 620.1l3.8-4.2l8.6-16.2l-3.5 4.3z"/><path class="e" d="M670.8 620.1l8.9-16.1"/>
<path class="g24" d="M617.0 590.2l1.1 5.4l8.4-15.1l-1.4-5.3z"/>
<path class="g26" d="M708.2 618.9l5.8 0l8.8-17l-5.8 0.1z"/><path class="e" d="M708.2 618.9l8.8-16.9"/>
<path class="g19" d="M703.6 569.6l4.2 0l7.7-16.9l-4.1 0.1z"/>
<path class="g25" d="M578.7 592.9l5.6 0.8l8.3-14.3l-5.6-0.7z"/><path class="e" d="M584.3 593.7l8.3-14.3"/>
<path class="g16" d="M699.6 570.2l4-0.6l7.8-16.8l-4 0.6z"/>
<path class="g23" d="M707.8 569.6l3.4 1l7.9-17l-3.6-0.9z"/><path class="e" d="M711.2 570.6l7.9-17"/>
<path class="g19" d="M624.6 568.7l0.1 1.9l7.9-15.2l-0.2-1.9z"/><path class="e" d="M624.6 568.7l7.8-15.2"/>
<path class="g29" d="M759.8 569.3l6.4 4l7.9-18.2l-6.5-3.8z"/>
<path class="g22" d="M581.7 566.7l-0.3 5.5l8-14.3l0-5.4z"/>
<path class="g18" d="M656.4 570.4l4.2-0.1l7.8-15.9l-4.1 0.2z"/>
<path class="g10" d="M604.4 571.8l4.3-3.8l7.7-14.8l-4 3.9z"/>
<path class="g28" d="M707.6 593.4l4.6 4.7l8.5-17l-4.8-4.7z"/>
<path class="g20" d="M660.6 570.3l4.1 0.5l7.9-16.1l-4.2-0.3z"/>
<path class="g10" d="M696.6 571.7l3-1.5l7.8-16.8l-2.9 1.6z"/><path class="e" d="M696.6 571.7l7.9-16.7"/>
<path class="g27" d="M659.5 619.8l5.6 0.7l8.9-16l-5.6-0.6z"/><path class="e" d="M659.5 619.8l8.9-15.9"/>
<path class="g23" d="M665.1 620.5l5.7-0.4l8.9-16.1l-5.7 0.5z"/><path class="e" d="M670.8 620.1l8.9-16.1"/>
<path class="g23" d="M711.2 570.6l1.4 1.7l7.9-17l-1.4-1.7z"/><path class="e" d="M711.2 570.6l7.9-17"/>
<path class="g11" d="M636.0 597.8l4.7-4.7l8.3-15.6l-4.4 4.8z"/>
<path class="g11" d="M653.1 571.5l3.3-1.1l7.9-15.8l-3.3 1.2z"/><path class="e" d="M653.1 571.5l7.9-15.7"/>
<path class="g23" d="M664.7 570.8l3.1 1.3l7.9-16l-3.1-1.4z"/><path class="e" d="M667.8 572.1l7.9-16"/>
<path class="g10" d="M683.2 599.7l3.1-5.2l8.3-16.5l-2.7 5.2z"/>
<path class="g26" d="M662.0 594.4l3 5.2l8.6-16.1l-3.2-5.1z"/>
<path class="g9" d="M651.9 573.3l1.2-1.8l7.9-15.7l-1.1 1.8z"/><path class="e" d="M653.1 571.5l7.9-15.7"/>
<path class="g21" d="M667.8 572.1l0.7 1.9l8.1-16.1l-0.9-1.8z"/><path class="e" d="M667.8 572.1l7.9-16"/>
<path class="g21" d="M624.7 570.6l0.4 4.6l8.1-15.2l-0.6-4.6z"/>
<path class="g17" d="M777.9 575.5l4.8-1.8l8-18.5l-4.7 1.9z"/><path class="e" d="M782.7 573.7l8-18.5"/>
<path class="g27" d="M618.1 595.6l1.9 4.6l8.7-15l-2.2-4.7z"/><path class="e" d="M620.0 600.2l8.7-15"/>
<path class="g32" d="M766.2 573.3l6.2 3.1l8.1-18.3l-6.4-3z"/><path class="e" d="M772.4 576.4l8.1-18.3"/>
<path class="g25" d="M712.6 572.3l3.3 4.1l8.1-17l-3.5-4.1z"/>
<path class="g11" d="M598.5 576.0l5.9-4.2l8-14.7l-5.7 4.3z"/>
<path class="g23" d="M772.4 576.4l5.5-0.9l8.1-18.4l-5.5 1z"/><path class="e" d="M772.4 576.4l8.1-18.3"/>
<path class="g31" d="M712.2 598.1l4.8 3.9l8.8-17.1l-5.1-3.8z"/><path class="e" d="M717.0 602.0l8.8-17.1"/>
<path class="g12" d="M631.1 601.6l4.9-3.8l8.6-15.5l-4.7 4z"/><path class="e" d="M631.1 601.6l8.8-15.3"/>
<path class="g25" d="M581.4 572.2l0.6 4.8l8.3-14.3l-0.9-4.8z"/><path class="e" d="M582.0 577.0l8.3-14.3"/>
<path class="g9" d="M649.0 577.5l2.9-4.2l8-15.7l-2.6 4.3z"/>
<path class="g20" d="M722.8 601.9l5.3-1.2l8.7-17.3l-5.3 1.2z"/><path class="e" d="M728.1 600.7l8.7-17.3"/>
<path class="g23" d="M668.5 574.0l1.9 4.4l8.3-16.1l-2.1-4.4z"/>
<path class="g28" d="M620.0 600.2l5.4 1.2l8.8-15.2l-5.5-1z"/><path class="e" d="M620.0 600.2l8.7-15"/>
<path class="g26" d="M717.0 602.0l5.8-0.1l8.7-17.3l-5.7 0.3z"/><path class="e" d="M717.0 602.0l8.8-17.1"/>
<path class="g11" d="M679.7 604.0l3.5-4.3l8.7-16.5l-3.3 4.4z"/><path class="e" d="M679.7 604.0l8.9-16.4"/>
<path class="g29" d="M665.0 599.6l3.4 4.3l8.9-16.1l-3.7-4.3z"/><path class="e" d="M668.4 603.9l8.9-16.1"/>
<path class="g24" d="M625.4 601.4l5.7 0.2l8.8-15.3l-5.7-0.1z"/><path class="e" d="M631.1 601.6l8.8-15.3"/>
<path class="g28" d="M715.9 576.4l4.8 4.7l8.5-17.2l-5.2-4.5z"/>
<path class="g24" d="M625.1 575.2l1.4 5.3l8.5-15.2l-1.8-5.3z"/>
<path class="g12" d="M592.6 579.4l5.9-3.4l8.2-14.6l-5.7 3.5z"/><path class="e" d="M592.6 579.4l8.4-14.5"/>
<path class="g28" d="M582.0 577.0l5 1.7l8.4-14.4l-5.1-1.6z"/><path class="e" d="M582.0 577.0l8.3-14.3"/>
<path class="g22" d="M674.0 604.5l5.7-0.5l8.9-16.4l-5.6 0.6z"/><path class="e" d="M679.7 604.0l8.9-16.4"/>
<path class="g27" d="M668.4 603.9l5.6 0.6l9-16.3l-5.7-0.4z"/><path class="e" d="M668.4 603.9l8.9-16.1"/>
<path class="g25" d="M587.0 578.7l5.6 0.7l8.4-14.5l-5.6-0.6z"/><path class="e" d="M592.6 579.4l8.4-14.5"/>
<path class="g11" d="M644.6 582.3l4.4-4.8l8.3-15.6l-4.1 4.8z"/>
<path class="g26" d="M670.4 578.4l3.2 5.1l8.6-16.2l-3.5-5z"/>
<path class="g31" d="M720.7 581.1l5.1 3.8l8.7-17.3l-5.3-3.7z"/><path class="e" d="M725.8 584.9l8.7-17.3"/>
<path class="g28" d="M626.5 580.5l2.2 4.7l8.8-15.3l-2.5-4.6z"/><path class="e" d="M628.7 585.2l8.8-15.3"/>
<path class="g20" d="M731.5 584.6l5.3-1.2l8.6-17.5l-5.2 1.3z"/><path class="e" d="M736.8 583.4l8.6-17.5"/>
<path class="g25" d="M725.8 584.9l5.7-0.3l8.7-17.4l-5.7 0.4z"/><path class="e" d="M725.8 584.9l8.7-17.3"/>
<path class="g12" d="M639.9 586.3l4.7-4l8.6-15.6l-4.5 4.1z"/><path class="e" d="M639.9 586.3l8.8-15.5"/>
<path class="g11" d="M688.6 587.6l3.3-4.4l8.6-16.5l-3 4.4z"/><path class="e" d="M688.6 587.6l8.9-16.5"/>
<path class="g29" d="M673.6 583.5l3.7 4.3l8.9-16.3l-4-4.2z"/><path class="e" d="M677.3 587.8l8.9-16.3"/>
<path class="g28" d="M628.7 585.2l5.5 1l8.8-15.4l-5.5-0.9z"/><path class="e" d="M628.7 585.2l8.8-15.3"/>
<path class="g24" d="M634.2 586.2l5.7 0.1l8.8-15.5l-5.7 0z"/><path class="e" d="M639.9 586.3l8.8-15.5"/>
<path class="g22" d="M683.0 588.2l5.6-0.6l8.9-16.5l-5.6 0.7z"/><path class="e" d="M688.6 587.6l8.9-16.5"/>
<path class="g27" d="M677.3 587.8l5.7 0.4l8.9-16.4l-5.7-0.3z"/><path class="e" d="M677.3 587.8l8.9-16.3"/>
</g>
<clipPath id="holec"><path d="M776.8 461.6L781.4 456.7L785.4 451.6L788.6 446.3L791.1 440.9L792.8 435.4L793.8 429.8L794.0 424.2L793.4 418.6L792.1 413.1L790.0 407.6L787.2 402.2L783.6 397.1L779.4 392.0L774.4 387.2L768.9 382.7L762.7 378.4L755.9 374.5L748.7 370.9L740.9 367.6L732.8 364.7L724.2 362.2L715.4 360.1L706.3 358.5L697.0 357.3L687.5 356.5L678.0 356.2L668.5 356.3L659.0 356.9L649.7 357.9L640.5 359.4L631.5 361.3L622.8 363.6L614.5 366.3L606.6 369.4L599.1 372.9L592.1 376.7L585.7 380.9L579.9 385.3L574.7 390.0L570.1 394.9L566.3 400.0L563.1 405.3L560.7 410.7L559.1 416.2L558.2 421.8L558.0 427.4L558.7 433.0L560.1 438.5L562.3 444.0L565.2 449.3L568.8 454.5L573.2 459.5L578.2 464.3L583.8 468.8L590.0 473.0L596.8 476.9L604.2 480.5L611.9 483.7L620.2 486.6L628.7 489.0L637.6 491.1L646.7 492.7L656.1 493.9L665.5 494.6L675.0 494.8L684.5 494.7L694.0 494.0L703.4 493.0L712.5 491.4L721.5 489.5L730.1 487.1L738.4 484.4L750.4 491.3L788.8 468.5z"/></clipPath>
<defs><path id="tf" d="M668.4 554.4L672.6 554.7L675.7 556.1L676.6 557.9L678.7 562.3L682.2 567.3L686.2 571.5L691.9 571.8L697.5 571.1L700.5 566.7L702.9 561.4L704.1 556.9L704.5 555.0L707.4 553.4L711.4 552.8L715.5 552.7L719.1 553.6L720.5 555.3L724.0 559.4L729.2 563.9L734.5 567.6L740.2 567.2L745.4 565.9L746.9 561.1L747.5 555.7L747.1 551.1L746.9 549.2L749.2 547.4L753.0 546.3L757.0 545.7L760.8 546.2L762.7 547.7L767.6 551.3L774.1 555.1L780.5 558.1L786.0 557.1L790.7 555.2L790.5 550.4L789.3 545.0L787.5 540.6L786.7 538.7L788.3 536.7L791.6 535.2L795.3 534.1L799.2 534.2L801.6 535.4L807.5 538.4L815.3 541.4L822.5 543.6L827.5 542.0L831.5 539.6L829.8 534.9L826.8 529.7L823.5 525.6L822.1 523.9L823.0 521.6L825.8 519.8L829.1 518.3L832.9 517.9L835.7 518.9L842.5 521.1L851.1 523.2L858.9 524.5L863.3 522.4L866.4 519.5L863.1 515.1L858.5 510.4L853.9 506.7L852.0 505.2L852.1 502.9L854.2 500.8L856.9 499.0L860.6 498.2L863.6 498.8L871.0 500.2L880.1 501.3L888.3 501.7L891.9 499.0L893.9 495.9L889.3 492.0L883.2 487.8L877.4 484.8L875.0 483.5L874.4 481.3L875.8 478.9L877.9 476.8L881.1 475.6L884.3 475.9L892.1 476.4L901.4 476.4L909.5 475.9L912.1 472.9L913.1 469.6L907.3 466.2L899.9 462.9L893.2 460.5L890.5 459.6L889.1 457.4L889.7 455.0L891.0 452.7L893.8 451.1L897.1 451.0L904.8 450.6L913.9 449.6L921.7 448.1L923.3 444.9L923.2 441.5L916.3 438.9L908.0 436.5L900.7 435.0L897.7 434.3L895.6 432.4L895.4 429.9L895.9 427.5L898.2 425.7L901.3 425.2L908.8 423.9L917.3 421.8L924.5 419.5L925.0 416.2L923.8 412.9L916.2 411.1L907.2 409.7L899.5 409.0L896.3 408.7L893.7 407.1L892.6 404.7L892.4 402.3L893.9 400.2L896.8 399.3L903.8 397.3L911.5 394.2L917.7 391.1L917.1 387.8L914.8 384.7L906.8 383.9L897.5 383.5L889.8 383.7L886.5 383.8L883.4 382.5L881.6 380.3L880.5 377.9L881.4 375.7L883.9 374.5L890.0 371.7L896.6 367.8L901.7 364.1L900.0 360.9L896.7 358.1L888.5 358.2L879.3 358.9L871.8 360.0L868.6 360.5L865.1 359.5L862.6 357.6L860.8 355.4L860.9 353.1L863.0 351.7L868.0 348.2L873.2 343.7L877.0 339.4L874.2 336.4L870.1 334.1L862.1 335.1L853.3 336.9L846.3 338.8L843.4 339.6L839.6 339.1L836.5 337.5L833.9 335.5L833.3 333.3L834.9 331.6L838.7 327.7L842.2 322.6L844.5 318.0L840.8 315.4L836.0 313.6L828.5 315.5L820.5 318.2L814.2 321.0L811.6 322.1L807.8 322.0L804.2 320.8L801.0 319.2L799.7 317.0L800.7 315.2L803.1 310.9L804.9 305.5L805.6 300.7L801.1 298.6L795.8 297.4L789.1 300.1L782.1 303.7L776.9 307.1L774.7 308.5L770.9 308.9L766.9 308.1L763.3 306.9L761.3 304.9L761.7 303.1L762.6 298.5L762.6 293.1L761.7 288.3L756.6 286.7L751.0 286.1L745.3 289.6L739.6 293.9L735.6 297.8L734.0 299.5L730.3 300.2L726.2 299.9L722.3 299.1L719.6 297.5L719.4 295.6L718.8 291.0L717.0 285.7L714.5 281.1L709.0 280.2L703.3 280.2L698.8 284.3L694.7 289.1L692.1 293.4L691.0 295.2L687.7 296.4L683.6 296.6L679.4 296.3L676.3 294.9L675.4 293.1L673.3 288.7L669.8 283.7L665.8 279.5L660.1 279.2L654.5 279.9L651.5 284.3L649.1 289.6L647.9 294.1L647.5 296.0L644.6 297.6L640.6 298.2L636.5 298.3L632.9 297.4L631.5 295.7L628.0 291.6L622.8 287.1L617.5 283.4L611.8 283.8L606.6 285.1L605.1 289.9L604.5 295.3L604.9 299.9L605.1 301.8L602.8 303.6L599.0 304.7L595.0 305.3L591.2 304.8L589.3 303.3L584.4 299.7L577.9 295.9L571.5 292.9L566.0 293.9L561.3 295.8L561.5 300.6L562.7 306.0L564.5 310.4L565.3 312.3L563.7 314.3L560.4 315.8L556.7 316.9L552.8 316.8L550.4 315.6L544.5 312.6L536.7 309.6L529.5 307.4L524.5 309.0L520.5 311.4L522.2 316.1L525.2 321.3L528.5 325.4L529.9 327.1L529.0 329.4L526.2 331.2L522.9 332.7L519.1 333.1L516.3 332.1L509.5 329.9L500.9 327.8L493.1 326.5L488.7 328.6L485.6 331.5L488.9 335.9L493.5 340.6L498.1 344.3L500.0 345.8L499.9 348.1L497.8 350.2L495.1 352.0L491.4 352.8L488.4 352.2L481.0 350.8L471.9 349.7L463.7 349.3L460.1 352.0L458.1 355.1L462.7 359.0L468.8 363.2L474.6 366.2L477.0 367.5L477.6 369.7L476.2 372.1L474.1 374.2L470.9 375.4L467.7 375.1L459.9 374.6L450.6 374.6L442.5 375.1L439.9 378.1L438.9 381.4L444.7 384.8L452.1 388.1L458.8 390.5L461.5 391.4L462.9 393.6L462.3 396.0L461.0 398.3L458.2 399.9L454.9 400.0L447.2 400.4L438.1 401.4L430.3 402.9L428.7 406.1L428.8 409.5L435.7 412.1L444.0 414.5L451.3 416.0L454.3 416.7L456.4 418.6L456.6 421.1L456.1 423.5L453.8 425.3L450.7 425.8L443.2 427.1L434.7 429.2L427.5 431.5L427.0 434.8L428.2 438.1L435.8 439.9L444.8 441.3L452.5 442.0L455.7 442.3L458.3 443.9L459.4 446.3L459.6 448.7L458.1 450.8L455.2 451.7L448.2 453.7L440.5 456.8L434.3 459.9L434.9 463.2L437.2 466.3L445.2 467.1L454.5 467.5L462.2 467.3L465.5 467.2L468.6 468.5L470.4 470.7L471.5 473.1L470.6 475.3L468.1 476.5L462.0 479.3L455.4 483.2L450.3 486.9L452.0 490.1L455.3 492.9L463.5 492.8L472.7 492.1L480.2 491.0L483.4 490.5L486.9 491.5L489.4 493.4L491.2 495.6L491.1 497.9L489.0 499.3L484.0 502.8L478.8 507.3L475.0 511.6L477.8 514.6L481.9 516.9L489.9 515.9L498.7 514.1L505.7 512.2L508.6 511.4L512.4 511.9L515.5 513.5L518.1 515.5L518.7 517.7L517.1 519.4L513.3 523.3L509.8 528.4L507.5 533.0L511.2 535.6L516.0 537.4L523.5 535.5L531.5 532.8L537.8 530.0L540.4 528.9L544.2 529.0L547.8 530.2L551.0 531.8L552.3 534.0L551.3 535.8L548.9 540.1L547.1 545.5L546.4 550.3L550.9 552.4L556.2 553.6L562.9 550.9L569.9 547.3L575.1 543.9L577.3 542.5L581.1 542.1L585.1 542.9L588.7 544.1L590.7 546.1L590.3 547.9L589.4 552.5L589.4 557.9L590.3 562.7L595.4 564.3L601.0 564.9L606.7 561.4L612.4 557.1L616.4 553.2L618.0 551.5L621.7 550.8L625.8 551.1L629.7 551.9L632.4 553.5L632.6 555.4L633.2 560.0L635.0 565.3L637.5 569.9L643.0 570.8L648.7 570.8L653.2 566.7L657.3 561.9L659.9 557.6L661.0 555.8L664.3 554.6z M776.8 461.6L781.4 456.7L785.4 451.6L788.6 446.3L791.1 440.9L792.8 435.4L793.8 429.8L794.0 424.2L793.4 418.6L792.1 413.1L790.0 407.6L787.2 402.2L783.6 397.1L779.4 392.0L774.4 387.2L768.9 382.7L762.7 378.4L755.9 374.5L748.7 370.9L740.9 367.6L732.8 364.7L724.2 362.2L715.4 360.1L706.3 358.5L697.0 357.3L687.5 356.5L678.0 356.2L668.5 356.3L659.0 356.9L649.7 357.9L640.5 359.4L631.5 361.3L622.8 363.6L614.5 366.3L606.6 369.4L599.1 372.9L592.1 376.7L585.7 380.9L579.9 385.3L574.7 390.0L570.1 394.9L566.3 400.0L563.1 405.3L560.7 410.7L559.1 416.2L558.2 421.8L558.0 427.4L558.7 433.0L560.1 438.5L562.3 444.0L565.2 449.3L568.8 454.5L573.2 459.5L578.2 464.3L583.8 468.8L590.0 473.0L596.8 476.9L604.2 480.5L611.9 483.7L620.2 486.6L628.7 489.0L637.6 491.1L646.7 492.7L656.1 493.9L665.5 494.6L675.0 494.8L684.5 494.7L694.0 494.0L703.4 493.0L712.5 491.4L721.5 489.5L730.1 487.1L738.4 484.4L750.4 491.3L788.8 468.5z"/><clipPath id="tfc"><use href="#tf" clip-rule="evenodd"/></clipPath><radialGradient id="shg"><stop offset="0" stop-color="#000" stop-opacity=".13"/><stop offset=".5" stop-color="#000" stop-opacity=".07"/><stop offset="1" stop-color="#000" stop-opacity="0"/></radialGradient></defs>
<use href="#tf" fill="url(#topg)" fill-rule="evenodd" stroke="#3a3a3a" stroke-width=".5"/>
<ellipse cx="800" cy="392" rx="75" ry="80" fill="url(#shg)" clip-path="url(#tfc)"/>
<g clip-path="url(#holec)"><rect x="528.0" y="351.15139999999997" width="296.0" height="178.6972" fill="url(#boreg)"/>
<path d="M776.8 461.6L788.8 468.5L788.8 565.5L776.8 558.6z" fill="#8f8f8f"/>
<path d="M776.8 461.6L776.8 558.6" stroke="#333" stroke-width=".6"/>
<path d="M776.8 558.6L781.4 553.7L785.4 548.6L788.6 543.3L791.1 537.9L792.8 532.4L793.8 526.8L794.0 521.2L793.4 515.6L792.1 510.1L790.0 504.6L787.2 499.2L783.6 494.1L779.4 489.0L774.4 484.2L768.9 479.7L762.7 475.4L755.9 471.5L748.7 467.9L740.9 464.6L732.8 461.7L724.2 459.2L715.4 457.1L706.3 455.5L697.0 454.3L687.5 453.5L678.0 453.2L668.5 453.3L659.0 453.9L649.7 454.9L640.5 456.4L631.5 458.3L622.8 460.6L614.5 463.3L606.6 466.4L599.1 469.9L592.1 473.7L585.7 477.9L579.9 482.3L574.7 487.0L570.1 491.9L566.3 497.0L563.1 502.3L560.7 507.7L559.1 513.2L558.2 518.8L558.0 524.4L558.7 530.0L560.1 535.5L562.3 541.0L565.2 546.3L568.8 551.5L573.2 556.5L578.2 561.3L583.8 565.8L590.0 570.0L596.8 573.9L604.2 577.5L611.9 580.7L620.2 583.6L628.7 586.0L637.6 588.1L646.7 589.7L656.1 590.9L665.5 591.6L675.0 591.8L684.5 591.7L694.0 591.0L703.4 590.0L712.5 588.4L721.5 586.5L730.1 584.1L738.4 581.4L750.4 588.3L788.8 565.5z" fill="#202022"/></g>
<path d="M776.8 461.6L781.4 456.7L785.4 451.6L788.6 446.3L791.1 440.9L792.8 435.4L793.8 429.8L794.0 424.2L793.4 418.6L792.1 413.1L790.0 407.6L787.2 402.2L783.6 397.1L779.4 392.0L774.4 387.2L768.9 382.7L762.7 378.4L755.9 374.5L748.7 370.9L740.9 367.6L732.8 364.7L724.2 362.2L715.4 360.1L706.3 358.5L697.0 357.3L687.5 356.5L678.0 356.2L668.5 356.3L659.0 356.9L649.7 357.9L640.5 359.4L631.5 361.3L622.8 363.6L614.5 366.3L606.6 369.4L599.1 372.9L592.1 376.7L585.7 380.9L579.9 385.3L574.7 390.0L570.1 394.9L566.3 400.0L563.1 405.3L560.7 410.7L559.1 416.2L558.2 421.8L558.0 427.4L558.7 433.0L560.1 438.5L562.3 444.0L565.2 449.3L568.8 454.5L573.2 459.5L578.2 464.3L583.8 468.8L590.0 473.0L596.8 476.9L604.2 480.5L611.9 483.7L620.2 486.6L628.7 489.0L637.6 491.1L646.7 492.7L656.1 493.9L665.5 494.6L675.0 494.8L684.5 494.7L694.0 494.0L703.4 493.0L712.5 491.4L721.5 489.5L730.1 487.1L738.4 484.4L750.4 491.3L788.8 468.5z" fill="none" stroke="#2a2a2a" stroke-width="1" stroke-linejoin="round"/>
<path d="M774.9 461.7L779.6 456.9L783.5 451.8L786.8 446.6L789.4 441.3L791.2 435.8L792.2 430.3L792.5 424.8L792.0 419.2L790.8 413.7L788.8 408.3L786.0 403.0L782.6 397.8L778.4 392.9L773.6 388.1L768.1 383.6L762.0 379.3L755.4 375.4L748.2 371.8L740.6 368.5L732.5 365.6L724.1 363.1L715.3 361.1L706.3 359.4L697.1 358.2L687.8 357.4L678.3 357.0L668.9 357.2L659.5 357.7L650.2 358.7L641.1 360.2L632.2 362.1L623.6 364.3L615.4 367.0L607.5 370.1L600.1 373.6L593.2 377.3L586.8 381.4L581.1 385.8L575.9 390.5L571.4 395.4L567.6 400.4L564.5 405.7L562.1 411.0L560.5 416.5L559.6 422.0L559.6 427.6L560.2 433.1L561.7 438.6L563.8 444.0L566.8 449.3L570.4 454.4L574.7 459.3L579.7 464.0L585.3 468.5L591.6 472.7L598.3 476.5L605.6 480.1L613.4 483.2L621.5 486.0L630.1 488.4L638.9 490.4L647.9 492.0L657.2 493.1L666.6 493.7L676.0 494.0L685.4 493.7L694.8 493.1L704.0 492.0L713.1 490.4L721.9 488.4L730.4 486.0L738.6 483.2L750.4 490.1L786.7 468.5z" fill="none" stroke="#e8222a" stroke-width="1.100" stroke-linejoin="round"/>
<path d="M677.0 424.0 L596 470.500M677.0 424.0 L745.500 467.500M677.0 424.0 L677 345" stroke="#2a2a2a" stroke-width=".8" fill="none"/>
<path d="M593.500 472.600l10.500-8.600 2.400 4.200z" fill="#e01b24"/>
<path d="M750 470.400l-13.500-4 2.600-4.200z" fill="#17b085"/>
<path d="M677 338.500l2 7.500h-4z" fill="#1d4fe0"/><rect x="676" y="345" width="2" height="5" fill="#1d4fe0"/>
<path d="M677 404.500l2.500 7.500h-1.300v9h-2.400v-9h-1.300z" fill="#1d3fe0"/>
<path d="M677 424l-9 5.200" stroke="#e01b24" stroke-width="2.200"/><path d="M662.500 432.600l7-6.400 2.400 4z" fill="#e01b24"/>
<path d="M677 424l9 5.200" stroke="#17b085" stroke-width="2.200"/><path d="M691.500 432.600l-7-6.400-2.400 4z" fill="#17b085"/>
<g transform="translate(677,424)"><circle r="3" fill="#fff"/><path d="M0 0V-3A3 3 0 0 1 3 0zM0 0V3A3 3 0 0 1 -3 0z" fill="#111"/></g>
<text x="682" y="442" style="font-size:8px" fill="#d8d8d8">G54</text>
<path d="M676 72V194.300L751 432L754 436M706.300 72L752.400 376L754 436" fill="none" stroke="#dc161e" stroke-width="1.400" stroke-dasharray="3.400 2.200"/>
<rect x="766.300" y="652" width="3.600" height="20" rx="1.500" fill="#b8742a"/><path d="M768.100 653v18" stroke="#e8b24a" stroke-width="1" stroke-dasharray="1.500 1.500"/>
<defs><linearGradient id="tg" x1="0" x2="1"><stop offset="0" stop-color="#9fb5b7"/><stop offset=".2" stop-color="#b1c7c8"/><stop offset=".55" stop-color="#a6bcbe"/><stop offset=".78" stop-color="#869a9c"/><stop offset="1" stop-color="#6f8183"/></linearGradient><linearGradient id="tg2" x1="0" x2="1"><stop offset="0" stop-color="#9db3b5"/><stop offset=".3" stop-color="#b4cacb"/><stop offset=".6" stop-color="#a3b9bb"/><stop offset="1" stop-color="#73868a"/></linearGradient></defs>
<rect x="766" y="464" width="4.400" height="14" fill="#c98a35"/><path d="M768.200 465v13" stroke="#f0d060" stroke-width="1" stroke-dasharray="2 1.500"/>
<path d="M753.800 443a14.400 8.400 0 0 0 28.800 0l-10.400 21.500a4 2.300 0 0 1-8 0z" fill="url(#tg2)" stroke="#2c2c2c" stroke-width=".6"/>
<path d="M753.800 372V443a14.400 8.400 0 0 0 28.800 0V372z" fill="url(#tg2)" stroke="#2c2c2c" stroke-width=".6"/>
<path d="M741 356v3.500a27.200 16 0 0 0 54.400 0V356z" fill="url(#tg)" stroke="#2c2c2c" stroke-width=".6"/>
<path d="M729.800 307V350a38.300 22.200 0 0 0 76.600 0V307z" fill="url(#tg)" stroke="#2c2c2c" stroke-width=".6"/>
<path d="M730.500 353.500a38 22 0 0 0 75.200 0" fill="none" stroke="#4a5658" stroke-width=".6"/>
<ellipse cx="768.100" cy="307" rx="38.300" ry="22.200" fill="#d4ebec" stroke="#2c2c2c" stroke-width=".6"/>
<circle cx="768.200" cy="479.500" r="1.800" fill="#fff" stroke="#555" stroke-width=".4"/>
<!--EXTRAS-->
</svg><!--VP1-->

<div id="p1" class="abs panel" style="left:5px;top:36px;width:291px;height:373px"></div>
<div class="abs" style="left:105px;top:40px;width:90px;height:25px;background:#1f1f21;border-radius:5px"></div>
<div class="t tab" style="left:24px;top:48px;width:60px;text-align:center">Model</div>
<div class="t tab" style="left:105px;top:48px;width:90px;text-align:center">Machining</div>
<div class="t tab" style="left:200px;top:48px;width:90px;text-align:center">Simulation</div>
<div class="abs inner" style="left:8px;top:71px;width:284px;height:335px"></div>
<!-- links row -->
<svg class="abs" style="left:18px;top:78px" width="270" height="20" viewBox="0 0 270 20">
 <circle cx="6" cy="5.2" r="3" fill="#f0f0f0"/><circle cx="6" cy="13.4" r="2.600" fill="none" stroke="#e0e0e0" stroke-width="1"/>
 <path d="M10 5.2h6.3v8.2H11" fill="none" stroke="#17b890" stroke-width="1.2"/><path d="M9.4 13.4l2.6-2.2v4.400z" fill="#17b890"/>
 <rect x="26.800" y="4.600" width="15" height="9" rx="4.500" fill="#179474"/><circle cx="37.300" cy="9.1" r="4.200" fill="#f4f4f4"/>
 <!-- gear -->
 <g transform="translate(202,9.300)" fill="#f2f2f2"><circle r="4.500"/><g id="gt"><rect x="-1.700" y="-6.300" width="3.400" height="12.600" rx=".6"/></g><use href="#gt" transform="rotate(60)"/><use href="#gt" transform="rotate(120)"/><circle r="2.300" fill="#272729"/></g>
 <!-- orange refresh -->
 <g transform="translate(228.600,9.300)" fill="none" stroke="#b9743c" stroke-width="1.200"><path d="M-4.600 -3a5.400 5.400 0 0 1 8.500-1.200M5 -1.500a5.400 5.400 0 0 1-1.500 5.500M1.500 5.200a5.400 5.400 0 0 1-6.700-3.400"/><circle r="2.800"/><rect x="-1.100" y="-1.100" width="2.200" height="2.200" fill="#b9743c" stroke="none"/><path d="M-5.800 -5.600l.6 3.400 2.800-1.800z" fill="#b9743c" stroke="none"/><circle cx="3.600" cy="3.800" r="1" fill="#f0c020" stroke="none"/></g>
 <!-- play -->
 <path d="M250.300 3.800v11l9.600-5.500z" fill="#12614b" stroke="#17a981" stroke-width="1.400" stroke-linejoin="round"/>
</svg>
<div class="t" style="left:62.5px;top:82.500px;font-size:9.800px;color:#f0f0f0;transform:scaleY(1.12)">Links</div>
<svg class="abs" style="left:23px;top:108px" width="12" height="10" viewBox="0 0 12 10"><path d="M1.200 2.500l4.600 4.800 4.600-4.800" fill="none" stroke="#d8d8d8" stroke-width="1.100"/></svg>
<div class="t" style="left:40.300px;top:107.500px;font-size:11.100px;font-weight:bold;color:#e2e2e2;transform:scaleY(1.08)">Operations</div>
<div class="t o" style="left:208.300px;top:109.500px;font-size:9.6px;color:#f0f0f0">Add operation</div>
<svg class="abs" style="left:277px;top:111.500px" width="9" height="6" viewBox="0 0 9 6"><path d="M1 1h7l-3.500 3.800z" fill="#e8e8e8"/></svg>
<!-- tree -->
<div class="abs" style="left:18px;top:162px;width:265px;height:16.500px;background:#000"></div>
<svg class="abs" style="left:18px;top:128px" width="270" height="52" viewBox="0 0 270 52">
 <!-- machine icon -->
 <path d="M3.500 5l2.500-2.500h5.500v9.500h2v3.500H3.500z" fill="#72b455"/><path d="M6 2.500h5.500v3H6z" fill="#8fc874"/><rect x="9.300" y="3" width="1.600" height="5" fill="#cfd8c8"/><rect x="7.500" y="11.300" width="6" height="1.400" fill="#c8c8c8"/><rect x="2.500" y="15.600" width="11.500" height="1" fill="#6a6a6a"/>
 <circle cx="8.600" cy="8" r="1.300" fill="#e02a20"/><circle cx="10.400" cy="9.600" r="1.300" fill="#e02a20"/><circle cx="12.200" cy="8.200" r="1.400" fill="#f2c41c"/><circle cx="10.600" cy="7" r="1" fill="#f2c41c"/>
 <!-- op icons -->
 <g id="opi"><rect x="9" y="18.700" width="14" height="14.400" fill="#dce9f8" stroke="#8db6ea" stroke-width="1"/><path d="M17.300 21.200l1.600 0.600-1 3.400-1.800-0.600z" fill="#1c66e0" stroke="#1c66e0" stroke-width="1.200" stroke-linejoin="round"/><path d="M16.800 25l-2.800 5.500" stroke="#18a0a8" stroke-width="1.100"/><rect x="10" y="28.300" width="12" height="2.600" fill="#0e5a34"/><rect x="10" y="28.300" width="12" height=".9" fill="#0a2a18"/><path d="M14.600 29.300l-1 2" stroke="#27c0b0" stroke-width="1"/></g>
 <use href="#opi" y="16.300"/>
 <path d="M242.400 14v37.500" stroke="#d81f26" stroke-width="1.100"/>
 <circle cx="242.400" cy="10.200" r="4.500" fill="#272729" stroke="#f2f2f2" stroke-width="1.100"/><path d="M240.400 9.200h4M240.400 11.200h4" stroke="#f2f2f2" stroke-width=".9"/>
 <circle cx="242.400" cy="26.300" r="4.300" fill="#272729" stroke="#f6f6f6" stroke-width="1.500"/><circle cx="242.400" cy="26.300" r="1.700" fill="#f6f6f6"/>
 <circle cx="242.400" cy="42.500" r="4.300" fill="#000" stroke="#f6f6f6" stroke-width="1.500"/><circle cx="242.400" cy="42.500" r="1.700" fill="#f6f6f6"/>
 <circle cx="257" cy="26.300" r="3.200" fill="#1f5a45"/><circle cx="257" cy="42.500" r="3.200" fill="#1212a8"/>
</svg>
<div class="t o" style="left:34.600px;top:134.100px;font-size:9.6px;color:#f0f0f0">5-axis water jet (A,C)</div>
<div class="t o" style="left:42.400px;top:149.500px;font-size:9.85px;color:#f0f0f0">Water jet cutting 4D - ...</div>
<div class="t o" style="left:152.300px;top:149.500px;font-size:9.6px;color:#1fa57f">T#1</div>
<div class="t o" style="left:181px;top:149.500px;font-size:9.6px;color:#8d8d90">Jet cutter L55, D</div>
<div class="t o" style="left:42.400px;top:165.700px;font-size:9.85px;color:#1fa57f">Water jet cutting 4D - i...</div>
<div class="t o" style="left:152.300px;top:165.700px;font-size:9.6px;color:#1fa57f">T#2</div>
<div class="t o" style="left:181px;top:165.700px;font-size:9.6px;color:#a0a0a3">Jet cutter L55, D</div>


<div id="p2" class="abs panel" style="left:5px;top:415px;width:291px;height:373px"></div>
<div class="abs inner" style="left:42px;top:418px;width:250px;height:367px"></div>
<div class="abs" style="left:9px;top:420px;width:29px;height:8px;background:#1d1d1f;border-radius:3px"></div>
<div class="abs" style="left:9px;top:431px;width:29px;height:31px;background:#1d1d1f;border-radius:5px"></div>
<div class="abs" style="left:53px;top:453px;width:229.500px;height:13px;background:#3b3b40;border-radius:2px"></div>
<div class="abs" style="left:215px;top:453px;width:1.500px;height:13px;background:#6a6a70"></div>
<div class="t" style="left:53.200px;top:428.500px;font-size:11px;font-weight:bold;color:#f4f4f4">Setup</div>
<div class="t r" style="left:81px;top:454.7px;font-weight:bold;">Setup and tooling</div>
<div class="t r" style="left:92.3px;top:470.2px;">WCS</div><div class="t r" style="left:219.400px;top:470.2px">From Previous</div>
<div class="t r" style="left:92.3px;top:485.7px;">Local CS</div><div class="t r" style="left:219.400px;top:485.7px">Off</div>
<div class="t r" style="left:80.5px;top:507.2px;font-weight:bold;">Tool orientation</div><div class="t r" style="left:219.400px;top:507.2px">Click to pick</div>
<div class="t r" style="left:92.3px;top:522.5px;">A (A axis position)</div><div class="t r" style="left:219.400px;top:522.5px">0</div>
<div class="t r" style="left:92.3px;top:537.8000000000001px;">C (C axis position)</div><div class="t r" style="left:219.400px;top:537.8000000000001px">0</div>
<div class="t r" style="left:80.5px;top:559.4000000000001px;font-weight:bold;">Tool coordinates in WCS</div>
<div class="t r" style="left:92.3px;top:575.0px;">X (Axis X Position)</div><div class="t r" style="left:219.400px;top:575.0px">0</div>
<div class="t r" style="left:92.3px;top:590.4000000000001px;">Y (Axis Y Position)</div><div class="t r" style="left:219.400px;top:590.4000000000001px">0</div>
<div class="t r" style="left:92.3px;top:605.7px;">Z (Axis Z Position)</div><div class="t r" style="left:219.400px;top:605.7px">145</div>
<div class="t r" style="left:80.5px;top:627.2px;font-weight:bold;">Axes map</div><div class="t r" style="left:219.400px;top:627.2px">Off</div>
<svg class="abs" style="left:5px;top:415px" width="291" height="373" viewBox="0 0 291 373">
 <!-- side icons: coordinates relative to panel (x-5,y-455) -->
 <g transform="translate(18.400,32)"><circle r="6.800" fill="#f4f4f4"/><path d="M0 0V-5.700A5.700 5.700 0 0 1 5.700 0zM0 0V5.700A5.700 5.700 0 0 1 -5.700 0z" fill="#1d1d1f"/></g>
 <g transform="translate(18.400,63.500)" fill="none" stroke="#cfcfcf" stroke-width="1" stroke-dasharray="1.600 1.200"><path d="M-3.800 -1.500v-5h7.600v5"/><rect x="-6.800" y="-1.500" width="13.600" height="8"/></g>
 <g transform="translate(18.400,95)"><circle r="6" fill="#ededed"/><path d="M-4.500 4.500C-3 -1 1 -4 5.500 -5.500C4 -1 0 3 -4.500 4.500z" fill="#2c2c2e"/><circle r="1.100" fill="#ededed"/></g>
 <g transform="translate(18.400,126.600)" fill="#f2f2f2"><circle r="4.600"/><g id="gt2"><rect x="-1.700" y="-6.500" width="3.400" height="13" rx=".6"/></g><use href="#gt2" transform="rotate(60)"/><use href="#gt2" transform="rotate(120)"/><circle r="2.300" fill="#2c2c2e"/></g>
 <g transform="translate(18.400,158.800)" stroke="#ededed" fill="none" stroke-width="1.100"><path d="M-4 7V-2"/><path d="M-6.300 -1l2.300-3.500 2.300 3.500z" fill="#ededed" stroke="none"/><path d="M4 -7V2" stroke-dasharray="1.800 1.300"/><path d="M-4 -7h8" stroke-dasharray="1.800 1.300"/><path d="M1.700 2l2.300 3.500 2.300-3.500z" fill="#ededed" stroke="none"/></g>
 <g transform="translate(18.400,189.800)" fill="#ededed"><rect x="-4" y="-7" width="8" height="2"/><path d="M-3 -4h6v3l-1.200 1.200h-3.600L-3 -1z"/><path d="M-1.300 1h2.600v5l-1.300 1.500-1.300-1.500z"/></g>
 <g transform="translate(18.400,221)"><circle r="6" fill="#ededed"/><path d="M0 -4l2.200 5a2.300 2.300 0 1 1-4.400 0z" fill="#2c2c2e"/><circle cy="1.800" r="1" fill="#ededed"/></g>
 <g fill="#f2f2f2"><rect x="11.600" y="252.500" width="2.600" height="2.600"/><rect x="17.200" y="252.500" width="2.600" height="2.600"/><rect x="22.800" y="252.500" width="2.600" height="2.600"/></g>
 <!-- tree icons -->
 <g fill="none" stroke="#cfcfcf" stroke-width="1"><path d="M53.500 42.500l2.500 2.800 2.500-2.800"/><path d="M53.500 95l2.500 2.800 2.500-2.800"/><path d="M53.500 147.200l2.500 2.800 2.500-2.800"/></g>
 <!-- wrench -->
 <path d="M64.500 49l5-5a3 3 0 0 1 4-3.600l-1.800 1.800.6 1.600 1.600.6 1.800-1.800a3 3 0 0 1-3.700 3.900l-5 5a1.200 1.200 0 0 1-2.500-2.500z" fill="#f0f0f0" transform="translate(-1.500,-1)"/>
 <!-- WCS icon -->
 <g transform="translate(79.600,60)"><circle r="5" fill="#f4f4f4"/><path d="M0 0V-4.200A4.200 4.200 0 0 1 4.200 0zM0 0V4.200A4.200 4.200 0 0 1 -4.200 0z" fill="#272729"/></g>
 <!-- local cs -->
 <g transform="translate(75,70)"><path d="M1 1v9h9" stroke="#555" fill="none" stroke-width="1"/><path d="M1 10L9.500 1.500" stroke="#e0323c" stroke-width="1.200"/><circle cx="1" cy="1" r="1" fill="#2f6de0"/><circle cx="9.500" cy="10" r="1" fill="#19b38c"/></g>
 <!-- rotate icons -->
 <g id="rot" fill="none" stroke="#168a6c" stroke-width="1"><path d="M63.600 97.200a3.700 2.500 0 1 1 3 1.900"/><path d="M64 98.400l2.600 1-1.800 1.600z" fill="#168a6c" stroke="none"/></g>
 <use href="#rot" x="11.600" y="15.300"/><use href="#rot" x="11.600" y="30.600"/>
 <!-- axis arrows -->
 <g id="ax" stroke="#179a76" stroke-width=".9" fill="#179a76"><path d="M64 153.500l8.500-8.500"/><circle cx="64" cy="153.500" r=".9"/><path d="M73.200 144.300l-3 .8 2.200 2.200z" stroke="none"/></g>
 <use href="#ax" x="11" y="15.600"/><use href="#ax" x="11" y="31"/><use href="#ax" x="11" y="46.300"/>
 <!-- axes map -->
 <rect x="63" y="211.500" width="10" height="10" rx="1.500" fill="none" stroke="#3c3c40" stroke-width="1"/><path d="M65 217.500l2-2.500 1.500 1.500 2.500-1" fill="none" stroke="#178f70" stroke-width="1"/>
</svg>

<div class="abs" style="left:300px;top:36px;width:29px;height:436px;background:#2c2c2e;border-radius:14.500px"></div>
<svg class="abs" style="left:300px;top:36px" width="29" height="436" viewBox="0 0 29 436"><path d="M11.5 16.5l3-3.400 3 3.400z" fill="#f0f0f0"/>
<circle cx="14.500" cy="39.5" r="10.800" fill="none" stroke="#128a6c" stroke-width="1"/>
<circle cx="14.500" cy="64.5" r="10.800" fill="none" stroke="#128a6c" stroke-width="1"/>
<circle cx="14.500" cy="164.7" r="10.800" fill="none" stroke="#128a6c" stroke-width="1"/>
<circle cx="14.500" cy="189.8" r="10.800" fill="none" stroke="#128a6c" stroke-width="1"/>
<circle cx="14.500" cy="215.0" r="10.800" fill="none" stroke="#128a6c" stroke-width="1"/>
<circle cx="14.500" cy="239.8" r="10.800" fill="none" stroke="#128a6c" stroke-width="1"/>
<circle cx="14.500" cy="264.6" r="10.800" fill="none" stroke="#128a6c" stroke-width="1"/>
<g transform="translate(14.500,39.5)" fill="none" stroke="#e6e6e6" stroke-width="1.100"><rect x="-3.200" y="-5" width="6.400" height="4.500" rx=".8"/><rect x="-5" y="-.5" width="10" height="3.200" rx=".8"/><path d="M-3.500 2.700v1.500a1 1 0 0 0 1 1h5a1 1 0 0 0 1-1v-1.500"/></g>
<g transform="translate(14.500,64.5)"><rect x="-3.200" y="-5" width="6.400" height="4.800" rx=".8" fill="#dadada"/><rect x="-5" y="0" width="10" height="3" rx=".5" fill="#f4f4f4"/><rect x="-3.600" y="3.600" width="7.200" height="1.600" rx=".5" fill="#bdbdbd"/></g>
<g transform="translate(14.500,89.5)"><rect x="-3" y="-5.600" width="6" height="5.400" rx="1" fill="#12b58c"/><rect x="-5" y="0" width="10" height="3" rx=".5" fill="#f4f4f4"/><rect x="-3.600" y="3.400" width="7.200" height="1.600" rx=".5" fill="#9a9a9a"/></g>
<rect x="9.500" y="109.8" width="10" height="10.500" rx=".6" fill="#ebebeb"/>
<g transform="translate(14.500,140.0)"><rect x="-3" y="-6" width="6" height="5.600" rx="1" fill="#12b58c"/><rect x="-5" y="-.2" width="10" height="3.400" rx=".5" fill="#12b58c"/><rect x="-3.600" y="3.600" width="7.200" height="1.600" rx=".5" fill="#0f8f6f"/></g>
<g transform="translate(14.500,164.7)"><rect x="-4" y="-5" width="8" height="2.200" rx=".5" fill="#f4f4f4"/><rect x="-4.400" y="-2.200" width="8.800" height="2.600" rx=".5" fill="#f4f4f4"/><path d="M-2.200 1h4.400L0 6z" fill="#e8a81c"/></g>
<g transform="translate(14.500,189.8)"><rect x="-2.400" y="-6" width="4.800" height="1.200" fill="#e6e6e6"/><rect x="-2" y="-4.200" width="4" height="1.200" fill="#e6e6e6"/><rect x="-1.700" y="-2.400" width="3.400" height="8" fill="#e8a81c"/><path d="M-1.700 0l3.400-2M-1.700 3l3.400-2M-1.700 6l3.400-2" stroke="#8a5a10" stroke-width=".8"/></g>
<g transform="translate(14.500,215.0)"><path d="M-5 5.500v-6l2-4.500 1.500 2v8.500z" fill="#e8a81c"/><path d="M-1.500 -3.500l1.500-2h2.500l2.500 4v7h-3v-4h-2.500v-2.200h2.500v-1.500h-3.500z" fill="#f2f2f2"/><rect x="-1.500" y="0" width="3.500" height="2.500" fill="#dcdcdc"/></g>
<g transform="translate(14.500,239.8)"><path d="M-4 -5h6.500a1.500 1.500 0 0 1 1.500 1.500v7a1.500 1.500 0 0 1-1.500 1.500h-6.500v-3h4v-4h-4z" fill="#f2f2f2"/><rect x="-4" y="-1.500" width="3" height="2.500" fill="#cfcfcf"/></g>
<g transform="translate(14.500,264.6)" stroke="#cfcfcf" stroke-width="1.100"><path d="M-5 -2l7 7M-5 1.500l3.500 3.500M-2 -5l7 7M1.500 -5l3.500 3.500M-4.500 -4.500l9 9M5 -2l-7 7M5 1.500l-3.500 3.500M2 -5l-7 7M-1.500 -5l-3.500 3.500M4.500 -4.500l-9 9"/></g>
<rect x="4" y="279.5" width="21" height="1" fill="#4a4a4e"/>
<circle cx="14.500" cy="294.0" r="3" fill="#14d9a8"/>
<path d="M9 321.2v-3.500a2.700 2.700 0 0 1 5.400 0v4a2.700 2.700 0 0 0 5.400 0v-3.500" fill="none" stroke="#d8d8d8" stroke-width="1.100"/>
<path d="M9 339.5q5.500-2.400 11 0v8.600q-5.500-2.400-11 0z" fill="#14c79b"/>
<defs><linearGradient id="sg" x1="0" x2="1"><stop offset="0" stop-color="#777"/><stop offset=".5" stop-color="#cfcfcf"/><stop offset="1" stop-color="#777"/></linearGradient></defs><path d="M9 364.4q5.500-2.200 11 0v9.500q-5.500-2.400-11 0z" fill="url(#sg)" stroke="#14c79b" stroke-width="1.200"/>
<g fill="none" stroke="#14c79b" stroke-width="1.100"><path d="M9 390.3q5.500-2.200 11 0v9q-5.500-2.400-11 0z"/><path d="M14.500 389.3v9M9 394.9q5.500-2.200 11 0"/></g>
<path d="M9.500 415.1q5-2 10 0v8.500q-5-2-10 0z" fill="url(#sg)"/><circle cx="20.500" cy="424.5" r="1.300" fill="#14d9a8"/></svg>
<div class="abs" style="left:689.500px;top:36px;width:329.500px;height:37px;background:#2c2c2e;border-radius:8px"></div>
<svg class="abs" style="left:689.500px;top:36px" width="330" height="37" viewBox="0 0 330 37"><g transform="translate(18.0,18.6)"><path d="M2 -3.800h-3a3.800 3.800 0 0 0 0 7.600h3" fill="none" stroke="#f2f2f2" stroke-width="2.600"/><rect x="4.300" y="-6" width="1.200" height="3.600" fill="#f2f2f2"/><rect x="4.300" y="2.400" width="1.200" height="3.600" fill="#f2f2f2"/><circle cx="5" cy="0" r="1.800" fill="#12c79b"/></g>
<g transform="translate(51.0,18.6)"><path d="M-6 6v-6a6 6 0 0 1 9.500-4.800l2 4v6.800z" fill="#ededed"/><circle cx="-.5" cy="-.5" r="3.600" fill="#2c2c2e"/><circle cx="-.5" cy="-.5" r="2.300" fill="#12c79b"/><rect x="3" y="4.400" width="3" height="1.200" fill="#12c79b"/><rect x="6.500" y="5" width="3" height="1" fill="#cfcfcf"/></g>
<g transform="translate(84.0,18.6)"><rect x="-7" y="-7" width="11" height="1.800" fill="#e8e8e8"/><path d="M-5 -5.200h3.400v12.200l-1.200 1.200h-1l-1.200-1.200z" fill="#cfcfcf"/><path d="M-1 -4.500h4.500v3.500h-2v3h-2.500z" fill="#e8e8e8"/><path d="M-7.500 -1h2v5h-2z" fill="#bdbdbd"/><circle cx="4.300" cy="-3.200" r="2" fill="#12c79b"/></g>
<rect x="99.5" y="9" width="1" height="18.500" fill="#4a4a4e"/>
<text transform="translate(117.0,23.7) scale(1,1.2)" x="0" y="0" style="font-weight:bold;font-size:11.800px" fill="#12c79b" stroke="#12c79b" stroke-width=".35" text-anchor="middle">N1</text>
<g transform="translate(148.5,18.6)"><rect x="-5" y="-6.200" width="10" height="9" fill="#e4e4e4"/><rect x="-5" y="3.600" width="10" height="2.400" fill="#e4e4e4"/><path d="M-4 4.800h8" stroke="#9a9a9a" stroke-width=".8" stroke-dasharray="1 .8"/></g>
<g transform="translate(180.0,18.6)"><rect x="-5.800" y="-5.500" width="3.800" height="3.500" fill="#12c79b"/><path d="M-5.800 -4h3.800" stroke="#2c2c2e" stroke-width=".7"/><rect x="-5.800" y="-1.400" width="3.800" height="3.600" fill="#f2f2f2"/><rect x="-5.400" y="2.800" width="3" height="3" fill="#e0e0e0"/><path d="M-.8 -2.500l1.300-3.800h4.200l1.300 3.800z" fill="#12c79b"/><path d="M1.600 -5l1 1.500 1-1.500" stroke="#2c2c2e" stroke-width=".7" fill="none"/><path d="M-.8 -1.800h7.200v2.500a1.500 1.500 0 0 1-1.500 1.500h-4.200a1.500 1.500 0 0 1-1.500-1.500z" fill="#f2f2f2"/><rect x="1" y="2.800" width="3.600" height="3" fill="#e0e0e0"/></g>
<rect x="196.8" y="9" width="1" height="18.500" fill="#4a4a4e"/>
<g transform="translate(214.0,18.6)"><rect x="-6.500" y="-6.500" width="13" height="13" rx=".8" fill="#e6e6e6"/><rect x="-5" y="-5" width="10" height="4" fill="#8e8e92"/><rect x="-5" y="0.500" width="2" height="2" fill="#55565a"/><rect x="-2.200" y="0.500" width="2" height="2" fill="#55565a"/><rect x="-5" y="3.400" width="2" height="2" fill="#55565a"/><rect x="-2.200" y="3.400" width="2" height="2" fill="#55565a"/><circle cx="3.400" cy="3.200" r="2.600" fill="#12c79b"/></g>
<g transform="translate(246.0,18.6)" fill="none" stroke-width="1"><path d="M-7 -5l3 10 3.500-10 3.500 10 3-10" stroke="#c8c8c8"/><path d="M-7 -1l3.500-3.500 3.500 4 3-4.500 4 2" stroke="#12c79b"/><path d="M-7 3.500l3.500-2 3.500 1 3.500-3 3.500 2" stroke="#2f7ee0"/></g>
<g transform="translate(277.5,18.6)"><rect x="-4.600" y="-7" width="9.200" height="2.600" rx="1" fill="#12a37e"/><rect x="-4.600" y="-4.600" width="9.200" height="2.400" fill="#5fb27a"/><rect x="-4.600" y="-2.400" width="9.200" height="2.600" fill="#c8b75a"/><rect x="-6.800" y="1" width="13.600" height="3" rx="1" fill="#f2f2f2"/><rect x="-5" y="5" width="10" height="1.400" rx=".5" fill="#e0e0e0"/></g>
<g transform="translate(310.0,19.1)"><rect x="-6.8" y="4.4" width="2.900" height="2.300" fill="#12c79b"/><rect x="-6.8" y="1.5" width="2.900" height="2.300" fill="#12c79b"/><rect x="-6.8" y="-1.4" width="2.900" height="2.300" fill="#12c79b"/><rect x="-3.3" y="4.4" width="2.900" height="2.300" fill="#e6e6e6"/><rect x="-3.3" y="1.5" width="2.900" height="2.300" fill="#e6e6e6"/><rect x="-3.3" y="-1.4" width="2.900" height="2.300" fill="#e6e6e6"/><rect x="-3.3" y="-4.3" width="2.900" height="2.300" fill="#e6e6e6"/><rect x="-3.3" y="-7.2" width="2.900" height="2.300" fill="#e6e6e6"/><rect x="0.2" y="4.4" width="2.900" height="2.300" fill="#12c79b"/><rect x="0.2" y="1.5" width="2.900" height="2.300" fill="#12c79b"/><rect x="3.7" y="4.4" width="2.900" height="2.300" fill="#e6e6e6"/><rect x="3.7" y="1.5" width="2.900" height="2.300" fill="#e6e6e6"/><rect x="3.7" y="-1.4" width="2.900" height="2.300" fill="#e6e6e6"/></g></svg>
<svg class="abs" style="left:296px;top:600px" width="240" height="192" viewBox="0 0 240 192"><rect x="4.2" y="7.5" width="28.600" height="84.500" rx="14.300" fill="#2c2c2e"/>
<g transform="translate(18.8,22.0)"><rect x="-3.200" y="-3.200" width="6.400" height="6.400" fill="#f4f4f4"/><path d="M-6 -3v-3h3M3 -6h3v3M6 3v3h-3M-3 6h-3v-3" fill="none" stroke="#14d9a8" stroke-width="1.400"/></g>
<defs><radialGradient id="sph" cx=".4" cy=".35" r=".7"><stop offset="0" stop-color="#fff"/><stop offset=".6" stop-color="#cfcfcf"/><stop offset="1" stop-color="#777"/></radialGradient></defs><g transform="translate(18.8,50.0)"><circle r="6" fill="url(#sph)"/><path d="M-6 .5h12M.3 -6v12" stroke="#555" stroke-width=".9"/></g>
<path transform="translate(18.8,78.0)" d="M-4 -6.500h4.500v3.500h3.500v6.500h-3.500v3h-4.500z" fill="#14d9a8"/>
<path d="M50.6 107.8L77.2 122.8L50.6 138.2L24.0 122.8z" fill="#4c4946"/>
<path d="M24.0 122.8L50.6 138.2L50.6 168.5L24.0 153.0z" fill="#474441"/>
<path d="M50.6 138.2L77.2 122.8L77.2 153.0L50.6 168.5z" fill="#4a4744"/>
<path d="M24.0 122.8L50.6 138.2L77.2 122.8M50.6 138.2L50.6 168.5" fill="none" stroke="#2f3340" stroke-width=".7"/>
<path d="M77.2 122.8L77.2 153.0" stroke="#3d4048" stroke-width=".7" stroke-dasharray="1 1"/>
<path d="M50.6 102.0L50.6 107.5" stroke="#3560b0" stroke-width="1.500"/>
<path d="M19.8 155.6L24.0 153.4" stroke="#c8161d" stroke-width="1.300"/>
<path d="M77.4 153.4L82.0 156.0" stroke="#14a078" stroke-width="1.300"/>
<text x="50.6" y="97.9" text-anchor="middle" style="font-size:11px" fill="#2878e8">Z</text>
<text x="13.1" y="163.3" text-anchor="middle" style="font-size:11px" fill="#c8161d">X</text>
<text x="88.5" y="163.5" text-anchor="middle" style="font-size:11px" fill="#14a078">Y</text>
<text transform="matrix(-.95,.54,-.95,-.54,50.6,123.0)" x="0" y="2.400" text-anchor="middle" style="font-size:7.500px" fill="#e8e8e8">Top</text>
<text transform="matrix(.87,.49,0,1,37.3,145.8)" x="0" y="2.400" text-anchor="middle" style="font-size:7.500px" fill="#e8e8e8">Right</text>
<text transform="matrix(.87,-.49,0,1,64.0,145.8)" x="0" y="2.400" text-anchor="middle" style="font-size:7.500px" fill="#e8e8e8">Back</text>
<rect x="93.0" y="167.7" width="22.4" height="21.500" rx="4" fill="#2c2c2e"/>
<rect x="119.5" y="167.7" width="22.5" height="21.500" rx="4" fill="#2c2c2e"/>
<rect x="146.2" y="167.7" width="88.8" height="21.500" rx="4" fill="#2c2c2e"/>
<path d="M99.7 178.4h9M104.2 173.9v9" stroke="#d0d0d0" stroke-width="1.100"/>
<path d="M127.8 177.3l3 3 3-3" fill="none" stroke="#b8b8b8" stroke-width="1.100"/>
<g transform="translate(157.0,179.0)"><path d="M0 0V-6M0 0l-5.500 4M0 0l5.500 4" stroke="#d8d8d8" stroke-width="1"/><circle cx="0" cy=".8" r="2.600" fill="none" stroke="#14a078" stroke-width="1.200"/><circle cx="0" cy="-6" r=".8" fill="#d8d8d8"/></g>
<text x="167.6" y="181.9" style="font-size:9.600px" fill="#f0f0f0" transform="translate(0,-21.5) scale(1,1.12)">Global CS</text></svg>
</div>
</body>
</html>
